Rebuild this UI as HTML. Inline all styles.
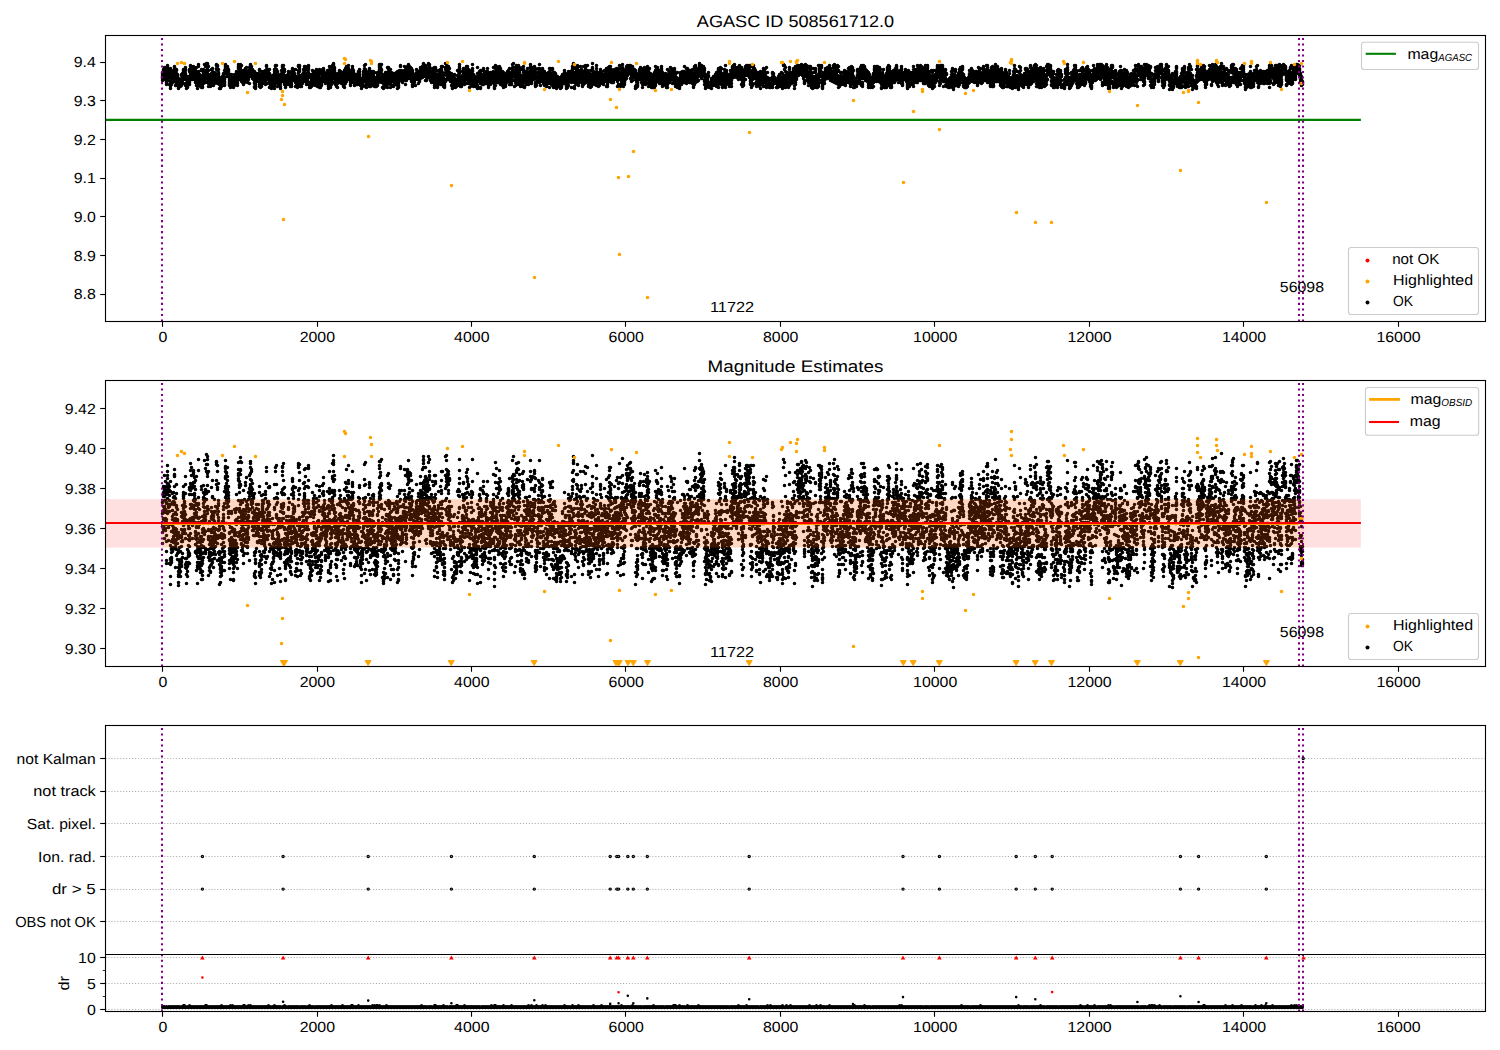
<!DOCTYPE html><html><head><meta charset="utf-8"><title>AGASC ID 508561712.0</title><style>html,body{margin:0;padding:0;background:#fff;overflow:hidden}svg{display:block}text{font-family:"Liberation Sans",sans-serif;fill:#000;text-rendering:geometricPrecision}</style></head><body>
<svg width="1500" height="1050" viewBox="0 0 1500 1050">
<rect width="1500" height="1050" fill="#fff"/>
<defs>
<clipPath id="c0"><rect x="105.5" y="35.5" width="1380.0" height="286.0"/></clipPath>
<clipPath id="c1"><rect x="105.5" y="380.5" width="1380.0" height="286.0"/></clipPath>
<clipPath id="c2"><rect x="105.5" y="725.5" width="1380.0" height="286.0"/></clipPath>
</defs>
<g clip-path="url(#c0)"><path transform="translate(0.5 0.5)" fill="none" stroke="#000" stroke-width="3.6" stroke-linecap="round" d="M162 72h0m0 2h0m0 2h0m0 1h0m0 1h0m0 2h0m1-11h0m0 1h0m0 1h0m0 2h0m0 1h0m0 1h0m0 1h0m0 1h0m1-10h0m0 2h0m0 1h0m0 1h0m0 1h0m0 1h0m0 1h0m0 2h0m0 3h0m1-11h0m0 1h0m0 1h0m0 2h0m0 2h0m0 1h0m0 1h0m0 1h0m0 1h0m1-7h0m0 1h0m0 3h0m0 1h0m0 1h0m0 2h0m0 1h0m0 2h0m0 2h0m1-19h0m0 1h0m0 1h0m0 1h0m0 1h0m0 2h0m0 3h0m1-5h0m0 1h0m0 3h0m0 4h0m0 3h0m1-11h0m0 1h0m0 1h0m0 1h0m0 1h0m0 1h0m0 2h0m0 8h0m1-16h0m0 2h0m0 3h0m0 3h0m0 5h0m0 2h0m0 1h0m0 2h0m0 2h0m1-10h0m0 2h0m0 1h0m0 1h0m0 1h0m0 1h0m1-13h0m0 1h0m0 2h0m0 1h0m0 1h0m0 1h0m0 2h0m0 1h0m0 1h0m0 1h0m1-12h0m0 1h0m0 1h0m0 1h0m0 2h0m0 2h0m0 1h0m0 1h0m0 1h0m0 1h0m1-15h0m0 1h0m0 2h0m0 2h0m0 1h0m0 1h0m0 3h0m0 2h0m0 3h0m1-10h0m0 3h0m0 1h0m0 1h0m0 1h0m0 1h0m0 2h0m0 1h0m0 4h0m1-16h0m0 1h0m0 3h0m0 2h0m0 2h0m0 1h0m0 1h0m0 1h0m0 1h0m0 2h0m1-9h0m0 1h0m0 1h0m0 3h0m0 1h0m0 2h0m0 1h0m1-5h0m0 1h0m0 3h0m0 3h0m0 1h0m0 1h0m0 1h0m1-9h0m0 2h0m0 3h0m0 1h0m0 1h0m1-4h0m0 1h0m0 2h0m0 1h0m1-12h0m0 1h0m0 3h0m0 1h0m0 1h0m0 1h0m0 2h0m0 1h0m0 1h0m1-12h0m0 1h0m0 1h0m0 1h0m0 2h0m0 2h0m0 2h0m0 1h0m1-14h0m0 1h0m0 1h0m0 1h0m0 1h0m0 1h0m0 1h0m0 1h0m0 1h0m0 1h0m1-6h0m0 1h0m0 1h0m0 1h0m0 1h0m0 2h0m1-11h0m0 2h0m0 1h0m0 3h0m0 2h0m0 1h0m0 2h0m0 1h0m0 4h0m0 1h0m0 1h0m1-9h0m0 7h0m0 1h0m0 1h0m0 1h0m0 2h0m1-12h0m0 5h0m0 3h0m0 1h0m0 1h0m0 1h0m1-10h0m0 2h0m0 2h0m0 1h0m0 1h0m0 1h0m1-15h0m0 1h0m0 1h0m0 5h0m0 1h0m0 2h0m0 1h0m0 1h0m0 1h0m0 2h0m1-19h0m0 1h0m0 3h0m0 1h0m0 3h0m0 1h0m0 1h0m0 1h0m0 2h0m1-12h0m0 1h0m0 3h0m0 1h0m0 2h0m0 3h0m1-7h0m0 6h0m0 2h0m0 2h0m1-13h0m0 1h0m0 1h0m0 1h0m0 3h0m0 1h0m0 3h0m1-9h0m0 1h0m0 1h0m0 2h0m0 1h0m0 1h0m0 1h0m0 1h0m0 1h0m1-8h0m0 2h0m0 2h0m0 2h0m0 2h0m0 2h0m0 1h0m0 1h0m0 2h0m1-15h0m0 6h0m0 1h0m0 1h0m0 1h0m0 1h0m0 2h0m0 3h0m0 3h0m1-12h0m0 6h0m0 1h0m0 1h0m0 1h0m0 1h0m0 1h0m0 1h0m0 3h0m1-24h0m0 2h0m0 5h0m0 1h0m0 1h0m0 2h0m0 1h0m0 1h0m0 1h0m0 4h0m0 1h0m1-9h0m0 1h0m0 1h0m0 1h0m0 3h0m0 1h0m0 1h0m0 1h0m0 1h0m0 1h0m1-6h0m0 1h0m0 1h0m0 1h0m0 1h0m0 1h0m0 1h0m0 1h0m1-17h0m0 1h0m0 6h0m0 3h0m0 1h0m0 1h0m0 1h0m0 1h0m0 1h0m0 2h0m0 1h0m1-12h0m0 2h0m0 1h0m0 1h0m0 1h0m0 1h0m0 1h0m0 2h0m0 2h0m0 1h0m1-18h0m0 1h0m0 1h0m0 1h0m0 1h0m0 3h0m0 1h0m0 2h0m0 2h0m0 2h0m1-19h0m0 7h0m0 1h0m0 1h0m0 1h0m0 1h0m0 3h0m0 4h0m1-16h0m0 4h0m0 5h0m0 1h0m0 2h0m0 3h0m0 1h0m1-19h0m0 2h0m0 1h0m0 5h0m0 1h0m0 1h0m1-10h0m0 1h0m0 1h0m0 2h0m0 2h0m0 1h0m0 3h0m0 1h0m1-8h0m0 4h0m0 4h0m0 2h0m0 2h0m0 1h0m0 2h0m0 2h0m0 3h0m1-10h0m0 4h0m0 2h0m0 1h0m0 2h0m1-7h0m0 1h0m0 1h0m0 1h0m0 1h0m0 1h0m0 1h0m0 2h0m1-17h0m0 4h0m0 1h0m0 1h0m0 2h0m0 1h0m0 2h0m0 1h0m0 3h0m1-16h0m0 3h0m0 4h0m0 3h0m0 1h0m0 1h0m0 1h0m0 1h0m0 1h0m0 1h0m1-9h0m0 1h0m0 1h0m0 1h0m0 1h0m0 1h0m0 1h0m0 4h0m1-13h0m0 2h0m0 2h0m0 2h0m0 2h0m0 1h0m0 1h0m0 1h0m1-10h0m0 1h0m0 2h0m0 1h0m0 1h0m0 1h0m0 1h0m0 1h0m0 1h0m1-18h0m0 1h0m0 3h0m0 1h0m1-4h0m0 1h0m0 3h0m0 1h0m0 3h0m0 1h0m0 5h0m0 1h0m0 3h0m1-14h0m0 3h0m0 1h0m0 1h0m0 1h0m0 1h0m0 2h0m0 1h0m0 3h0m1-5h0m0 2h0m0 3h0m0 1h0m0 1h0m0 4h0m1-6h0m0 1h0m0 1h0m0 1h0m0 1h0m0 1h0m0 1h0m1-10h0m0 2h0m0 3h0m0 2h0m0 1h0m1-10h0m0 1h0m0 2h0m0 2h0m0 1h0m0 1h0m0 1h0m0 1h0m1-12h0m0 1h0m0 1h0m0 1h0m0 1h0m0 1h0m0 2h0m0 1h0m1-11h0m0 3h0m0 5h0m0 1h0m0 2h0m0 1h0m0 1h0m0 1h0m0 1h0m1-21h0m0 1h0m0 1h0m0 1h0m0 1h0m0 1h0m0 1h0m0 1h0m1-5h0m0 1h0m0 2h0m0 1h0m0 1h0m0 1h0m0 1h0m0 3h0m1-10h0m0 1h0m0 1h0m0 1h0m0 1h0m0 2h0m0 1h0m1-4h0m0 1h0m0 1h0m0 1h0m0 1h0m0 1h0m0 1h0m1-1h0m0 3h0m0 1h0m0 1h0m0 1h0m0 1h0m0 1h0m0 1h0m0 1h0m0 1h0m1-8h0m0 2h0m0 1h0m0 1h0m0 1h0m0 1h0m0 4h0m1-13h0m0 3h0m0 1h0m0 1h0m0 1h0m0 1h0m0 1h0m0 1h0m0 1h0m1-7h0m0 1h0m0 1h0m0 1h0m0 1h0m0 1h0m0 1h0m1-3h0m0 2h0m0 1h0m0 1h0m0 1h0m0 1h0m0 1h0m1-13h0m0 2h0m0 1h0m0 1h0m0 1h0m0 1h0m0 1h0m0 4h0m1-11h0m0 2h0m0 2h0m0 1h0m0 1h0m0 1h0m0 1h0m0 1h0m1-12h0m0 2h0m0 1h0m0 1h0m0 2h0m0 3h0m0 2h0m0 1h0m0 1h0m1-3h0m0 2h0m0 2h0m1-21h0m0 2h0m0 1h0m0 1h0m0 4h0m0 3h0m0 1h0m0 2h0m0 1h0m1-12h0m0 1h0m0 1h0m0 1h0m0 3h0m0 1h0m0 4h0m1-14h0m0 2h0m0 1h0m0 2h0m0 3h0m0 1h0m0 1h0m0 4h0m0 1h0m1-14h0m0 7h0m0 2h0m0 1h0m0 1h0m0 1h0m0 2h0m0 1h0m0 1h0m1-9h0m0 3h0m0 1h0m0 1h0m0 1h0m0 1h0m0 2h0m0 1h0m1-12h0m0 4h0m0 2h0m0 1h0m0 1h0m0 1h0m0 1h0m0 1h0m0 2h0m0 1h0m1-12h0m0 3h0m0 1h0m0 1h0m0 1h0m0 1h0m0 3h0m1-14h0m0 1h0m0 5h0m0 2h0m0 2h0m0 1h0m0 1h0m1-13h0m0 5h0m0 1h0m0 2h0m0 1h0m0 2h0m0 1h0m0 2h0m1-8h0m0 3h0m0 1h0m0 1h0m0 1h0m0 1h0m0 1h0m0 1h0m1-12h0m0 2h0m0 1h0m0 1h0m0 1h0m0 2h0m0 2h0m1-12h0m0 3h0m0 1h0m0 5h0m0 7h0m1-19h0m0 1h0m0 2h0m0 1h0m0 1h0m0 1h0m0 4h0m1-8h0m0 2h0m0 1h0m0 1h0m0 1h0m0 1h0m0 1h0m1-4h0m0 1h0m0 1h0m0 1h0m0 1h0m0 1h0m0 2h0m0 1h0m0 1h0m1-7h0m0 4h0m0 1h0m0 1h0m0 1h0m0 1h0m1-8h0m0 3h0m0 1h0m0 1h0m0 1h0m0 2h0m0 3h0m0 1h0m0 3h0m0 1h0m1-11h0m0 3h0m0 3h0m0 1h0m0 1h0m0 2h0m0 1h0m0 1h0m1-15h0m0 1h0m0 1h0m0 1h0m0 1h0m0 1h0m0 3h0m1-6h0m0 1h0m0 1h0m0 1h0m0 1h0m0 1h0m1-7h0m0 1h0m0 1h0m0 1h0m0 1h0m0 1h0m0 2h0m1-11h0m0 1h0m0 4h0m0 5h0m0 1h0m0 2h0m0 2h0m0 1h0m0 1h0m1-12h0m0 5h0m0 4h0m0 3h0m0 1h0m1-16h0m0 3h0m0 1h0m0 2h0m0 1h0m0 2h0m0 2h0m0 1h0m0 1h0m0 1h0m0 1h0m1-14h0m0 1h0m0 1h0m0 1h0m0 1h0m0 1h0m0 2h0m1-8h0m0 1h0m0 3h0m0 1h0m0 1h0m0 1h0m0 1h0m0 3h0m1-8h0m0 2h0m0 1h0m0 3h0m0 1h0m0 1h0m0 1h0m1-13h0m0 1h0m0 5h0m0 3h0m0 2h0m0 3h0m1-19h0m0 1h0m0 3h0m0 5h0m0 3h0m0 6h0m1-11h0m0 1h0m0 2h0m0 1h0m0 1h0m0 1h0m0 1h0m0 4h0m1-14h0m0 3h0m0 1h0m0 1h0m0 2h0m0 1h0m0 2h0m1-10h0m0 4h0m0 1h0m0 1h0m0 1h0m0 1h0m0 1h0m0 2h0m0 2h0m0 5h0m1-11h0m0 5h0m0 4h0m0 1h0m1-8h0m0 3h0m0 3h0m0 1h0m0 3h0m1-13h0m0 1h0m0 1h0m0 1h0m0 1h0m0 2h0m0 3h0m0 3h0m1-9h0m0 1h0m0 1h0m0 1h0m0 1h0m0 1h0m0 1h0m1-15h0m0 2h0m0 2h0m0 1h0m0 2h0m0 4h0m0 1h0m0 1h0m0 1h0m0 2h0m0 3h0m1-23h0m0 1h0m1-1h0m0 4h0m0 2h0m0 2h0m0 2h0m0 3h0m0 1h0m0 1h0m0 1h0m0 1h0m1-11h0m0 1h0m0 3h0m0 2h0m0 1h0m0 2h0m0 1h0m0 2h0m0 3h0m1-10h0m0 1h0m0 1h0m0 1h0m0 1h0m0 1h0m1-6h0m0 1h0m0 1h0m0 3h0m0 1h0m0 1h0m0 1h0m0 2h0m1-11h0m0 3h0m0 3h0m0 2h0m0 1h0m0 3h0m0 2h0m1-18h0m0 3h0m0 3h0m0 1h0m0 3h0m0 1h0m1-16h0m0 1h0m0 1h0m0 3h0m0 1h0m0 2h0m0 1h0m0 1h0m0 2h0m0 2h0m1-14h0m0 3h0m0 2h0m0 1h0m0 1h0m0 1h0m0 1h0m0 1h0m1-6h0m0 2h0m0 6h0m0 2h0m0 1h0m0 1h0m0 1h0m0 2h0m1-6h0m0 1h0m0 2h0m0 1h0m0 2h0m0 1h0m0 2h0m1-12h0m0 1h0m0 2h0m0 1h0m0 1h0m0 1h0m0 1h0m0 1h0m0 1h0m1-8h0m0 1h0m0 1h0m0 1h0m0 1h0m0 1h0m0 1h0m0 1h0m0 1h0m1-13h0m0 2h0m0 1h0m0 1h0m0 1h0m0 1h0m0 1h0m0 2h0m0 1h0m0 1h0m0 1h0m1-11h0m0 4h0m0 1h0m0 1h0m0 2h0m0 1h0m0 2h0m0 1h0m1-7h0m0 1h0m0 2h0m0 1h0m0 2h0m0 1h0m0 1h0m0 1h0m1-15h0m0 4h0m0 1h0m0 2h0m0 1h0m0 1h0m0 2h0m0 2h0m0 2h0m1-18h0m0 1h0m0 1h0m0 3h0m0 3h0m0 1h0m0 2h0m0 1h0m1-11h0m0 1h0m0 1h0m0 2h0m0 1h0m0 1h0m0 1h0m0 1h0m1-4h0m0 1h0m0 2h0m0 1h0m0 1h0m0 1h0m0 1h0m1-11h0m0 7h0m0 2h0m0 1h0m0 1h0m0 1h0m0 1h0m0 4h0m1-10h0m0 2h0m0 1h0m0 1h0m0 1h0m0 1h0m0 2h0m0 1h0m1-8h0m0 1h0m0 1h0m0 1h0m0 1h0m0 1h0m0 1h0m0 1h0m0 1h0m0 2h0m1-22h0m0 1h0m0 4h0m0 2h0m0 1h0m1-8h0m0 1h0m0 2h0m0 2h0m0 1h0m0 4h0m0 1h0m0 1h0m0 1h0m0 4h0m1-5h0m0 1h0m0 1h0m0 2h0m0 1h0m0 1h0m0 2h0m0 1h0m1-9h0m0 1h0m0 1h0m0 1h0m0 1h0m0 1h0m0 1h0m0 1h0m0 2h0m1-12h0m0 1h0m0 1h0m0 1h0m0 1h0m0 1h0m0 3h0m0 1h0m1-14h0m0 3h0m0 2h0m0 1h0m0 1h0m0 1h0m0 1h0m0 1h0m0 1h0m1-14h0m0 2h0m0 1h0m0 1h0m0 1h0m0 1h0m0 1h0m0 1h0m1-8h0m0 1h0m0 2h0m0 4h0m0 1h0m0 2h0m0 1h0m0 2h0m0 1h0m0 1h0m1-6h0m0 1h0m0 1h0m0 2h0m0 1h0m0 2h0m0 2h0m1-15h0m0 3h0m0 3h0m0 2h0m0 1h0m0 1h0m0 2h0m1-16h0m0 1h0m0 2h0m0 1h0m0 3h0m0 1h0m0 1h0m0 3h0m0 7h0m1-10h0m0 8h0m0 1h0m0 1h0m0 3h0m1-12h0m0 7h0m0 3h0m0 1h0m0 1h0m1-13h0m0 4h0m0 2h0m0 2h0m0 1h0m0 2h0m0 1h0m1-16h0m0 9h0m0 1h0m0 1h0m0 1h0m0 2h0m0 1h0m1-13h0m0 1h0m0 1h0m0 1h0m0 1h0m0 2h0m0 3h0m1-10h0m0 2h0m0 1h0m0 1h0m0 1h0m0 1h0m0 2h0m0 1h0m0 2h0m1-5h0m0 1h0m0 3h0m0 1h0m0 1h0m0 1h0m0 1h0m1-16h0m0 2h0m0 1h0m0 1h0m0 4h0m0 1h0m0 1h0m0 1h0m0 2h0m1-6h0m0 4h0m0 1h0m0 2h0m0 1h0m0 1h0m0 1h0m1-14h0m0 1h0m0 3h0m0 1h0m0 2h0m0 1h0m0 3h0m0 3h0m1-17h0m0 1h0m0 1h0m0 3h0m0 5h0m0 1h0m0 1h0m0 2h0m0 4h0m1-9h0m0 2h0m0 5h0m0 1h0m0 1h0m1-14h0m0 4h0m0 1h0m0 1h0m0 3h0m0 1h0m0 1h0m0 1h0m1-16h0m0 2h0m0 3h0m0 2h0m0 1h0m0 1h0m0 1h0m1-11h0m0 1h0m0 1h0m0 1h0m0 2h0m0 2h0m0 1h0m0 1h0m0 1h0m1-6h0m0 2h0m0 1h0m0 1h0m0 1h0m0 1h0m0 3h0m1-5h0m0 1h0m0 1h0m0 1h0m0 1h0m0 3h0m1-10h0m0 4h0m0 1h0m0 1h0m0 1h0m0 1h0m1-11h0m0 3h0m0 2h0m0 1h0m0 1h0m0 1h0m0 4h0m1-9h0m0 1h0m0 2h0m0 5h0m0 1h0m0 1h0m0 2h0m0 1h0m0 2h0m1-22h0m0 3h0m0 1h0m0 2h0m0 1h0m0 1h0m0 2h0m0 1h0m1-5h0m0 4h0m0 1h0m0 1h0m0 1h0m0 1h0m0 2h0m0 2h0m0 1h0m0 1h0m0 1h0m1-15h0m0 1h0m0 3h0m0 1h0m0 1h0m0 1h0m0 1h0m0 1h0m0 3h0m1-19h0m0 2h0m0 1h0m0 2h0m0 1h0m0 1h0m0 1h0m0 1h0m0 4h0m1-15h0m0 1h0m0 1h0m0 1h0m0 2h0m0 5h0m0 3h0m0 2h0m0 4h0m1-15h0m0 1h0m0 2h0m0 1h0m0 2h0m0 1h0m0 1h0m0 1h0m0 1h0m1-3h0m0 1h0m0 1h0m0 1h0m0 1h0m0 1h0m0 1h0m0 1h0m0 3h0m1-8h0m0 2h0m0 1h0m0 2h0m0 1h0m0 1h0m0 1h0m0 1h0m0 1h0m1-13h0m0 4h0m0 1h0m0 1h0m0 1h0m0 2h0m0 1h0m0 4h0m1-14h0m0 2h0m0 1h0m0 1h0m0 1h0m0 1h0m0 3h0m1-12h0m0 2h0m0 3h0m0 1h0m0 1h0m0 1h0m0 2h0m0 2h0m1-11h0m0 1h0m0 1h0m0 1h0m0 1h0m0 1h0m0 2h0m1-3h0m0 1h0m0 1h0m0 1h0m0 2h0m0 1h0m0 2h0m1-11h0m0 1h0m0 3h0m0 1h0m0 1h0m0 1h0m0 1h0m0 1h0m1-6h0m0 2h0m0 3h0m0 2h0m0 1h0m0 2h0m0 1h0m1-16h0m0 1h0m0 1h0m0 4h0m0 1h0m0 4h0m0 2h0m0 1h0m0 3h0m1-19h0m0 4h0m0 1h0m0 1h0m0 1h0m0 3h0m0 2h0m0 1h0m0 2h0m1-17h0m0 3h0m0 1h0m0 2h0m0 3h0m0 4h0m0 2h0m1-10h0m0 1h0m0 1h0m0 2h0m0 1h0m0 1h0m0 1h0m0 1h0m1-14h0m0 3h0m0 1h0m0 1h0m0 1h0m0 1h0m0 1h0m0 2h0m0 2h0m1-5h0m0 1h0m0 1h0m0 1h0m0 1h0m0 1h0m0 1h0m0 1h0m1-5h0m0 1h0m0 2h0m0 1h0m0 1h0m0 2h0m0 1h0m0 2h0m0 1h0m1-15h0m0 1h0m0 1h0m0 1h0m0 1h0m0 2h0m0 1h0m0 2h0m0 1h0m0 1h0m0 1h0m1-16h0m0 2h0m0 1h0m0 2h0m0 2h0m0 1h0m1-4h0m0 2h0m0 1h0m0 1h0m0 1h0m0 1h0m0 1h0m0 1h0m0 2h0m1-2h0m0 1h0m0 1h0m0 1h0m0 2h0m0 2h0m1-11h0m0 3h0m0 1h0m0 1h0m0 2h0m0 1h0m0 1h0m0 1h0m1-10h0m0 2h0m0 1h0m0 1h0m0 1h0m0 1h0m0 1h0m0 1h0m0 1h0m0 1h0m1-8h0m0 1h0m0 2h0m0 2h0m0 1h0m0 1h0m0 1h0m1-13h0m0 1h0m0 2h0m0 1h0m0 1h0m0 1h0m0 2h0m0 1h0m0 1h0m0 1h0m1-13h0m0 2h0m0 1h0m0 2h0m0 1h0m0 1h0m0 1h0m0 5h0m1-2h0m0 1h0m0 1h0m0 1h0m0 1h0m0 1h0m1-7h0m0 2h0m0 2h0m0 1h0m0 1h0m0 1h0m0 1h0m0 2h0m1-10h0m0 1h0m0 2h0m0 1h0m0 1h0m0 1h0m1-13h0m0 2h0m0 1h0m0 1h0m0 2h0m0 1h0m0 1h0m0 2h0m1-16h0m0 3h0m0 1h0m0 3h0m0 2h0m0 1h0m0 2h0m0 2h0m0 2h0m0 5h0m1-22h0m0 5h0m0 2h0m0 2h0m0 2h0m0 1h0m0 3h0m0 1h0m0 5h0m1-10h0m0 4h0m0 1h0m0 1h0m0 1h0m0 1h0m0 4h0m1-13h0m0 2h0m0 1h0m0 1h0m0 1h0m0 1h0m0 1h0m0 1h0m1-11h0m0 2h0m0 3h0m0 1h0m0 1h0m0 1h0m0 1h0m0 1h0m0 3h0m1-16h0m0 1h0m0 3h0m0 1h0m0 1h0m0 1h0m0 1h0m0 1h0m0 3h0m0 6h0m1-15h0m0 5h0m0 2h0m0 1h0m0 1h0m0 1h0m0 1h0m0 1h0m0 3h0m1-12h0m0 2h0m0 1h0m0 1h0m0 2h0m0 2h0m1-11h0m0 1h0m0 2h0m0 1h0m0 2h0m0 1h0m0 3h0m0 1h0m0 3h0m1-14h0m0 1h0m0 1h0m0 1h0m0 2h0m0 1h0m0 1h0m0 1h0m0 2h0m0 1h0m1-10h0m0 5h0m0 1h0m0 1h0m0 1h0m0 1h0m0 3h0m0 2h0m1-7h0m0 1h0m0 2h0m0 1h0m0 1h0m0 1h0m0 1h0m1-5h0m0 1h0m0 2h0m0 1h0m0 1h0m1-14h0m0 1h0m0 2h0m0 1h0m0 2h0m0 1h0m0 3h0m0 1h0m0 1h0m0 1h0m1-12h0m0 1h0m0 2h0m0 1h0m0 1h0m0 2h0m0 2h0m1-18h0m0 1h0m0 1h0m0 1h0m0 2h0m0 1h0m0 1h0m0 1h0m0 1h0m0 4h0m1-13h0m0 2h0m0 1h0m0 2h0m0 1h0m0 1h0m0 6h0m0 1h0m0 1h0m0 1h0m1-16h0m0 5h0m0 1h0m0 3h0m0 1h0m0 3h0m0 3h0m0 1h0m0 1h0m1-7h0m0 1h0m0 1h0m0 2h0m0 8h0m1-8h0m0 3h0m0 1h0m0 3h0m0 1h0m0 1h0m1-14h0m0 6h0m0 1h0m0 1h0m0 1h0m0 2h0m0 1h0m0 1h0m1-15h0m0 3h0m0 2h0m0 1h0m0 1h0m0 2h0m0 2h0m0 1h0m0 2h0m1-14h0m0 2h0m0 1h0m0 1h0m0 1h0m0 1h0m0 1h0m0 1h0m0 1h0m1-14h0m0 5h0m0 1h0m0 4h0m0 1h0m0 1h0m0 3h0m0 1h0m0 1h0m0 3h0m1-20h0m0 2h0m0 3h0m0 3h0m0 2h0m0 1h0m0 1h0m1-9h0m0 2h0m0 1h0m0 2h0m0 1h0m0 1h0m0 2h0m1-10h0m0 3h0m0 2h0m0 2h0m0 1h0m0 1h0m0 1h0m0 1h0m0 1h0m0 2h0m0 1h0m0 3h0m1-15h0m0 2h0m0 1h0m0 2h0m0 1h0m0 1h0m0 1h0m0 1h0m0 4h0m1-9h0m0 1h0m0 1h0m0 1h0m0 1h0m0 1h0m1-8h0m0 1h0m0 2h0m0 2h0m0 1h0m0 1h0m0 1h0m0 4h0m0 1h0m1-13h0m0 2h0m0 3h0m0 1h0m0 1h0m0 1h0m0 1h0m0 1h0m1-7h0m0 1h0m0 1h0m0 1h0m0 1h0m0 1h0m0 1h0m0 2h0m1-12h0m0 1h0m0 1h0m0 1h0m0 2h0m0 1h0m0 2h0m1-9h0m0 2h0m0 1h0m0 1h0m0 1h0m0 1h0m0 1h0m0 1h0m0 6h0m0 3h0m1-15h0m0 3h0m0 1h0m0 2h0m0 3h0m0 2h0m0 1h0m0 1h0m0 1h0m1-17h0m0 1h0m0 1h0m0 3h0m0 1h0m0 1h0m0 2h0m1-14h0m0 1h0m0 6h0m0 1h0m0 2h0m0 1h0m0 1h0m0 2h0m0 1h0m1-10h0m0 3h0m0 2h0m0 1h0m0 1h0m0 2h0m0 1h0m1-4h0m0 2h0m0 1h0m0 1h0m0 2h0m1-9h0m0 1h0m0 1h0m0 2h0m1-11h0m0 4h0m0 1h0m0 1h0m0 1h0m0 1h0m0 1h0m0 1h0m1-9h0m0 4h0m0 1h0m0 2h0m0 2h0m0 2h0m0 2h0m0 4h0m1-13h0m0 2h0m0 1h0m0 1h0m0 2h0m0 1h0m0 1h0m0 1h0m1-14h0m0 1h0m0 2h0m0 2h0m1-7h0m0 3h0m0 1h0m0 3h0m1-5h0m0 4h0m0 2h0m0 1h0m0 1h0m0 1h0m0 1h0m0 2h0m1-11h0m0 1h0m0 5h0m0 2h0m0 1h0m0 1h0m1-9h0m0 3h0m0 1h0m0 1h0m0 1h0m0 1h0m0 2h0m0 2h0m0 2h0m1-11h0m0 2h0m0 2h0m0 3h0m0 1h0m0 3h0m0 3h0m0 1h0m0 1h0m1-10h0m0 1h0m0 1h0m0 1h0m0 1h0m0 1h0m0 1h0m0 1h0m1-9h0m0 1h0m0 2h0m0 1h0m0 1h0m0 1h0m0 2h0m1-8h0m0 1h0m0 1h0m0 1h0m0 1h0m0 7h0m1-16h0m0 3h0m0 1h0m0 1h0m0 1h0m0 2h0m0 1h0m1-6h0m0 1h0m0 1h0m0 1h0m0 1h0m0 1h0m0 2h0m1-8h0m0 2h0m0 1h0m0 1h0m0 1h0m0 1h0m0 1h0m0 1h0m0 4h0m1-11h0m0 2h0m0 1h0m0 1h0m0 1h0m0 1h0m0 2h0m0 1h0m1-14h0m0 2h0m0 1h0m0 1h0m0 1h0m0 1h0m0 1h0m0 4h0m1-8h0m0 1h0m0 1h0m0 1h0m0 1h0m0 2h0m0 1h0m1-11h0m0 3h0m0 1h0m0 1h0m0 1h0m0 1h0m0 1h0m0 3h0m1-14h0m0 1h0m0 1h0m0 3h0m0 1h0m0 1h0m0 1h0m0 1h0m0 2h0m1-6h0m0 1h0m0 2h0m0 1h0m0 1h0m0 1h0m1-9h0m0 2h0m0 1h0m0 1h0m0 1h0m0 1h0m0 1h0m0 3h0m0 1h0m0 4h0m1-12h0m0 1h0m0 2h0m0 1h0m0 2h0m0 2h0m0 3h0m0 1h0m1-12h0m0 1h0m0 1h0m0 3h0m0 1h0m0 1h0m1-12h0m0 2h0m0 4h0m0 2h0m0 1h0m0 3h0m0 1h0m0 1h0m1-13h0m0 2h0m0 1h0m0 1h0m0 2h0m0 3h0m0 1h0m0 3h0m1-6h0m0 1h0m0 3h0m0 1h0m0 1h0m0 1h0m0 1h0m0 1h0m1-9h0m0 3h0m0 1h0m0 1h0m0 1h0m0 2h0m0 1h0m0 2h0m1-14h0m0 4h0m0 2h0m0 1h0m0 1h0m0 1h0m0 1h0m0 1h0m0 1h0m1-11h0m0 3h0m0 1h0m0 1h0m0 1h0m0 1h0m0 4h0m0 2h0m1-15h0m0 4h0m0 1h0m0 1h0m0 1h0m0 2h0m0 1h0m0 3h0m0 1h0m0 2h0m0 2h0m0 2h0m1-20h0m0 1h0m0 1h0m0 2h0m0 3h0m0 1h0m0 1h0m1 0h0m0 1h0m0 2h0m0 1h0m0 1h0m0 1h0m0 2h0m0 1h0m1-11h0m0 1h0m0 3h0m0 4h0m0 1h0m0 1h0m0 2h0m0 1h0m1-17h0m0 3h0m0 1h0m0 1h0m0 1h0m0 1h0m1-2h0m0 2h0m0 1h0m0 1h0m0 1h0m0 1h0m0 1h0m1-13h0m0 3h0m0 4h0m0 1h0m0 1h0m0 1h0m0 1h0m0 1h0m0 1h0m0 1h0m0 1h0m1-18h0m0 2h0m0 2h0m0 1h0m0 2h0m0 1h0m0 2h0m1-10h0m0 6h0m0 1h0m0 2h0m0 2h0m0 1h0m0 1h0m0 1h0m0 4h0m1-7h0m0 2h0m0 1h0m0 1h0m0 1h0m0 1h0m0 1h0m0 2h0m1-6h0m0 3h0m0 1h0m0 1h0m0 1h0m0 1h0m1-24h0m0 4h0m0 2h0m0 3h0m0 2h0m0 5h0m0 2h0m1-18h0m0 1h0m0 2h0m0 2h0m0 1h0m0 3h0m0 2h0m0 1h0m1-9h0m0 1h0m0 2h0m0 4h0m0 1h0m0 1h0m0 3h0m0 1h0m1-13h0m0 1h0m0 1h0m0 1h0m0 1h0m0 1h0m0 2h0m0 2h0m0 1h0m0 3h0m1-11h0m0 4h0m0 1h0m0 1h0m0 1h0m0 2h0m0 1h0m1-3h0m0 1h0m0 1h0m0 1h0m0 1h0m0 1h0m0 1h0m1-8h0m0 12h0m1-2h0m0 4h0m0 1h0m1-13h0m0 2h0m0 1h0m0 1h0m0 1h0m0 1h0m0 2h0m0 3h0m0 1h0m1-13h0m0 3h0m0 2h0m0 2h0m0 3h0m0 1h0m0 1h0m1 0h0m0 1h0m1-8h0m0 1h0m0 4h0m0 1h0m0 1h0m1-16h0m0 5h0m0 5h0m0 1h0m0 1h0m0 3h0m1-15h0m0 1h0m0 3h0m0 3h0m0 1h0m0 1h0m0 1h0m0 1h0m0 1h0m1-18h0m0 2h0m0 2h0m0 1h0m0 1h0m0 1h0m0 2h0m0 3h0m0 8h0m1-6h0m0 1h0m0 1h0m0 2h0m0 2h0m0 1h0m0 1h0m1-6h0m0 1h0m0 1h0m0 1h0m0 1h0m0 2h0m1-15h0m0 4h0m0 1h0m0 1h0m0 1h0m0 1h0m0 1h0m1-12h0m0 1h0m0 2h0m0 1h0m0 1h0m0 2h0m0 2h0m0 2h0m1-8h0m0 1h0m0 1h0m0 3h0m0 1h0m0 2h0m0 2h0m0 1h0m0 2h0m1-14h0m0 4h0m0 2h0m0 1h0m0 1h0m0 1h0m1-13h0m0 1h0m0 3h0m0 1h0m0 3h0m0 1h0m0 2h0m0 2h0m0 4h0m1-17h0m0 2h0m0 2h0m0 3h0m0 5h0m1-9h0m0 4h0m0 2h0m0 1h0m0 1h0m0 1h0m0 1h0m0 2h0m0 2h0m1-12h0m0 6h0m0 1h0m0 1h0m0 1h0m0 1h0m0 1h0m0 5h0m1-9h0m0 1h0m0 2h0m0 1h0m0 1h0m0 3h0m1-16h0m0 1h0m0 1h0m0 1h0m0 1h0m0 2h0m0 1h0m0 1h0m0 1h0m0 2h0m0 1h0m1-18h0m0 4h0m0 2h0m0 1h0m0 5h0m0 1h0m0 4h0m0 2h0m0 2h0m1-11h0m0 2h0m0 1h0m0 2h0m0 1h0m0 1h0m0 2h0m0 1h0m0 1h0m0 1h0m1-9h0m0 3h0m0 1h0m0 1h0m0 1h0m0 1h0m1-8h0m0 2h0m0 1h0m0 1h0m0 1h0m0 1h0m0 4h0m1-7h0m0 2h0m0 1h0m0 1h0m0 1h0m0 1h0m1-18h0m0 6h0m0 3h0m0 2h0m0 1h0m0 1h0m0 1h0m0 4h0m0 1h0m0 2h0m1-15h0m0 2h0m0 1h0m0 1h0m0 1h0m0 1h0m0 2h0m1-10h0m0 1h0m0 1h0m0 1h0m0 1h0m0 1h0m0 1h0m0 2h0m1-9h0m0 2h0m0 7h0m0 2h0m0 2h0m0 4h0m0 1h0m1-14h0m0 1h0m0 1h0m0 1h0m0 1h0m0 1h0m0 1h0m1-10h0m0 6h0m0 1h0m0 1h0m0 1h0m0 2h0m0 1h0m0 1h0m0 1h0m1-16h0m0 1h0m0 1h0m0 5h0m0 1h0m0 2h0m0 1h0m0 5h0m1-11h0m0 3h0m0 1h0m0 2h0m0 1h0m0 1h0m0 1h0m0 1h0m1-9h0m0 1h0m0 3h0m0 1h0m0 1h0m0 1h0m0 2h0m1-12h0m0 1h0m0 1h0m0 1h0m0 1h0m0 1h0m0 1h0m0 1h0m1-10h0m0 3h0m0 2h0m0 3h0m0 1h0m0 1h0m0 1h0m0 1h0m0 1h0m1-6h0m0 1h0m0 2h0m0 1h0m0 1h0m0 3h0m0 1h0m0 1h0m0 2h0m1-10h0m0 1h0m0 1h0m0 1h0m0 1h0m0 1h0m0 1h0m1-11h0m0 1h0m0 1h0m0 4h0m0 1h0m0 1h0m0 1h0m0 2h0m0 1h0m1-12h0m0 1h0m0 2h0m0 1h0m0 1h0m0 1h0m0 1h0m0 1h0m1-7h0m0 1h0m0 1h0m0 1h0m0 1h0m0 1h0m0 1h0m0 3h0m1-15h0m0 4h0m0 1h0m0 1h0m0 1h0m0 1h0m0 1h0m0 4h0m1-1h0m0 2h0m0 1h0m0 1h0m0 1h0m0 2h0m0 1h0m0 1h0m1-23h0m0 2h0m0 1h0m0 5h0m0 2h0m0 2h0m0 2h0m0 2h0m0 4h0m1-19h0m0 4h0m0 1h0m0 2h0m0 1h0m0 1h0m0 1h0m0 2h0m1-7h0m0 5h0m0 1h0m0 1h0m0 1h0m0 1h0m0 1h0m0 1h0m1-14h0m0 1h0m0 1h0m0 4h0m0 2h0m0 1h0m0 1h0m0 2h0m0 1h0m0 1h0m1-16h0m0 2h0m0 1h0m0 1h0m0 2h0m0 1h0m0 4h0m0 1h0m0 2h0m1-12h0m0 2h0m0 2h0m0 2h0m0 1h0m0 3h0m0 1h0m0 2h0m0 1h0m0 2h0m1-11h0m0 2h0m0 1h0m0 1h0m0 1h0m0 1h0m1-8h0m0 2h0m0 1h0m0 1h0m0 1h0m0 1h0m0 1h0m0 1h0m0 2h0m0 1h0m0 1h0m0 2h0m1-13h0m0 6h0m0 1h0m0 1h0m0 1h0m0 1h0m0 1h0m0 1h0m0 1h0m0 2h0m1-12h0m0 1h0m0 1h0m0 2h0m0 1h0m0 1h0m0 1h0m0 1h0m1-6h0m0 1h0m0 2h0m0 1h0m0 1h0m0 1h0m0 1h0m0 1h0m0 1h0m1-13h0m0 2h0m0 1h0m0 2h0m0 1h0m0 2h0m0 1h0m1-11h0m0 1h0m0 1h0m0 1h0m0 1h0m0 1h0m0 1h0m0 1h0m0 1h0m1-9h0m0 1h0m0 1h0m0 2h0m0 1h0m1-7h0m0 5h0m0 1h0m0 1h0m0 1h0m0 1h0m0 2h0m0 2h0m0 3h0m1-10h0m0 2h0m0 2h0m0 1h0m0 1h0m0 1h0m0 2h0m0 1h0m1-12h0m0 1h0m0 1h0m0 1h0m0 2h0m0 2h0m0 1h0m0 1h0m0 2h0m0 1h0m1-20h0m0 3h0m0 1h0m0 1h0m0 1h0m0 1h0m0 1h0m0 2h0m0 6h0m1-17h0m0 4h0m0 1h0m0 1h0m0 1h0m0 1h0m0 1h0m0 1h0m0 2h0m1-8h0m0 4h0m0 1h0m0 2h0m0 2h0m0 3h0m0 7h0m1-13h0m0 2h0m0 2h0m0 1h0m0 1h0m0 1h0m0 1h0m0 1h0m0 3h0m1-20h0m0 1h0m0 2h0m0 1h0m0 2h0m0 1h0m0 2h0m0 2h0m1-10h0m0 4h0m0 2h0m0 3h0m0 1h0m0 2h0m0 2h0m0 2h0m0 2h0m1-19h0m0 1h0m0 2h0m0 2h0m0 1h0m0 1h0m0 1h0m0 1h0m0 1h0m0 1h0m0 2h0m0 1h0m1-12h0m0 1h0m0 2h0m0 1h0m0 1h0m0 1h0m0 4h0m0 1h0m0 2h0m0 1h0m1-5h0m0 1h0m0 1h0m0 2h0m0 1h0m0 1h0m0 2h0m0 1h0m0 1h0m1-11h0m0 1h0m0 1h0m0 1h0m0 1h0m0 3h0m0 1h0m1-16h0m0 1h0m0 1h0m0 7h0m0 6h0m0 2h0m0 1h0m0 1h0m1-20h0m0 3h0m0 1h0m0 2h0m0 3h0m0 1h0m0 5h0m0 5h0m1-13h0m0 1h0m0 3h0m0 1h0m0 1h0m0 3h0m0 4h0m0 1h0m1-16h0m0 3h0m0 1h0m0 1h0m0 1h0m0 1h0m0 1h0m0 1h0m1-9h0m0 3h0m0 2h0m0 2h0m0 2h0m0 1h0m0 1h0m0 1h0m0 1h0m1-16h0m0 4h0m0 1h0m0 1h0m0 1h0m0 2h0m0 1h0m0 2h0m1-6h0m0 1h0m0 2h0m0 3h0m0 1h0m0 1h0m0 1h0m0 1h0m1-13h0m0 1h0m0 2h0m0 2h0m0 1h0m0 5h0m1-18h0m0 2h0m0 1h0m0 1h0m0 4h0m0 1h0m0 1h0m0 1h0m0 1h0m0 1h0m1-9h0m0 1h0m0 1h0m0 5h0m0 1h0m0 1h0m0 1h0m0 1h0m0 1h0m0 1h0m0 2h0m1-16h0m0 5h0m0 1h0m0 1h0m0 1h0m0 1h0m0 1h0m0 1h0m0 1h0m1-10h0m0 1h0m0 2h0m0 2h0m0 2h0m0 1h0m0 1h0m0 1h0m1-13h0m0 1h0m0 3h0m0 2h0m0 1h0m0 4h0m1-9h0m0 1h0m0 3h0m0 3h0m0 2h0m0 5h0m0 1h0m0 1h0m0 1h0m0 1h0m1-8h0m0 1h0m0 3h0m0 1h0m0 1h0m0 1h0m1-8h0m0 1h0m0 1h0m0 1h0m0 1h0m0 1h0m1-14h0m0 3h0m0 1h0m0 1h0m0 1h0m0 1h0m0 1h0m0 1h0m0 1h0m1-14h0m0 4h0m0 1h0m0 1h0m0 2h0m0 2h0m0 1h0m0 3h0m0 2h0m0 2h0m1-10h0m0 2h0m0 2h0m0 1h0m0 1h0m0 1h0m0 2h0m0 4h0m1-16h0m0 1h0m0 1h0m0 1h0m0 1h0m0 2h0m0 1h0m0 1h0m0 1h0m0 1h0m1-11h0m0 1h0m0 1h0m0 1h0m0 2h0m0 1h0m0 2h0m0 5h0m1-9h0m0 2h0m0 2h0m0 2h0m0 1h0m0 1h0m0 1h0m0 1h0m0 1h0m1-12h0m0 3h0m0 9h0m0 1h0m0 1h0m1-12h0m0 3h0m0 1h0m0 2h0m0 1h0m0 1h0m0 1h0m0 1h0m1-7h0m0 2h0m0 1h0m0 3h0m0 1h0m0 2h0m0 1h0m1-13h0m0 1h0m0 2h0m0 2h0m0 1h0m0 1h0m0 1h0m0 1h0m1-10h0m0 2h0m0 1h0m0 1h0m0 2h0m0 2h0m0 1h0m0 1h0m0 1h0m1-15h0m0 3h0m0 1h0m0 1h0m0 1h0m0 1h0m0 1h0m0 1h0m0 1h0m0 3h0m0 6h0m1-19h0m0 1h0m0 3h0m0 1h0m0 2h0m0 1h0m0 1h0m0 1h0m1-3h0m0 1h0m0 1h0m0 1h0m0 2h0m0 1h0m0 2h0m0 1h0m1-16h0m0 1h0m0 4h0m0 1h0m0 1h0m0 1h0m0 1h0m0 1h0m0 1h0m0 2h0m0 2h0m0 2h0m1-13h0m0 5h0m0 4h0m0 1h0m0 2h0m0 1h0m0 2h0m1-15h0m0 1h0m0 1h0m0 2h0m0 2h0m0 1h0m0 1h0m0 1h0m0 4h0m1-12h0m0 1h0m0 3h0m0 1h0m0 2h0m0 1h0m0 2h0m0 1h0m0 1h0m0 2h0m1-6h0m0 2h0m0 3h0m0 1h0m0 1h0m1-12h0m0 1h0m0 1h0m0 2h0m0 1h0m0 1h0m0 1h0m0 1h0m0 1h0m1-8h0m0 3h0m0 3h0m0 1h0m0 1h0m0 1h0m1-8h0m0 1h0m0 2h0m0 1h0m0 2h0m0 1h0m0 1h0m1-9h0m0 1h0m0 2h0m0 3h0m0 1h0m0 1h0m0 1h0m0 1h0m0 1h0m1-12h0m0 3h0m0 2h0m0 2h0m0 2h0m0 1h0m0 1h0m1-13h0m0 2h0m0 1h0m0 1h0m0 1h0m0 1h0m0 2h0m1-6h0m0 1h0m0 1h0m0 1h0m0 1h0m0 3h0m1-13h0m0 2h0m0 1h0m0 3h0m0 2h0m0 2h0m0 1h0m0 1h0m0 1h0m1-10h0m0 2h0m0 1h0m0 1h0m0 1h0m0 1h0m0 1h0m0 1h0m1-6h0m0 6h0m0 3h0m0 1h0m0 1h0m0 2h0m1-11h0m0 3h0m0 2h0m0 2h0m0 1h0m0 1h0m0 1h0m1-16h0m0 1h0m0 1h0m0 1h0m0 2h0m0 3h0m0 2h0m0 1h0m0 3h0m1-13h0m0 1h0m0 2h0m0 1h0m0 1h0m0 1h0m0 2h0m1-9h0m0 1h0m0 1h0m0 3h0m0 1h0m0 1h0m0 1h0m1-8h0m0 2h0m0 1h0m0 1h0m0 1h0m0 1h0m0 3h0m0 1h0m0 1h0m0 5h0m1-21h0m0 2h0m0 1h0m0 1h0m0 1h0m0 5h0m0 3h0m0 2h0m1-18h0m0 1h0m0 1h0m0 1h0m0 2h0m0 6h0m0 1h0m1-3h0m0 1h0m0 4h0m0 1h0m0 1h0m0 3h0m0 4h0m0 2h0m1-10h0m0 1h0m0 1h0m0 1h0m0 1h0m0 1h0m1-16h0m0 2h0m0 2h0m0 1h0m0 1h0m0 2h0m0 1h0m0 2h0m0 2h0m0 1h0m1-16h0m0 2h0m0 2h0m0 1h0m0 2h0m0 2h0m0 1h0m0 4h0m0 5h0m1-10h0m0 1h0m0 1h0m0 1h0m0 5h0m0 3h0m1-15h0m0 1h0m0 4h0m0 1h0m0 1h0m0 2h0m0 1h0m0 1h0m0 1h0m1-16h0m0 4h0m0 1h0m0 2h0m0 1h0m0 2h0m0 2h0m0 2h0m0 1h0m1-12h0m0 1h0m0 2h0m0 1h0m0 1h0m0 1h0m0 1h0m0 1h0m0 1h0m0 1h0m0 1h0m1-7h0m0 2h0m0 1h0m0 5h0m0 1h0m0 2h0m0 2h0m1-20h0m0 5h0m0 5h0m0 1h0m0 3h0m0 2h0m0 1h0m0 1h0m1-13h0m0 3h0m0 2h0m0 1h0m0 1h0m0 1h0m0 1h0m0 1h0m0 2h0m1-18h0m0 2h0m0 2h0m0 5h0m0 2h0m0 1h0m0 1h0m0 2h0m0 2h0m1-10h0m0 2h0m0 4h0m0 1h0m0 1h0m0 1h0m1-16h0m0 5h0m0 2h0m0 1h0m0 2h0m0 1h0m0 1h0m0 3h0m1-3h0m0 1h0m0 2h0m0 2h0m0 1h0m0 1h0m0 2h0m1-13h0m0 1h0m0 1h0m0 4h0m0 1h0m0 1h0m0 1h0m0 1h0m0 1h0m0 2h0m1-16h0m0 7h0m0 1h0m0 1h0m0 1h0m0 1h0m0 1h0m0 1h0m0 4h0m1-13h0m0 1h0m0 1h0m0 4h0m0 2h0m0 1h0m0 1h0m0 2h0m1-23h0m0 4h0m0 2h0m0 1h0m0 3h0m0 4h0m0 2h0m0 1h0m0 1h0m0 1h0m1-11h0m0 1h0m0 2h0m0 1h0m0 3h0m0 1h0m0 1h0m0 1h0m0 1h0m0 1h0m1-11h0m0 1h0m0 4h0m0 1h0m0 1h0m0 1h0m0 1h0m0 3h0m1-11h0m0 1h0m0 1h0m0 1h0m0 1h0m0 1h0m0 2h0m0 1h0m1-16h0m0 3h0m0 3h0m0 1h0m0 3h0m0 1h0m0 1h0m0 1h0m0 1h0m0 2h0m0 1h0m0 3h0m1-13h0m0 2h0m0 1h0m0 1h0m0 1h0m0 1h0m0 1h0m0 1h0m0 1h0m1-7h0m0 1h0m0 1h0m0 1h0m0 1h0m0 1h0m0 1h0m0 6h0m1-9h0m0 1h0m0 1h0m0 1h0m0 1h0m0 1h0m0 1h0m0 1h0m0 1h0m1-16h0m0 1h0m0 1h0m0 1h0m0 1h0m0 3h0m0 1h0m0 2h0m1-8h0m0 2h0m0 2h0m0 1h0m0 1h0m0 1h0m0 1h0m0 2h0m1-7h0m0 1h0m0 1h0m0 1h0m0 1h0m0 1h0m0 1h0m0 3h0m1-8h0m0 2h0m0 2h0m0 2h0m0 1h0m0 1h0m0 1h0m1-14h0m0 3h0m0 1h0m0 1h0m0 1h0m0 1h0m0 2h0m0 1h0m1-7h0m0 2h0m0 1h0m0 1h0m0 1h0m1-10h0m0 3h0m0 3h0m0 1h0m0 2h0m0 1h0m0 1h0m0 2h0m0 5h0m1-11h0m0 1h0m0 1h0m0 2h0m0 2h0m0 1h0m0 2h0m0 2h0m1-19h0m0 3h0m0 1h0m0 1h0m0 1h0m0 2h0m0 2h0m0 1h0m0 2h0m1-14h0m0 1h0m0 1h0m0 1h0m0 3h0m0 3h0m0 2h0m0 1h0m0 1h0m0 2h0m1-15h0m0 3h0m0 1h0m0 1h0m0 1h0m0 1h0m0 1h0m0 4h0m1-9h0m0 2h0m0 3h0m0 2h0m0 2h0m0 1h0m0 1h0m0 1h0m0 1h0m1-10h0m0 3h0m0 1h0m0 1h0m0 1h0m0 1h0m0 1h0m0 1h0m0 1h0m1-7h0m0 1h0m0 2h0m0 1h0m0 1h0m0 2h0m1-13h0m0 2h0m0 1h0m0 2h0m0 2h0m0 2h0m1-7h0m0 1h0m0 1h0m0 1h0m0 1h0m0 1h0m0 1h0m0 1h0m1-10h0m0 5h0m0 1h0m0 1h0m0 1h0m0 1h0m0 1h0m0 1h0m1-11h0m0 3h0m0 2h0m0 1h0m0 3h0m0 2h0m0 1h0m0 1h0m0 5h0m1-17h0m0 1h0m0 3h0m0 2h0m0 1h0m0 1h0m0 1h0m0 6h0m1-19h0m0 3h0m0 5h0m0 2h0m0 1h0m0 2h0m1-11h0m0 7h0m0 1h0m0 2h0m0 1h0m0 1h0m0 5h0m0 2h0m1-15h0m0 1h0m0 1h0m0 1h0m0 1h0m0 6h0m0 2h0m1-19h0m0 3h0m0 2h0m0 1h0m0 1h0m0 1h0m0 1h0m0 3h0m0 4h0m1-8h0m0 1h0m0 2h0m0 2h0m0 4h0m0 1h0m0 1h0m0 1h0m0 2h0m1-16h0m0 3h0m0 1h0m0 2h0m0 1h0m0 2h0m0 2h0m0 1h0m0 2h0m1-15h0m0 2h0m0 1h0m0 1h0m0 1h0m0 1h0m0 1h0m0 1h0m0 2h0m1-13h0m0 1h0m0 2h0m0 1h0m0 1h0m0 2h0m0 2h0m0 3h0m1-13h0m0 2h0m0 1h0m0 1h0m0 2h0m0 1h0m0 1h0m0 2h0m1-9h0m0 1h0m0 3h0m1-5h0m0 1h0m0 1h0m0 3h0m0 3h0m1-8h0m0 1h0m0 1h0m0 1h0m0 1h0m0 1h0m0 2h0m0 6h0m1-10h0m0 1h0m0 1h0m0 1h0m0 1h0m0 1h0m0 2h0m0 2h0m0 3h0m0 1h0m1-15h0m0 1h0m0 3h0m0 2h0m0 1h0m0 1h0m0 1h0m0 1h0m0 1h0m0 3h0m1-11h0m0 1h0m0 1h0m0 2h0m0 2h0m1-6h0m0 3h0m0 2h0m0 1h0m0 1h0m0 1h0m1-7h0m0 1h0m0 1h0m0 2h0m0 1h0m0 2h0m0 2h0m0 7h0m0 2h0m1-9h0m0 2h0m0 3h0m0 1h0m0 1h0m0 1h0m1-8h0m0 1h0m0 1h0m0 1h0m0 1h0m0 1h0m0 1h0m0 1h0m1-13h0m0 2h0m0 1h0m0 1h0m0 1h0m0 1h0m1-10h0m0 1h0m0 1h0m0 1h0m0 1h0m0 2h0m0 1h0m0 1h0m0 1h0m1-11h0m0 1h0m0 3h0m0 1h0m0 1h0m0 2h0m0 4h0m1-8h0m0 1h0m0 1h0m0 1h0m0 1h0m0 1h0m0 3h0m0 2h0m0 1h0m1-10h0m0 1h0m0 1h0m0 1h0m0 3h0m0 1h0m0 2h0m0 1h0m0 1h0m0 1h0m0 3h0m1-19h0m0 1h0m0 5h0m0 1h0m0 1h0m0 1h0m0 1h0m0 2h0m0 1h0m0 3h0m1-17h0m0 4h0m0 1h0m0 1h0m0 2h0m0 1h0m0 2h0m0 1h0m0 1h0m1-8h0m0 1h0m0 1h0m0 5h0m0 1h0m0 1h0m0 1h0m0 2h0m1-16h0m0 1h0m0 2h0m0 2h0m0 1h0m0 1h0m0 2h0m0 5h0m1-16h0m0 1h0m0 1h0m0 1h0m0 1h0m0 1h0m0 1h0m0 1h0m1-4h0m0 1h0m0 1h0m0 2h0m0 1h0m0 2h0m0 2h0m0 1h0m0 4h0m0 3h0m1-18h0m0 6h0m0 1h0m0 1h0m0 1h0m0 1h0m0 2h0m0 1h0m1-8h0m0 2h0m0 1h0m0 1h0m0 1h0m0 1h0m0 2h0m0 1h0m0 2h0m1-7h0m0 4h0m0 1h0m0 1h0m0 2h0m0 2h0m1-7h0m0 4h0m0 1h0m0 2h0m1-13h0m0 1h0m0 2h0m0 1h0m0 1h0m0 2h0m0 1h0m0 1h0m0 2h0m0 2h0m1-15h0m0 1h0m0 2h0m0 1h0m0 2h0m0 1h0m0 2h0m0 1h0m0 1h0m0 2h0m0 2h0m1-21h0m0 4h0m0 5h0m0 1h0m0 3h0m0 3h0m0 1h0m0 2h0m1-17h0m0 2h0m0 1h0m0 1h0m0 4h0m0 1h0m0 2h0m0 2h0m1-14h0m0 1h0m0 1h0m0 1h0m0 3h0m0 1h0m0 1h0m0 2h0m0 1h0m0 3h0m1-11h0m0 2h0m0 1h0m0 1h0m0 1h0m0 1h0m0 1h0m0 1h0m1-7h0m0 5h0m0 2h0m0 1h0m0 1h0m0 1h0m0 1h0m0 1h0m1-13h0m0 2h0m0 2h0m0 1h0m0 1h0m0 1h0m0 3h0m0 1h0m1-15h0m0 2h0m0 1h0m0 1h0m0 1h0m0 1h0m0 1h0m0 1h0m0 2h0m0 1h0m0 2h0m0 1h0m0 2h0m1-10h0m0 1h0m0 1h0m0 5h0m0 3h0m0 1h0m0 1h0m0 1h0m0 1h0m1-12h0m0 1h0m0 2h0m0 1h0m0 1h0m0 2h0m0 1h0m0 1h0m0 1h0m0 1h0m1-9h0m0 2h0m0 1h0m0 1h0m0 1h0m0 2h0m1-10h0m0 1h0m0 1h0m0 2h0m0 1h0m0 3h0m0 1h0m0 1h0m0 1h0m1-5h0m0 2h0m0 1h0m0 1h0m0 2h0m0 2h0m1-18h0m0 7h0m0 1h0m0 1h0m0 1h0m0 1h0m0 1h0m0 2h0m0 1h0m0 3h0m1-17h0m0 3h0m0 1h0m0 1h0m0 1h0m0 2h0m0 2h0m0 1h0m1-10h0m0 1h0m0 2h0m0 1h0m0 1h0m0 1h0m0 1h0m0 1h0m0 1h0m0 1h0m0 1h0m1-15h0m0 6h0m0 1h0m0 1h0m0 3h0m0 1h0m0 1h0m1-12h0m0 1h0m0 3h0m0 1h0m0 2h0m0 2h0m1-7h0m0 2h0m0 1h0m0 2h0m0 1h0m0 1h0m0 1h0m0 5h0m1-14h0m0 3h0m0 2h0m0 1h0m0 1h0m0 1h0m0 1h0m0 1h0m0 1h0m1-12h0m0 2h0m0 1h0m0 1h0m0 3h0m0 1h0m0 1h0m0 1h0m0 1h0m0 1h0m0 2h0m1-8h0m0 4h0m0 1h0m0 2h0m0 2h0m0 1h0m0 2h0m1-9h0m0 1h0m0 2h0m0 1h0m0 1h0m0 2h0m0 1h0m0 1h0m1-14h0m0 8h0m0 1h0m0 6h0m1-6h0m0 2h0m1-5h0m0 3h0m0 1h0m0 1h0m0 1h0m0 2h0m0 1h0m0 1h0m1-16h0m0 2h0m0 2h0m0 1h0m0 1h0m0 1h0m0 2h0m0 1h0m0 1h0m0 1h0m1-8h0m0 2h0m0 1h0m0 1h0m0 1h0m0 1h0m0 2h0m1-13h0m0 3h0m0 1h0m0 2h0m0 1h0m0 1h0m0 2h0m1-10h0m0 2h0m0 2h0m0 1h0m0 1h0m0 1h0m0 1h0m0 3h0m1-16h0m0 5h0m0 1h0m0 1h0m0 1h0m0 1h0m0 1h0m0 6h0m1-9h0m0 1h0m0 1h0m0 1h0m0 1h0m1-9h0m0 5h0m0 1h0m0 2h0m0 2h0m0 1h0m0 1h0m0 3h0m1-15h0m0 3h0m0 3h0m0 1h0m0 1h0m0 1h0m0 1h0m0 1h0m0 2h0m1-9h0m0 2h0m0 1h0m0 1h0m0 1h0m0 2h0m0 1h0m1-10h0m0 1h0m0 1h0m0 4h0m0 1h0m0 1h0m0 2h0m0 2h0m1-12h0m0 2h0m0 1h0m0 1h0m0 3h0m0 1h0m0 1h0m0 2h0m0 1h0m1-11h0m0 1h0m0 1h0m0 1h0m0 1h0m0 1h0m0 1h0m0 1h0m1-9h0m0 3h0m0 1h0m0 1h0m0 1h0m0 1h0m0 1h0m0 4h0m0 1h0m0 1h0m1-8h0m0 3h0m0 2h0m0 2h0m0 2h0m0 2h0m0 1h0m1-21h0m0 2h0m0 1h0m0 3h0m0 1h0m0 1h0m0 6h0m0 2h0m0 2h0m1-19h0m0 1h0m0 1h0m0 2h0m0 1h0m0 3h0m0 1h0m0 2h0m0 5h0m0 1h0m1-9h0m0 1h0m0 2h0m0 1h0m0 1h0m0 1h0m0 1h0m1-11h0m0 2h0m0 2h0m0 1h0m0 2h0m0 1h0m0 4h0m1-13h0m0 1h0m0 2h0m0 1h0m0 2h0m0 1h0m0 1h0m0 4h0m1-17h0m0 1h0m0 2h0m0 5h0m1-6h0m0 1h0m0 1h0m0 1h0m0 3h0m0 1h0m0 1h0m1-8h0m0 1h0m0 1h0m0 3h0m0 2h0m0 3h0m0 1h0m0 2h0m1-12h0m0 1h0m0 1h0m0 5h0m0 1h0m1-8h0m0 1h0m0 1h0m0 1h0m0 1h0m0 1h0m0 1h0m1-4h0m0 2h0m0 3h0m0 1h0m0 1h0m0 1h0m0 3h0m0 1h0m0 1h0m0 3h0m1-4h0m0 1h0m0 2h0m0 2h0m0 1h0m0 2h0m1-11h0m0 3h0m0 1h0m0 1h0m0 1h0m0 1h0m0 1h0m0 1h0m0 1h0m1-13h0m0 1h0m0 3h0m0 2h0m0 1h0m0 2h0m0 1h0m1-12h0m0 3h0m0 1h0m0 6h0m0 1h0m0 1h0m0 1h0m0 1h0m1-2h0m0 1h0m0 1h0m0 1h0m1-5h0m0 2h0m0 1h0m0 1h0m0 1h0m1-9h0m0 1h0m0 1h0m0 1h0m0 1h0m0 2h0m0 1h0m0 3h0m1-10h0m0 1h0m0 1h0m0 1h0m0 1h0m0 1h0m1-7h0m0 1h0m0 1h0m0 1h0m0 1h0m0 1h0m0 1h0m0 3h0m1-8h0m0 1h0m0 1h0m0 1h0m0 1h0m0 1h0m0 2h0m1-10h0m0 1h0m0 1h0m0 1h0m0 5h0m1-10h0m0 3h0m0 1h0m0 2h0m0 3h0m0 1h0m0 1h0m0 1h0m0 2h0m1-8h0m0 3h0m0 1h0m0 1h0m1-15h0m0 1h0m0 1h0m0 4h0m0 3h0m0 1h0m0 1h0m0 1h0m0 1h0m0 3h0m0 3h0m1-18h0m0 1h0m0 1h0m0 1h0m0 2h0m0 1h0m0 2h0m0 1h0m1-11h0m0 1h0m0 1h0m0 1h0m0 1h0m0 4h0m0 1h0m0 1h0m0 1h0m0 4h0m1-14h0m0 5h0m0 1h0m0 2h0m0 1h0m0 1h0m0 1h0m0 1h0m0 4h0m1-7h0m0 1h0m0 2h0m0 1h0m0 1h0m0 1h0m0 1h0m0 1h0m0 1h0m0 1h0m1-13h0m0 5h0m0 1h0m0 1h0m0 1h0m0 2h0m0 1h0m1-16h0m0 3h0m0 5h0m0 2h0m0 1h0m0 1h0m0 1h0m1-17h0m0 6h0m0 3h0m0 2h0m0 1h0m0 1h0m0 1h0m0 1h0m0 3h0m0 2h0m0 2h0m1-17h0m0 2h0m0 1h0m0 4h0m0 3h0m0 1h0m0 2h0m0 1h0m1-10h0m0 2h0m0 1h0m0 2h0m0 1h0m0 2h0m1-5h0m0 1h0m0 1h0m0 1h0m0 1h0m0 1h0m0 1h0m1-4h0m0 1h0m0 1h0m0 2h0m0 3h0m1-16h0m0 3h0m0 1h0m0 1h0m0 4h0m0 1h0m0 1h0m0 1h0m1-10h0m0 1h0m0 1h0m0 3h0m0 2h0m0 1h0m0 3h0m0 3h0m1-20h0m0 1h0m0 2h0m0 2h0m0 1h0m0 2h0m0 1h0m1-10h0m0 4h0m0 1h0m0 1h0m0 2h0m0 1h0m0 1h0m0 1h0m0 1h0m1-13h0m0 2h0m0 1h0m0 2h0m0 1h0m1-3h0m0 1h0m0 1h0m0 1h0m0 1h0m0 1h0m0 1h0m0 1h0m1-6h0m0 3h0m0 4h0m0 1h0m0 1h0m1-10h0m0 4h0m0 2h0m0 1h0m0 1h0m0 1h0m1-9h0m0 4h0m0 1h0m0 1h0m0 1h0m0 1h0m0 1h0m0 2h0m0 1h0m1-14h0m0 1h0m0 3h0m0 1h0m0 1h0m0 4h0m0 1h0m1-8h0m0 1h0m0 1h0m0 1h0m0 1h0m0 1h0m0 2h0m0 1h0m1-9h0m0 2h0m0 2h0m0 3h0m0 2h0m0 1h0m0 2h0m0 5h0m1-9h0m0 2h0m0 1h0m0 1h0m0 1h0m0 1h0m0 1h0m0 3h0m0 1h0m1-14h0m0 2h0m0 1h0m0 2h0m0 2h0m0 1h0m0 1h0m0 1h0m0 2h0m0 1h0m1-16h0m0 1h0m0 1h0m0 1h0m0 1h0m0 1h0m1-8h0m0 1h0m0 2h0m0 1h0m0 1h0m0 2h0m0 1h0m0 1h0m0 4h0m1-14h0m0 1h0m0 1h0m0 1h0m0 1h0m0 2h0m1-6h0m0 1h0m0 1h0m0 1h0m0 1h0m0 1h0m0 1h0m0 1h0m0 1h0m0 2h0m1-9h0m0 1h0m0 1h0m0 1h0m0 1h0m0 1h0m0 1h0m0 3h0m1-10h0m0 2h0m0 2h0m0 1h0m0 3h0m0 1h0m0 2h0m0 1h0m1-12h0m0 1h0m0 4h0m0 1h0m0 4h0m0 1h0m0 4h0m0 1h0m0 2h0m0 1h0m1-19h0m0 8h0m0 2h0m0 1h0m0 2h0m0 2h0m0 2h0m0 1h0m0 1h0m0 1h0m0 2h0m1-16h0m0 4h0m0 1h0m0 1h0m0 2h0m0 4h0m0 1h0m0 1h0m1-20h0m0 2h0m0 1h0m0 1h0m0 1h0m0 1h0m0 1h0m0 2h0m1-6h0m0 3h0m0 1h0m0 3h0m0 1h0m0 1h0m0 1h0m1-8h0m0 1h0m0 1h0m0 1h0m0 1h0m0 1h0m0 1h0m0 1h0m0 6h0m1-7h0m0 2h0m0 3h0m0 1h0m0 2h0m0 1h0m0 1h0m1-13h0m0 1h0m0 1h0m0 1h0m0 1h0m0 1h0m0 1h0m0 1h0m0 2h0m0 1h0m1-11h0m0 2h0m0 1h0m0 1h0m0 1h0m0 1h0m0 1h0m0 1h0m0 3h0m1-11h0m0 5h0m0 2h0m0 2h0m0 1h0m0 1h0m0 1h0m0 1h0m0 1h0m1-15h0m0 3h0m0 1h0m0 1h0m0 2h0m0 1h0m0 3h0m0 6h0m1-14h0m0 2h0m0 3h0m0 1h0m0 1h0m0 1h0m0 1h0m0 1h0m1-12h0m0 2h0m0 1h0m0 1h0m0 3h0m0 1h0m0 1h0m0 1h0m0 1h0m0 1h0m1-16h0m0 2h0m0 2h0m0 1h0m0 2h0m0 1h0m0 2h0m0 8h0m1-16h0m0 1h0m0 1h0m0 1h0m0 1h0m0 1h0m0 1h0m0 2h0m0 2h0m1-12h0m0 7h0m0 1h0m0 3h0m0 1h0m0 1h0m0 1h0m0 3h0m1-18h0m0 12h0m0 1h0m0 1h0m0 1h0m0 2h0m0 3h0m1-15h0m0 5h0m0 1h0m0 1h0m0 1h0m0 2h0m0 2h0m0 2h0m1-6h0m0 2h0m0 2h0m0 1h0m0 1h0m1-8h0m0 4h0m0 3h0m0 1h0m0 1h0m1-4h0m0 1h0m0 2h0m0 1h0m1-9h0m0 1h0m0 3h0m0 2h0m0 2h0m1-14h0m0 1h0m0 3h0m0 4h0m0 1h0m0 1h0m0 2h0m0 1h0m0 2h0m1-14h0m0 2h0m0 1h0m0 1h0m0 1h0m0 1h0m0 2h0m1-4h0m0 1h0m0 1h0m0 3h0m0 1h0m2-3h0m0 7h0m1-9h0m0 3h0m0 1h0m0 1h0m0 1h0m0 2h0m0 1h0m1-11h0m0 1h0m0 3h0m0 1h0m0 2h0m0 1h0m0 2h0m1-12h0m0 2h0m0 1h0m0 1h0m0 1h0m0 1h0m0 1h0m0 1h0m0 1h0m0 3h0m1-10h0m0 1h0m0 1h0m0 1h0m0 1h0m0 1h0m0 1h0m0 1h0m0 1h0m1-12h0m0 5h0m0 1h0m0 2h0m0 1h0m0 1h0m0 2h0m1-11h0m0 5h0m0 1h0m0 3h0m0 3h0m0 1h0m0 1h0m0 1h0m1-24h0m0 1h0m0 11h0m0 2h0m0 1h0m0 1h0m0 1h0m0 1h0m0 2h0m0 3h0m1-22h0m0 4h0m0 6h0m0 1h0m0 1h0m0 2h0m0 2h0m0 1h0m0 1h0m0 1h0m1-17h0m0 4h0m0 4h0m0 1h0m0 1h0m0 1h0m0 2h0m0 1h0m0 3h0m0 3h0m1-13h0m0 1h0m0 1h0m0 1h0m0 1h0m0 1h0m0 2h0m0 4h0m1-13h0m0 1h0m0 2h0m0 2h0m0 1h0m0 1h0m0 1h0m0 1h0m0 3h0m0 1h0m1-11h0m0 1h0m0 3h0m0 3h0m0 1h0m0 1h0m0 2h0m0 1h0m0 1h0m1-20h0m0 2h0m0 6h0m0 1h0m0 3h0m0 2h0m0 1h0m0 2h0m0 1h0m1-13h0m0 2h0m0 1h0m0 1h0m0 1h0m0 1h0m0 3h0m1-8h0m0 2h0m0 1h0m0 1h0m0 1h0m0 2h0m0 3h0m1-11h0m0 1h0m0 2h0m0 1h0m0 1h0m0 1h0m0 1h0m0 2h0m1-13h0m0 2h0m0 1h0m0 1h0m0 5h0m0 2h0m0 1h0m0 1h0m1-13h0m0 3h0m0 1h0m0 3h0m0 1h0m0 2h0m0 1h0m0 3h0m0 3h0m0 3h0m1-22h0m0 6h0m0 4h0m0 1h0m0 2h0m0 1h0m0 2h0m0 2h0m1-15h0m0 5h0m0 1h0m0 2h0m0 2h0m1-14h0m0 1h0m0 1h0m0 3h0m0 2h0m1-7h0m0 3h0m0 1h0m0 1h0m0 1h0m0 4h0m1-9h0m0 2h0m0 1h0m0 1h0m0 1h0m0 1h0m0 2h0m1-8h0m0 2h0m0 1h0m0 2h0m1-7h0m0 2h0m0 1h0m0 1h0m0 1h0m0 2h0m1-6h0m0 1h0m0 1h0m0 2h0m0 1h0m0 2h0m0 2h0m0 1h0m1-10h0m0 4h0m0 2h0m0 1h0m0 1h0m0 1h0m0 4h0m1-8h0m0 2h0m0 2h0m0 1h0m0 1h0m0 4h0m0 1h0m0 1h0m0 1h0m1-19h0m0 2h0m0 1h0m0 1h0m0 6h0m1-9h0m0 2h0m0 1h0m0 2h0m0 1h0m0 1h0m0 2h0m0 2h0m1-5h0m0 1h0m0 1h0m0 2h0m0 3h0m0 1h0m0 1h0m1-14h0m0 8h0m0 2h0m0 1h0m0 1h0m0 1h0m0 1h0m0 1h0m0 1h0m0 3h0m1-19h0m0 2h0m0 3h0m0 1h0m0 2h0m0 1h0m1-9h0m0 1h0m0 1h0m0 2h0m0 2h0m0 1h0m0 3h0m0 2h0m0 2h0m1-5h0m0 1h0m0 4h0m0 1h0m0 1h0m0 1h0m0 1h0m0 2h0m0 1h0m1-6h0m0 1h0m0 1h0m0 1h0m0 1h0m0 1h0m0 2h0m1-20h0m0 4h0m0 4h0m0 2h0m0 1h0m0 1h0m0 1h0m0 1h0m0 1h0m0 1h0m1-5h0m0 2h0m0 2h0m0 1h0m0 1h0m0 1h0m0 1h0m1-19h0m0 1h0m0 2h0m0 1h0m0 4h0m0 5h0m0 1h0m0 1h0m0 1h0m1-9h0m0 2h0m0 1h0m0 1h0m0 1h0m0 1h0m0 2h0m0 4h0m1-12h0m0 1h0m0 2h0m0 3h0m0 1h0m0 1h0m0 1h0m0 2h0m0 1h0m1-22h0m0 9h0m0 2h0m0 2h0m0 1h0m0 3h0m0 1h0m0 1h0m0 2h0m1-21h0m0 2h0m0 1h0m0 1h0m0 1h0m0 2h0m1-6h0m0 1h0m0 1h0m0 1h0m0 1h0m0 1h0m0 1h0m0 2h0m0 2h0m1-11h0m0 1h0m0 1h0m0 13h0m0 2h0m1-10h0m0 7h0m0 2h0m0 2h0m0 2h0m0 1h0m0 1h0m0 1h0m1-13h0m0 1h0m0 1h0m0 2h0m0 1h0m0 1h0m0 1h0m1-8h0m0 2h0m0 1h0m0 1h0m0 1h0m0 1h0m0 3h0m1-15h0m0 1h0m0 1h0m0 1h0m0 1h0m0 1h0m0 3h0m0 1h0m1-8h0m0 2h0m0 1h0m0 1h0m0 1h0m0 1h0m0 1h0m0 1h0m0 1h0m1-11h0m0 2h0m0 1h0m0 1h0m0 1h0m0 2h0m0 1h0m0 2h0m0 1h0m1-11h0m0 3h0m0 1h0m0 1h0m0 1h0m0 2h0m0 1h0m1-11h0m0 1h0m0 5h0m1-3h0m0 1h0m0 1h0m0 1h0m0 2h0m0 1h0m0 2h0m0 2h0m0 2h0m1-6h0m0 1h0m0 1h0m0 1h0m0 1h0m0 1h0m0 1h0m1-9h0m0 3h0m0 1h0m0 1h0m0 1h0m0 1h0m0 2h0m0 1h0m1-16h0m0 2h0m0 3h0m0 3h0m0 2h0m0 1h0m0 1h0m0 1h0m0 1h0m1-15h0m0 2h0m0 1h0m0 1h0m0 2h0m0 1h0m0 1h0m0 1h0m0 9h0m1-14h0m0 1h0m0 3h0m0 2h0m0 1h0m0 2h0m0 1h0m1-10h0m0 4h0m0 2h0m0 1h0m0 1h0m0 1h0m0 1h0m0 2h0m0 1h0m0 2h0m1-18h0m0 2h0m0 2h0m0 1h0m0 1h0m0 4h0m0 3h0m1-12h0m0 4h0m0 8h0m0 1h0m0 2h0m0 1h0m0 2h0m0 3h0m1-7h0m0 1h0m0 1h0m0 1h0m0 2h0m0 1h0m1-14h0m0 3h0m0 1h0m0 1h0m0 1h0m0 1h0m0 1h0m0 1h0m0 1h0m1-10h0m0 7h0m0 1h0m0 1h0m0 1h0m0 2h0m1-8h0m0 2h0m0 2h0m0 1h0m0 1h0m0 1h0m1-8h0m0 1h0m0 1h0m0 2h0m0 1h0m0 1h0m0 1h0m0 1h0m0 1h0m1-14h0m0 1h0m0 2h0m0 1h0m0 1h0m0 1h0m0 1h0m0 1h0m0 3h0m1-8h0m0 1h0m0 1h0m0 1h0m0 3h0m0 1h0m0 1h0m0 1h0m0 1h0m0 2h0m1-14h0m0 1h0m0 1h0m0 1h0m0 1h0m0 1h0m0 1h0m0 1h0m1-5h0m0 1h0m0 1h0m0 1h0m0 1h0m0 1h0m0 1h0m1-11h0m0 5h0m0 1h0m0 2h0m0 1h0m0 1h0m0 1h0m0 1h0m0 2h0m1-15h0m0 3h0m0 1h0m0 1h0m0 2h0m0 1h0m0 1h0m0 2h0m0 1h0m1-5h0m0 1h0m0 2h0m0 3h0m0 1h0m0 1h0m0 1h0m0 1h0m0 2h0m1-20h0m0 1h0m0 2h0m0 1h0m0 2h0m0 3h0m0 5h0m0 2h0m0 1h0m1-16h0m0 1h0m0 1h0m0 3h0m0 2h0m0 5h0m0 1h0m1-10h0m0 6h0m0 1h0m0 1h0m0 2h0m0 1h0m0 3h0m0 3h0m1-9h0m0 1h0m0 2h0m0 2h0m0 1h0m0 1h0m0 1h0m0 1h0m1-9h0m0 1h0m0 1h0m0 1h0m0 1h0m0 1h0m0 1h0m0 1h0m1-7h0m0 3h0m0 3h0m0 1h0m0 1h0m1-17h0m0 2h0m0 3h0m0 1h0m0 1h0m0 1h0m0 5h0m0 1h0m1-13h0m0 2h0m0 2h0m0 1h0m0 1h0m0 1h0m0 4h0m1-8h0m0 1h0m0 1h0m0 1h0m0 1h0m0 1h0m0 2h0m0 3h0m1-16h0m0 1h0m0 4h0m0 1h0m0 1h0m0 1h0m0 1h0m0 1h0m0 1h0m0 4h0m1-17h0m0 2h0m0 1h0m0 1h0m0 1h0m0 4h0m0 1h0m0 3h0m0 7h0m1-16h0m0 5h0m0 2h0m0 1h0m0 1h0m0 4h0m0 2h0m0 2h0m1-21h0m0 1h0m0 4h0m0 1h0m0 1h0m0 1h0m0 1h0m1-8h0m0 1h0m0 1h0m0 1h0m0 1h0m0 3h0m0 2h0m0 1h0m0 1h0m1-8h0m0 1h0m0 1h0m0 1h0m0 1h0m0 3h0m0 1h0m0 1h0m0 1h0m0 1h0m1-10h0m0 1h0m0 1h0m0 3h0m0 1h0m0 2h0m0 1h0m1-8h0m0 1h0m0 2h0m0 1h0m0 1h0m0 2h0m0 1h0m0 1h0m0 1h0m1-9h0m0 1h0m0 1h0m0 3h0m0 2h0m0 1h0m0 2h0m0 1h0m0 2h0m0 2h0m1-13h0m0 1h0m0 1h0m0 1h0m0 2h0m0 1h0m0 1h0m0 2h0m1-6h0m0 1h0m0 2h0m0 2h0m0 1h0m0 1h0m0 1h0m0 1h0m0 1h0m1-10h0m0 2h0m0 2h0m0 1h0m0 1h0m0 1h0m1-4h0m0 2h0m0 1h0m0 2h0m0 1h0m0 1h0m1-14h0m0 1h0m0 1h0m0 1h0m0 1h0m0 1h0m0 1h0m0 2h0m0 1h0m0 4h0m1-20h0m0 2h0m0 1h0m0 1h0m0 2h0m0 1h0m0 4h0m0 2h0m1-10h0m0 2h0m0 1h0m0 2h0m0 1h0m0 1h0m0 1h0m1-11h0m0 2h0m0 4h0m0 1h0m0 1h0m0 2h0m0 1h0m0 3h0m0 1h0m1-15h0m0 6h0m1-5h0m0 2h0m0 1h0m0 1h0m0 1h0m0 1h0m0 3h0m0 2h0m0 1h0m0 2h0m1-14h0m0 3h0m0 2h0m0 1h0m0 2h0m0 2h0m0 1h0m0 1h0m0 2h0m1-12h0m0 4h0m0 1h0m0 1h0m0 1h0m0 1h0m0 5h0m1-9h0m0 1h0m0 1h0m0 2h0m0 2h0m0 1h0m0 2h0m0 1h0m0 1h0m0 3h0m0 1h0m1-16h0m0 1h0m0 2h0m0 4h0m0 1h0m0 2h0m0 1h0m0 1h0m0 1h0m0 1h0m0 1h0m1-18h0m0 6h0m0 1h0m0 2h0m0 2h0m0 1h0m0 2h0m1-2h0m0 1h0m0 2h0m0 3h0m1-4h0m0 1h0m0 2h0m0 1h0m1-14h0m0 1h0m0 2h0m0 1h0m0 2h0m0 1h0m0 2h0m0 1h0m0 3h0m0 1h0m1-20h0m0 1h0m0 2h0m0 1h0m0 1h0m0 4h0m0 2h0m0 1h0m0 3h0m1-17h0m0 2h0m0 1h0m0 1h0m0 1h0m0 1h0m0 1h0m0 2h0m1-8h0m0 2h0m0 2h0m0 1h0m0 5h0m0 1h0m0 2h0m0 2h0m0 1h0m0 2h0m0 1h0m1-11h0m0 7h0m0 1h0m0 2h0m0 3h0m1-12h0m0 1h0m0 1h0m0 1h0m0 3h0m0 2h0m0 1h0m0 2h0m0 1h0m1-16h0m0 1h0m0 1h0m0 3h0m0 1h0m0 1h0m0 2h0m0 2h0m1-12h0m0 1h0m0 2h0m0 1h0m0 1h0m0 2h0m0 2h0m1-7h0m0 1h0m0 1h0m0 2h0m0 1h0m0 1h0m0 1h0m0 2h0m0 1h0m1-14h0m0 4h0m0 1h0m0 1h0m0 3h0m0 1h0m0 1h0m0 1h0m1-15h0m0 1h0m0 1h0m0 1h0m0 1h0m0 1h0m0 1h0m0 4h0m1-5h0m0 1h0m0 1h0m0 1h0m0 1h0m0 1h0m0 1h0m1-4h0m0 1h0m0 1h0m0 1h0m0 1h0m0 1h0m0 2h0m0 3h0m1-11h0m0 1h0m0 2h0m0 1h0m0 1h0m0 1h0m0 2h0m1-9h0m0 1h0m0 4h0m0 1h0m0 1h0m0 1h0m0 1h0m0 1h0m1-14h0m0 2h0m0 1h0m0 2h0m0 2h0m0 1h0m0 1h0m0 8h0m1-11h0m0 2h0m0 1h0m0 5h0m0 1h0m0 2h0m0 1h0m0 1h0m1-13h0m0 1h0m0 2h0m0 2h0m0 1h0m0 1h0m1-7h0m0 1h0m0 1h0m0 1h0m0 1h0m0 1h0m1-8h0m0 2h0m0 2h0m0 1h0m0 1h0m0 2h0m0 1h0m0 1h0m1-7h0m0 3h0m0 1h0m0 3h0m0 1h0m0 1h0m1 2h0m0 1h0m0 1h0m0 1h0m0 1h0m0 1h0m1-18h0m0 1h0m0 2h0m0 1h0m0 2h0m0 2h0m0 1h0m0 2h0m0 1h0m1-10h0m0 3h0m0 1h0m0 1h0m0 3h0m0 1h0m0 1h0m0 1h0m0 1h0m0 2h0m1-14h0m0 1h0m0 2h0m0 1h0m0 2h0m0 1h0m0 5h0m1-9h0m0 2h0m0 2h0m0 1h0m0 1h0m0 1h0m0 1h0m1-11h0m0 3h0m0 1h0m0 3h0m0 2h0m0 1h0m0 1h0m0 1h0m1-18h0m0 3h0m0 5h0m0 1h0m0 1h0m0 1h0m0 3h0m0 1h0m0 1h0m0 1h0m0 3h0m1-17h0m0 2h0m0 1h0m0 1h0m0 1h0m0 2h0m0 1h0m1-5h0m0 1h0m0 1h0m0 1h0m0 1h0m0 1h0m0 1h0m0 1h0m1-10h0m0 2h0m0 1h0m0 1h0m0 2h0m0 1h0m0 1h0m0 1h0m0 4h0m1-17h0m0 3h0m0 2h0m0 1h0m0 1h0m0 1h0m0 2h0m0 2h0m0 4h0m0 1h0m1-8h0m0 1h0m0 1h0m0 1h0m0 1h0m0 1h0m0 1h0m1-14h0m0 1h0m0 1h0m0 1h0m0 1h0m0 1h0m0 1h0m0 1h0m0 4h0m1-12h0m0 3h0m0 3h0m0 2h0m0 1h0m0 1h0m0 2h0m0 1h0m0 1h0m0 1h0m1-14h0m0 2h0m0 1h0m0 1h0m0 1h0m0 1h0m0 1h0m0 1h0m0 6h0m1-13h0m0 1h0m0 3h0m0 4h0m0 1h0m0 1h0m0 1h0m1-8h0m0 1h0m0 3h0m0 1h0m0 1h0m0 1h0m0 1h0m0 1h0m0 2h0m0 2h0m1-5h0m0 2h0m0 1h0m0 1h0m0 1h0m1-18h0m0 1h0m0 2h0m0 2h0m0 3h0m0 3h0m0 2h0m0 2h0m0 2h0m0 1h0m1-16h0m0 1h0m0 2h0m0 2h0m0 1h0m0 1h0m0 1h0m0 1h0m0 1h0m0 1h0m1-13h0m0 1h0m0 1h0m0 1h0m0 2h0m0 1h0m0 5h0m0 3h0m0 3h0m1-11h0m0 1h0m0 1h0m0 2h0m0 10h0m1-13h0m0 4h0m0 1h0m0 1h0m0 1h0m0 1h0m0 1h0m0 2h0m0 2h0m0 1h0m1-15h0m0 4h0m0 1h0m0 1h0m0 1h0m0 2h0m0 1h0m0 1h0m0 3h0m1-15h0m0 7h0m0 1h0m0 1h0m0 1h0m0 1h0m0 3h0m1-12h0m0 3h0m0 2h0m0 2h0m0 1h0m0 1h0m0 4h0m0 1h0m0 1h0m0 1h0m1-18h0m0 5h0m0 1h0m0 1h0m0 4h0m0 1h0m0 2h0m0 2h0m0 1h0m1-11h0m0 2h0m0 1h0m0 1h0m0 1h0m0 1h0m0 1h0m0 3h0m1-16h0m0 4h0m0 1h0m0 1h0m0 1h0m0 1h0m0 2h0m0 1h0m0 1h0m1-12h0m0 1h0m0 1h0m0 1h0m0 1h0m0 2h0m0 1h0m0 2h0m0 1h0m1-15h0m0 1h0m0 1h0m0 1h0m0 1h0m0 1h0m0 1h0m0 3h0m0 2h0m1-9h0m0 2h0m0 1h0m0 1h0m0 3h0m0 1h0m0 1h0m0 1h0m1-9h0m0 2h0m0 1h0m0 4h0m0 2h0m0 4h0m0 1h0m0 3h0m1-20h0m0 5h0m0 1h0m0 1h0m0 2h0m0 2h0m0 2h0m0 1h0m0 1h0m0 3h0m1-18h0m0 1h0m0 3h0m0 2h0m0 3h0m0 1h0m0 1h0m0 1h0m0 1h0m0 1h0m1-14h0m0 1h0m0 1h0m0 1h0m0 1h0m0 1h0m0 2h0m0 1h0m1-2h0m0 3h0m0 1h0m0 1h0m0 2h0m0 1h0m0 1h0m0 1h0m0 5h0m1-15h0m0 1h0m0 3h0m0 1h0m0 1h0m0 1h0m0 1h0m0 1h0m0 1h0m1-12h0m0 1h0m0 4h0m0 1h0m0 3h0m0 2h0m0 1h0m0 4h0m1-12h0m0 1h0m0 5h0m0 4h0m0 1h0m0 1h0m0 1h0m1-5h0m0 1h0m0 1h0m0 1h0m0 1h0m0 1h0m1-5h0m0 3h0m0 1h0m0 1h0m0 1h0m1-9h0m0 1h0m0 1h0m0 2h0m0 1h0m0 1h0m0 2h0m0 1h0m1-10h0m0 3h0m0 1h0m0 1h0m0 2h0m0 1h0m1-14h0m0 3h0m0 3h0m0 1h0m0 3h0m0 2h0m0 1h0m0 1h0m0 1h0m1-18h0m0 1h0m0 2h0m0 4h0m0 1h0m0 1h0m0 1h0m0 3h0m0 1h0m0 2h0m0 1h0m0 2h0m1-13h0m0 3h0m0 1h0m0 3h0m0 1h0m0 1h0m0 1h0m0 1h0m0 2h0m0 2h0m1-19h0m0 4h0m0 4h0m0 1h0m0 1h0m0 1h0m0 1h0m0 3h0m1-16h0m0 2h0m0 5h0m0 2h0m0 4h0m0 2h0m0 1h0m1-8h0m0 4h0m0 1h0m0 1h0m0 2h0m1-10h0m0 1h0m0 2h0m0 3h0m0 1h0m0 1h0m0 1h0m0 1h0m1-12h0m0 4h0m0 2h0m0 1h0m0 2h0m0 1h0m0 3h0m1-17h0m0 2h0m0 1h0m0 1h0m0 1h0m0 1h0m0 4h0m0 2h0m0 2h0m0 1h0m1-17h0m0 1h0m0 1h0m0 2h0m0 2h0m0 1h0m0 1h0m0 2h0m0 2h0m1-12h0m0 1h0m0 2h0m0 1h0m0 1h0m0 1h0m0 5h0m1-12h0m0 1h0m0 1h0m0 1h0m0 4h0m0 1h0m0 3h0m0 1h0m0 4h0m1-8h0m0 1h0m0 3h0m0 1h0m0 1h0m0 3h0m0 2h0m0 1h0m1-9h0m0 2h0m0 3h0m0 1h0m0 2h0m0 1h0m0 1h0m1-5h0m0 3h0m0 1h0m0 1h0m1-8h0m0 1h0m0 1h0m0 1h0m0 1h0m0 2h0m0 1h0m0 1h0m1-9h0m0 1h0m0 2h0m0 1h0m0 1h0m0 1h0m0 2h0m1-9h0m0 2h0m0 1h0m0 1h0m0 2h0m1-13h0m0 3h0m0 1h0m0 1h0m0 1h0m0 1h0m0 1h0m0 4h0m1-10h0m0 1h0m0 1h0m0 1h0m0 2h0m0 1h0m0 3h0m1-13h0m0 1h0m0 2h0m0 1h0m0 1h0m0 1h0m0 1h0m0 1h0m0 1h0m1-7h0m0 1h0m0 1h0m0 1h0m0 3h0m0 1h0m0 1h0m0 1h0m0 2h0m1-7h0m0 1h0m0 1h0m0 1h0m0 1h0m0 2h0m1-8h0m0 1h0m0 1h0m0 1h0m0 1h0m0 1h0m0 1h0m0 1h0m0 1h0m0 1h0m0 1h0m1-11h0m0 1h0m0 1h0m0 1h0m0 1h0m0 2h0m0 1h0m0 1h0m1-8h0m0 2h0m0 1h0m0 1h0m0 1h0m0 1h0m0 1h0m1-4h0m0 1h0m0 1h0m0 1h0m0 1h0m0 2h0m0 1h0m0 1h0m0 1h0m0 2h0m1-18h0m0 5h0m0 1h0m0 1h0m0 1h0m0 1h0m0 1h0m0 1h0m0 1h0m1-10h0m0 1h0m0 1h0m0 2h0m0 1h0m0 1h0m0 2h0m0 4h0m0 1h0m1-14h0m0 4h0m0 1h0m0 1h0m0 1h0m0 2h0m0 1h0m0 3h0m1-8h0m0 2h0m0 1h0m0 1h0m0 1h0m0 1h0m0 2h0m0 1h0m0 1h0m1-10h0m0 1h0m0 1h0m0 2h0m0 1h0m0 1h0m0 1h0m0 1h0m0 1h0m1-16h0m0 2h0m0 1h0m0 1h0m0 2h0m0 1h0m0 1h0m0 1h0m1-2h0m0 1h0m0 1h0m0 1h0m0 1h0m0 1h0m0 1h0m1-9h0m0 2h0m0 2h0m0 1h0m0 1h0m0 1h0m0 2h0m0 1h0m1-15h0m0 4h0m0 1h0m0 1h0m0 1h0m0 1h0m0 1h0m0 1h0m0 1h0m0 3h0m1-14h0m0 2h0m0 1h0m0 1h0m0 1h0m0 2h0m0 1h0m0 1h0m0 1h0m0 7h0m1-11h0m0 2h0m0 1h0m0 1h0m0 1h0m0 1h0m0 1h0m0 1h0m0 1h0m1-8h0m0 1h0m0 2h0m0 1h0m0 1h0m0 2h0m1-9h0m0 6h0m0 3h0m0 2h0m0 1h0m0 1h0m0 1h0m0 1h0m0 1h0m1-19h0m0 2h0m0 1h0m0 3h0m0 1h0m0 2h0m0 1h0m0 1h0m0 4h0m0 1h0m1-17h0m0 2h0m0 3h0m0 3h0m0 1h0m0 3h0m0 1h0m0 4h0m0 2h0m0 1h0m1-11h0m0 2h0m0 1h0m0 3h0m0 1h0m0 1h0m0 2h0m0 1h0m1-19h0m0 1h0m0 1h0m0 1h0m0 1h0m0 1h0m0 3h0m0 3h0m1-14h0m0 5h0m0 1h0m0 1h0m0 1h0m0 1h0m0 1h0m1-8h0m0 5h0m0 1h0m0 1h0m0 1h0m0 2h0m0 3h0m0 2h0m1-15h0m0 1h0m0 2h0m0 1h0m0 2h0m0 2h0m0 2h0m0 1h0m0 1h0m0 1h0m0 2h0m1-12h0m0 3h0m0 2h0m0 1h0m0 1h0m0 1h0m0 1h0m0 1h0m1-8h0m0 1h0m0 1h0m0 1h0m0 1h0m0 1h0m0 1h0m1-4h0m0 2h0m0 1h0m0 2h0m0 1h0m0 1h0m0 2h0m0 1h0m0 2h0m1-17h0m0 2h0m0 2h0m0 2h0m0 1h0m0 1h0m0 1h0m0 2h0m0 4h0m0 3h0m1-10h0m0 2h0m0 3h0m0 1h0m0 1h0m0 2h0m0 1h0m0 1h0m1-6h0m0 1h0m0 1h0m0 2h0m0 1h0m0 1h0m1-15h0m0 1h0m0 1h0m0 1h0m0 1h0m0 1h0m0 1h0m0 1h0m0 3h0m1-13h0m0 2h0m0 1h0m0 1h0m0 1h0m0 2h0m0 1h0m0 1h0m1-6h0m0 1h0m0 2h0m0 2h0m0 1h0m0 1h0m0 1h0m0 3h0m0 3h0m1-5h0m0 1h0m0 1h0m0 3h0m1-10h0m0 3h0m0 2h0m0 1h0m0 1h0m0 1h0m0 1h0m0 1h0m1-16h0m0 3h0m0 6h0m0 1h0m0 1h0m0 1h0m0 2h0m0 1h0m1-6h0m0 2h0m0 1h0m0 2h0m0 1h0m0 1h0m0 1h0m1-10h0m0 3h0m0 1h0m0 1h0m0 1h0m0 1h0m0 1h0m1-2h0m0 1h0m0 1h0m0 1h0m0 2h0m1-17h0m0 3h0m0 1h0m0 3h0m0 1h0m0 1h0m0 1h0m0 1h0m1-17h0m0 3h0m0 3h0m0 1h0m0 2h0m0 2h0m0 1h0m0 1h0m0 2h0m1-11h0m0 1h0m0 5h0m0 3h0m0 2h0m0 1h0m0 3h0m0 1h0m0 2h0m1-9h0m0 1h0m0 1h0m0 1h0m0 1h0m0 1h0m0 1h0m0 1h0m1-14h0m0 4h0m0 1h0m0 1h0m0 2h0m0 1h0m0 1h0m0 1h0m0 1h0m0 3h0m1-6h0m0 3h0m0 2h0m0 2h0m0 2h0m1-23h0m0 6h0m0 4h0m0 1h0m0 1h0m0 1h0m0 1h0m0 1h0m0 2h0m0 1h0m1-17h0m0 3h0m0 4h0m0 1h0m0 1h0m0 1h0m0 1h0m0 1h0m0 1h0m0 4h0m1-9h0m0 1h0m0 1h0m0 1h0m0 1h0m0 1h0m0 1h0m0 1h0m0 1h0m0 2h0m1-9h0m0 5h0m0 1h0m0 1h0m0 1h0m0 2h0m1-11h0m0 4h0m0 1h0m0 2h0m0 1h0m0 1h0m0 1h0m0 2h0m1-14h0m0 3h0m0 2h0m0 1h0m0 1h0m0 1h0m0 1h0m1-14h0m0 1h0m0 4h0m0 2h0m0 1h0m0 2h0m0 1h0m0 1h0m1-12h0m0 3h0m0 4h0m0 1h0m0 1h0m0 1h0m0 2h0m0 3h0m0 1h0m1-15h0m0 1h0m0 5h0m0 1h0m0 1h0m0 1h0m0 1h0m0 1h0m0 2h0m1-8h0m0 4h0m0 1h0m0 1h0m0 1h0m0 2h0m0 2h0m0 2h0m1-15h0m0 2h0m0 2h0m0 1h0m0 2h0m0 1h0m0 2h0m0 1h0m1-18h0m0 1h0m0 1h0m0 4h0m0 2h0m0 1h0m0 1h0m0 1h0m0 1h0m0 4h0m0 3h0m1-16h0m0 1h0m0 1h0m0 2h0m0 1h0m0 3h0m0 1h0m0 1h0m0 4h0m0 1h0m1-15h0m0 4h0m0 1h0m0 2h0m0 1h0m0 1h0m0 1h0m0 3h0m1-12h0m0 3h0m0 1h0m0 1h0m0 1h0m0 1h0m0 1h0m0 1h0m0 3h0m1-16h0m0 1h0m0 3h0m0 3h0m0 3h0m1-11h0m0 2h0m0 1h0m0 1h0m0 1h0m1-4h0m0 4h0m0 1h0m0 4h0m0 3h0m0 1h0m0 1h0m0 1h0m0 3h0m0 3h0m1-18h0m0 3h0m0 5h0m0 1h0m0 1h0m0 1h0m0 1h0m0 1h0m0 1h0m0 1h0m0 3h0m1-12h0m0 1h0m0 1h0m0 2h0m0 1h0m0 1h0m0 2h0m0 2h0m0 1h0m1-14h0m0 2h0m0 3h0m0 3h0m0 2h0m0 2h0m0 1h0m0 1h0m0 1h0m0 1h0m1-20h0m0 1h0m0 1h0m0 1h0m0 1h0m0 3h0m0 1h0m0 2h0m0 7h0m1-8h0m0 3h0m0 1h0m0 1h0m0 1h0m0 1h0m0 1h0m0 1h0m0 1h0m0 1h0m1-18h0m0 2h0m0 1h0m0 1h0m0 7h0m0 1h0m0 2h0m0 2h0m1-17h0m0 1h0m0 2h0m0 2h0m0 2h0m0 1h0m0 1h0m0 3h0m1-5h0m0 2h0m0 2h0m0 1h0m0 1h0m0 2h0m0 1h0m0 1h0m0 1h0m1-11h0m0 2h0m0 1h0m0 1h0m0 1h0m0 1h0m0 4h0m1-19h0m0 4h0m0 4h0m0 1h0m0 1h0m0 3h0m0 1h0m0 1h0m0 3h0m1-20h0m0 1h0m0 1h0m0 1h0m0 1h0m0 4h0m0 7h0m1-15h0m0 2h0m0 1h0m0 2h0m0 2h0m1-5h0m0 1h0m0 1h0m0 2h0m0 1h0m0 1h0m0 2h0m1-9h0m0 1h0m0 2h0m0 1h0m0 1h0m0 4h0m0 1h0m0 1h0m1-5h0m0 1h0m0 3h0m0 2h0m0 3h0m0 1h0m0 3h0m0 1h0m1-14h0m0 2h0m0 1h0m0 1h0m0 2h0m0 1h0m0 3h0m0 1h0m1-11h0m0 2h0m0 4h0m0 1h0m0 1h0m0 3h0m0 1h0m0 1h0m0 2h0m0 1h0m1-2h0m0 2h0m1-7h0m0 1h0m0 1h0m0 1h0m0 2h0m0 1h0m1-12h0m0 3h0m0 1h0m0 1h0m0 1h0m0 1h0m0 1h0m1-12h0m0 1h0m0 3h0m0 3h0m0 2h0m0 3h0m0 1h0m0 1h0m0 1h0m0 1h0m0 1h0m1-18h0m0 4h0m0 1h0m0 1h0m0 1h0m0 1h0m0 1h0m1-4h0m0 1h0m0 1h0m0 2h0m0 1h0m0 1h0m0 1h0m0 2h0m1-13h0m0 1h0m0 2h0m0 1h0m0 3h0m0 2h0m0 1h0m0 3h0m0 1h0m1-10h0m0 2h0m0 4h0m0 4h0m0 2h0m0 1h0m2-2h0m1-6h0m0 3h0m0 2h0m0 1h0m0 1h0m0 1h0m0 1h0m1-19h0m0 2h0m0 2h0m0 4h0m0 1h0m0 1h0m0 1h0m0 1h0m0 1h0m1-13h0m0 6h0m0 1h0m0 2h0m0 1h0m0 1h0m0 1h0m0 1h0m0 2h0m1-20h0m0 3h0m0 2h0m0 1h0m0 2h0m0 1h0m0 1h0m0 2h0m0 2h0m0 1h0m0 1h0m1-7h0m0 4h0m0 1h0m0 1h0m0 2h0m0 2h0m0 1h0m1-7h0m0 1h0m0 1h0m0 1h0m0 1h0m0 3h0m0 1h0m0 1h0m0 2h0m1-9h0m0 2h0m0 1h0m0 1h0m0 1h0m0 1h0m0 1h0m0 1h0m1-15h0m0 1h0m0 3h0m0 4h0m0 1h0m0 1h0m0 2h0m0 1h0m1-10h0m0 1h0m0 2h0m0 1h0m0 1h0m0 1h0m0 1h0m0 1h0m1-13h0m0 5h0m0 1h0m0 1h0m0 1h0m0 2h0m0 1h0m1-16h0m0 3h0m0 2h0m0 2h0m0 1h0m0 2h0m0 1h0m0 1h0m0 1h0m1-13h0m0 2h0m0 2h0m0 1h0m0 1h0m0 2h0m0 1h0m0 3h0m1-7h0m0 1h0m0 1h0m0 2h0m0 1h0m0 1h0m0 1h0m0 3h0m0 3h0m1-6h0m0 7h0m0 1h0m0 2h0m1-8h0m0 1h0m0 2h0m0 2h0m0 1h0m0 2h0m1-17h0m0 4h0m0 6h0m0 2h0m0 1h0m0 2h0m0 1h0m1-12h0m0 2h0m0 1h0m0 1h0m0 1h0m0 2h0m0 1h0m0 1h0m1-15h0m0 2h0m0 4h0m0 1h0m0 1h0m0 1h0m0 1h0m0 1h0m0 1h0m0 3h0m0 1h0m1-17h0m0 4h0m0 1h0m0 1h0m0 1h0m0 1h0m1-6h0m0 4h0m0 2h0m0 1h0m0 1h0m0 1h0m0 1h0m0 1h0m0 1h0m0 2h0m1-9h0m0 2h0m0 1h0m0 1h0m0 1h0m0 1h0m0 1h0m0 2h0m0 1h0m0 1h0m1-15h0m0 3h0m0 1h0m0 1h0m0 1h0m0 2h0m0 3h0m0 1h0m0 1h0m1-16h0m0 1h0m0 1h0m0 1h0m0 1h0m0 1h0m0 1h0m0 1h0m0 1h0m0 1h0m0 1h0m1-11h0m0 2h0m0 2h0m0 3h0m0 1h0m0 1h0m0 1h0m0 1h0m1-8h0m0 2h0m0 1h0m0 1h0m0 1h0m0 1h0m0 1h0m0 1h0m0 1h0m0 1h0m1-9h0m0 1h0m0 1h0m0 1h0m0 2h0m0 2h0m0 1h0m0 2h0m0 1h0m1-6h0m0 1h0m0 1h0m0 2h0m0 1h0m0 2h0m0 1h0m0 1h0m0 2h0m1-4h0m0 3h0m0 1h0m0 1h0m0 1h0m1-18h0m0 4h0m0 1h0m0 4h0m0 2h0m0 1h0m1-17h0m0 5h0m0 1h0m0 1h0m0 1h0m0 1h0m0 2h0m1-8h0m0 1h0m0 1h0m0 1h0m0 1h0m0 1h0m0 1h0m0 1h0m0 2h0m1-7h0m0 3h0m0 2h0m0 1h0m0 2h0m0 1h0m0 1h0m1-9h0m0 1h0m0 1h0m0 1h0m0 1h0m0 1h0m0 1h0m0 1h0m0 1h0m1-15h0m0 2h0m0 2h0m0 1h0m0 1h0m0 1h0m0 2h0m0 3h0m0 1h0m1-9h0m0 1h0m0 1h0m0 1h0m0 1h0m0 1h0m0 1h0m0 3h0m1-13h0m0 1h0m0 3h0m0 1h0m0 1h0m0 1h0m0 1h0m0 1h0m0 1h0m0 4h0m1-14h0m0 2h0m0 1h0m0 1h0m0 1h0m0 1h0m0 1h0m0 1h0m0 2h0m0 5h0m1-15h0m0 1h0m0 2h0m0 2h0m0 3h0m0 1h0m0 1h0m0 1h0m0 1h0m1-11h0m0 1h0m0 2h0m0 3h0m0 5h0m0 1h0m0 5h0m0 2h0m0 1h0m1-19h0m0 3h0m0 3h0m0 1h0m0 1h0m0 1h0m0 1h0m1-8h0m0 2h0m0 2h0m0 1h0m0 2h0m0 1h0m0 1h0m0 2h0m0 2h0m0 2h0m1-15h0m0 2h0m0 1h0m0 2h0m0 1h0m0 1h0m0 1h0m0 1h0m0 3h0m0 4h0m1-20h0m0 2h0m0 4h0m0 3h0m0 4h0m0 2h0m0 1h0m0 2h0m1-15h0m0 4h0m0 1h0m0 3h0m0 2h0m0 1h0m0 2h0m1-7h0m0 2h0m0 1h0m0 2h0m0 4h0m0 1h0m0 2h0m0 1h0m0 2h0m1-19h0m0 6h0m0 6h0m0 2h0m0 1h0m0 2h0m0 1h0m0 1h0m1-16h0m0 2h0m0 1h0m0 1h0m0 1h0m0 3h0m0 1h0m0 1h0m1-17h0m0 1h0m0 1h0m0 1h0m0 2h0m0 1h0m0 2h0m0 2h0m0 1h0m1-11h0m0 1h0m0 1h0m0 4h0m0 1h0m0 2h0m0 2h0m0 1h0m0 4h0m0 2h0m1 2h0m0 2h0m1-13h0m0 2h0m0 2h0m0 3h0m0 2h0m0 2h0m0 1h0m1-16h0m0 1h0m0 1h0m0 1h0m0 1h0m0 1h0m0 1h0m0 1h0m1-4h0m0 1h0m0 5h0m0 2h0m0 1h0m0 1h0m0 3h0m0 1h0m1-6h0m0 1h0m0 1h0m0 1h0m0 1h0m0 1h0m1-9h0m0 2h0m0 1h0m0 1h0m0 1h0m0 1h0m1-12h0m0 2h0m0 1h0m0 1h0m0 1h0m0 1h0m0 3h0m0 3h0m0 2h0m1-19h0m0 4h0m0 1h0m0 2h0m0 1h0m0 1h0m0 2h0m0 3h0m0 1h0m0 1h0m0 1h0m1-13h0m0 1h0m0 3h0m0 1h0m0 3h0m0 3h0m0 1h0m0 1h0m0 5h0m1-16h0m0 2h0m0 1h0m0 1h0m0 3h0m0 1h0m0 1h0m0 1h0m0 1h0m0 3h0m1-12h0m0 1h0m0 1h0m0 1h0m0 2h0m0 2h0m0 4h0m1-16h0m0 3h0m0 2h0m0 1h0m0 2h0m0 1h0m1-3h0m0 4h0m0 1h0m0 1h0m0 2h0m0 2h0m1-15h0m0 4h0m0 1h0m0 1h0m0 1h0m0 2h0m0 1h0m0 5h0m0 1h0m1-14h0m0 1h0m0 4h0m0 1h0m0 4h0m0 2h0m0 1h0m1-6h0m0 1h0m0 1h0m0 1h0m0 1h0m0 3h0m0 1h0m1-11h0m0 4h0m0 1h0m0 2h0m0 1h0m0 1h0m0 1h0m1-12h0m0 1h0m0 2h0m0 1h0m0 3h0m0 2h0m1-10h0m0 2h0m0 1h0m0 1h0m0 1h0m0 1h0m0 3h0m0 3h0m1-11h0m0 1h0m0 2h0m0 1h0m0 1h0m0 2h0m0 1h0m1-12h0m0 3h0m0 1h0m0 1h0m0 1h0m0 1h0m0 1h0m0 4h0m1-9h0m0 1h0m0 2h0m0 2h0m0 1h0m0 1h0m0 5h0m1-20h0m0 3h0m0 1h0m0 1h0m0 4h0m0 1h0m0 1h0m0 1h0m0 1h0m1-2h0m0 1h0m0 1h0m0 1h0m0 1h0m0 1h0m0 1h0m0 3h0m1-20h0m0 4h0m0 1h0m0 1h0m0 3h0m0 5h0m0 1h0m0 6h0m1-22h0m0 1h0m0 1h0m0 2h0m0 3h0m0 1h0m1-6h0m0 2h0m0 1h0m0 1h0m0 1h0m0 1h0m0 1h0m0 2h0m1-7h0m0 1h0m0 1h0m0 2h0m0 1h0m0 3h0m0 3h0m1-13h0m0 2h0m0 3h0m0 1h0m0 3h0m0 1h0m0 1h0m0 1h0m1-7h0m0 2h0m0 1h0m0 1h0m0 1h0m0 1h0m0 1h0m1-1h0m0 1h0m0 1h0m0 1h0m0 1h0m0 4h0m1-21h0m0 3h0m0 1h0m0 1h0m0 5h0m0 1h0m0 1h0m0 2h0m0 3h0m0 1h0m0 2h0m1-19h0m0 1h0m0 2h0m0 1h0m0 1h0m0 2h0m0 1h0m1-9h0m0 1h0m0 1h0m0 2h0m0 1h0m0 2h0m0 1h0m0 2h0m0 1h0m1-6h0m0 1h0m0 1h0m0 1h0m0 3h0m1-10h0m0 2h0m0 1h0m0 2h0m0 2h0m0 2h0m0 1h0m0 3h0m1-11h0m0 1h0m0 1h0m0 2h0m0 2h0m0 1h0m0 1h0m0 1h0m1-10h0m0 1h0m0 7h0m0 1h0m0 2h0m0 1h0m0 3h0m0 4h0m1-12h0m0 1h0m0 4h0m0 1h0m0 2h0m0 1h0m0 2h0m0 2h0m0 1h0m1-7h0m0 1h0m0 1h0m0 1h0m0 1h0m0 1h0m0 1h0m1-12h0m0 1h0m0 5h0m0 1h0m0 2h0m0 1h0m0 1h0m0 2h0m1-13h0m0 2h0m0 1h0m0 1h0m0 1h0m0 1h0m0 1h0m0 1h0m0 2h0m1-17h0m0 3h0m0 3h0m0 1h0m0 1h0m0 1h0m0 1h0m1-7h0m0 2h0m0 1h0m0 2h0m0 1h0m0 1h0m1-11h0m0 3h0m0 1h0m0 1h0m0 1h0m0 2h0m0 2h0m1-10h0m0 2h0m0 1h0m0 1h0m0 1h0m0 3h0m0 1h0m0 1h0m0 3h0m0 1h0m0 1h0m1-15h0m0 1h0m0 1h0m0 3h0m1-7h0m0 3h0m0 1h0m0 2h0m1-6h0m0 2h0m0 1h0m0 2h0m0 1h0m0 1h0m0 1h0m0 1h0m0 4h0m1-3h0m0 1h0m0 2h0m0 1h0m0 1h0m0 1h0m0 1h0m0 1h0m0 3h0m1-10h0m0 5h0m0 2h0m0 1h0m0 1h0m0 1h0m0 1h0m0 1h0m1-18h0m0 1h0m0 3h0m0 1h0m0 6h0m0 1h0m0 1h0m0 1h0m0 2h0m1-17h0m0 1h0m0 1h0m0 2h0m0 1h0m0 1h0m0 3h0m0 1h0m0 1h0m1-15h0m0 1h0m0 1h0m0 3h0m0 1h0m1-4h0m0 3h0m0 1h0m0 3h0m0 1h0m0 1h0m0 2h0m1-11h0m0 4h0m0 1h0m0 1h0m0 1h0m0 3h0m0 1h0m0 1h0m0 1h0m1-3h0m0 5h0m0 3h0m0 1h0m0 4h0m1-14h0m0 3h0m0 1h0m0 1h0m0 1h0m0 1h0m0 1h0m0 2h0m0 1h0m1-11h0m0 6h0m0 2h0m0 2h0m0 1h0m1-13h0m0 2h0m0 3h0m0 3h0m0 3h0m0 2h0m0 1h0m0 1h0m0 1h0m1-9h0m0 1h0m0 2h0m0 1h0m0 1h0m0 1h0m0 1h0m1-12h0m0 3h0m0 1h0m0 1h0m0 2h0m0 1h0m1-12h0m0 2h0m0 2h0m0 1h0m0 2h0m0 1h0m0 3h0m0 1h0m1-17h0m0 1h0m0 1h0m0 3h0m0 1h0m0 1h0m0 1h0m0 2h0m0 3h0m1 0h0m0 3h0m0 1h0m0 2h0m0 1h0m1-8h0m0 1h0m0 2h0m0 1h0m0 2h0m0 2h0m1-8h0m0 5h0m0 1h0m0 1h0m0 2h0m1-11h0m0 1h0m0 3h0m0 2h0m0 2h0m0 2h0m0 1h0m1-14h0m0 3h0m0 2h0m0 1h0m0 1h0m0 1h0m0 1h0m0 3h0m0 2h0m1-19h0m0 1h0m0 2h0m0 1h0m0 1h0m0 2h0m0 3h0m1-10h0m0 2h0m0 1h0m0 1h0m0 1h0m0 1h0m0 2h0m0 1h0m0 1h0m0 1h0m1-13h0m0 2h0m0 3h0m0 1h0m0 4h0m0 2h0m0 1h0m0 3h0m0 3h0m0 1h0m1-7h0m0 3h0m0 1h0m0 4h0m1-12h0m0 1h0m0 3h0m0 2h0m0 1h0m0 1h0m0 1h0m0 1h0m0 1h0m1-14h0m0 1h0m0 2h0m0 1h0m0 1h0m0 1h0m0 2h0m0 2h0m0 4h0m1-19h0m0 2h0m0 3h0m0 1h0m0 4h0m0 3h0m0 3h0m0 3h0m1-22h0m0 3h0m0 1h0m0 1h0m0 1h0m0 3h0m0 1h0m0 1h0m0 1h0m1-10h0m0 2h0m0 5h0m0 1h0m0 5h0m0 1h0m0 1h0m1-12h0m0 7h0m0 5h0m0 1h0m0 1h0m0 2h0m1-10h0m0 3h0m0 1h0m0 1h0m0 1h0m0 2h0m0 1h0m0 2h0m0 3h0m1-3h0m0 1h0m1-4h0m0 4h0m1-7h0m0 1h0m0 2h0m0 2h0m0 1h0m0 1h0m1-18h0m0 6h0m0 1h0m0 3h0m0 1h0m0 1h0m0 1h0m0 4h0m0 2h0m1-23h0m0 1h0m0 3h0m0 1h0m0 2h0m0 1h0m0 3h0m0 5h0m1-12h0m0 3h0m0 1h0m0 1h0m0 1h0m0 1h0m0 1h0m0 3h0m1-10h0m0 1h0m0 1h0m0 1h0m0 1h0m0 1h0m0 2h0m0 1h0m1-8h0m0 1h0m0 1h0m0 1h0m0 1h0m0 1h0m0 1h0m0 3h0m1-12h0m0 2h0m0 1h0m0 1h0m0 1h0m0 1h0m0 2h0m0 2h0m0 1h0m1-12h0m0 2h0m0 1h0m0 1h0m0 2h0m0 3h0m0 4h0m1-14h0m0 3h0m0 2h0m0 1h0m0 2h0m0 3h0m1-10h0m0 3h0m0 1h0m0 1h0m0 2h0m0 3h0m0 3h0m0 2h0m1-4h0m0 1h0m0 3h0m0 1h0m0 2h0m0 1h0m0 2h0m1-15h0m0 1h0m0 1h0m0 1h0m0 3h0m0 1h0m0 1h0m0 1h0m0 2h0m0 1h0m1-13h0m0 1h0m0 1h0m0 1h0m0 1h0m0 1h0m0 1h0m0 1h0m1-6h0m0 2h0m0 1h0m0 1h0m0 1h0m0 1h0m0 1h0m1-14h0m0 4h0m0 1h0m0 1h0m0 1h0m0 1h0m0 1h0m0 1h0m1-7h0m0 2h0m0 1h0m0 2h0m0 1h0m0 2h0m1-11h0m0 2h0m0 1h0m0 2h0m0 1h0m0 2h0m0 3h0m0 3h0m0 5h0m0 1h0m1-21h0m0 1h0m0 2h0m0 1h0m0 1h0m0 5h0m0 2h0m0 2h0m0 3h0m1-10h0m0 2h0m0 1h0m0 1h0m0 1h0m0 1h0m0 3h0m1-14h0m0 7h0m0 1h0m0 2h0m0 2h0m0 2h0m1-16h0m0 2h0m0 1h0m0 2h0m0 1h0m0 1h0m0 2h0m0 1h0m0 1h0m0 2h0m1-11h0m0 3h0m0 1h0m0 3h0m0 3h0m0 2h0m0 2h0m0 1h0m0 1h0m1-15h0m0 6h0m0 1h0m0 1h0m0 1h0m0 3h0m0 1h0m0 1h0m0 1h0m0 1h0m0 1h0m1-16h0m0 2h0m0 3h0m0 1h0m0 1h0m0 2h0m0 1h0m0 1h0m0 1h0m0 2h0m0 4h0m1-16h0m0 2h0m0 1h0m0 1h0m0 1h0m0 2h0m0 2h0m1-13h0m0 2h0m0 2h0m0 2h0m0 1h0m0 1h0m0 1h0m1-12h0m0 5h0m0 4h0m0 2h0m0 3h0m0 4h0m0 1h0m1-16h0m0 9h0m0 1h0m0 1h0m0 1h0m0 2h0m0 1h0m0 1h0m0 1h0m0 1h0m0 1h0m1-19h0m0 2h0m0 3h0m0 1h0m0 1h0m0 2h0m0 1h0m0 1h0m0 2h0m0 1h0m1-10h0m0 2h0m0 1h0m0 1h0m0 1h0m0 1h0m0 1h0m0 1h0m1-9h0m0 5h0m0 2h0m0 1h0m0 1h0m0 1h0m0 5h0m0 1h0m1-17h0m0 5h0m0 1h0m0 1h0m0 2h0m0 1h0m0 2h0m0 1h0m0 1h0m0 2h0m1-7h0m0 1h0m0 2h0m0 1h0m0 1h0m0 2h0m1-14h0m0 1h0m0 3h0m0 3h0m0 2h0m0 2h0m0 2h0m1-6h0m0 2h0m0 1h0m0 1h0m0 1h0m0 2h0m0 1h0m0 1h0m1-8h0m0 1h0m0 1h0m0 1h0m0 1h0m0 2h0m0 1h0m1-20h0m0 2h0m0 2h0m0 1h0m0 1h0m0 1h0m0 5h0m1-13h0m0 1h0m0 1h0m0 1h0m0 1h0m0 2h0m0 2h0m1-8h0m0 5h0m0 3h0m0 1h0m0 3h0m0 1h0m0 1h0m0 1h0m0 1h0m0 1h0m0 1h0m1-14h0m0 1h0m0 2h0m0 3h0m0 1h0m0 2h0m0 2h0m0 1h0m0 1h0m0 1h0m1-14h0m0 2h0m0 1h0m0 1h0m0 1h0m0 1h0m0 1h0m0 3h0m0 1h0m1-10h0m0 2h0m0 2h0m0 1h0m0 2h0m0 1h0m0 1h0m0 1h0m0 5h0m1-11h0m0 1h0m0 6h0m0 1h0m0 1h0m0 1h0m0 2h0m0 1h0m1-14h0m0 2h0m0 2h0m0 1h0m0 1h0m0 1h0m0 1h0m0 1h0m0 2h0m1-8h0m0 1h0m0 2h0m0 1h0m0 1h0m0 1h0m1-13h0m0 4h0m0 2h0m0 1h0m0 3h0m0 1h0m0 1h0m0 4h0m1-17h0m0 1h0m0 4h0m0 1h0m0 1h0m0 1h0m0 1h0m0 4h0m1-15h0m0 3h0m0 1h0m0 2h0m0 1h0m0 1h0m0 1h0m1-9h0m0 2h0m0 2h0m0 2h0m0 1h0m0 3h0m0 1h0m1-2h0m0 3h0m0 1h0m0 1h0m0 1h0m0 1h0m0 1h0m0 1h0m1-9h0m0 3h0m0 4h0m0 3h0m0 2h0m0 1h0m0 2h0m1-9h0m0 2h0m0 1h0m0 1h0m0 2h0m0 1h0m1-13h0m0 3h0m0 1h0m0 1h0m0 2h0m0 1h0m0 1h0m0 1h0m0 1h0m0 1h0m1-7h0m0 2h0m0 1h0m0 1h0m0 2h0m0 1h0m1-13h0m0 2h0m0 1h0m0 1h0m0 3h0m0 2h0m0 1h0m0 1h0m0 1h0m0 1h0m1-20h0m0 5h0m0 1h0m0 1h0m0 1h0m0 1h0m0 3h0m0 2h0m0 2h0m0 5h0m1-13h0m0 2h0m0 1h0m0 1h0m0 1h0m0 5h0m0 1h0m0 2h0m1-12h0m0 3h0m0 1h0m0 1h0m0 1h0m0 1h0m0 1h0m0 1h0m0 1h0m1-12h0m0 2h0m0 1h0m0 1h0m0 1h0m0 4h0m0 1h0m0 1h0m0 2h0m1-16h0m0 3h0m0 1h0m0 1h0m0 1h0m0 1h0m0 3h0m1-9h0m0 1h0m0 1h0m0 1h0m0 1h0m0 1h0m1-10h0m0 3h0m0 1h0m0 3h0m0 1h0m0 1h0m0 2h0m0 2h0m0 1h0m1-15h0m0 7h0m0 4h0m0 3h0m0 2h0m0 1h0m1-9h0m0 2h0m0 3h0m0 1h0m0 1h0m0 1h0m0 2h0m0 3h0m0 1h0m1-16h0m0 1h0m0 3h0m0 2h0m0 2h0m0 1h0m0 1h0m0 1h0m0 1h0m1-13h0m0 2h0m0 2h0m0 2h0m0 1h0m0 2h0m0 2h0m0 1h0m0 1h0m1-12h0m0 1h0m0 2h0m0 2h0m0 1h0m0 1h0m0 1h0m0 1h0m0 1h0m1-9h0m0 2h0m0 1h0m0 1h0m0 1h0m0 2h0m0 1h0m1-9h0m0 2h0m0 2h0m0 2h0m0 2h0m0 1h0m0 3h0m1-10h0m0 1h0m0 1h0m0 2h0m0 1h0m0 1h0m0 1h0m0 1h0m0 2h0m1-12h0m0 1h0m0 1h0m0 1h0m0 1h0m0 2h0m0 1h0m0 1h0m1-8h0m0 1h0m0 1h0m0 1h0m0 1h0m0 1h0m0 1h0m0 1h0m0 1h0m0 2h0m0 1h0m1-12h0m0 2h0m0 1h0m0 2h0m0 1h0m0 1h0m0 1h0m0 1h0m0 1h0m0 3h0m1-13h0m0 2h0m0 1h0m0 1h0m0 1h0m0 1h0m0 1h0m0 1h0m0 4h0m1-17h0m0 2h0m0 1h0m0 3h0m0 4h0m0 2h0m0 2h0m0 1h0m0 3h0m0 4h0m1-23h0m0 2h0m0 1h0m0 1h0m0 4h0m0 8h0m0 2h0m1-17h0m0 2h0m0 1h0m0 1h0m0 1h0m0 2h0m0 1h0m0 2h0m1-5h0m0 1h0m0 1h0m0 1h0m0 1h0m0 1h0m0 1h0m0 1h0m1-9h0m0 3h0m0 1h0m0 1h0m0 1h0m0 1h0m0 3h0m0 5h0m0 1h0m1-16h0m0 1h0m0 2h0m0 2h0m0 1h0m0 2h0m0 1h0m0 1h0m0 2h0m0 1h0m0 2h0m1-18h0m0 1h0m0 1h0m0 1h0m0 1h0m0 2h0m0 1h0m0 4h0m0 3h0m0 3h0m1-17h0m0 2h0m0 1h0m0 1h0m0 1h0m0 1h0m0 4h0m1-10h0m0 4h0m0 3h0m0 1h0m0 1h0m0 1h0m0 1h0m0 1h0m0 1h0m0 4h0m1-16h0m0 3h0m0 1h0m0 1h0m0 1h0m0 2h0m0 1h0m0 1h0m0 3h0m0 1h0m0 2h0m0 3h0m1-21h0m0 2h0m0 3h0m0 1h0m0 1h0m0 1h0m0 1h0m0 2h0m0 2h0m0 1h0m0 1h0m0 3h0m1-8h0m0 1h0m0 2h0m0 2h0m0 1h0m0 2h0m0 2h0m0 2h0m1-16h0m0 4h0m0 1h0m0 1h0m0 3h0m0 2h0m0 1h0m0 2h0m1-19h0m0 2h0m0 1h0m0 1h0m0 3h0m0 1h0m0 1h0m1-10h0m0 1h0m0 1h0m0 1h0m0 1h0m1-3h0m0 1h0m0 1h0m0 1h0m0 1h0m0 3h0m1-6h0m0 1h0m0 1h0m0 1h0m0 2h0m0 1h0m0 1h0m0 1h0m1-3h0m0 1h0m0 3h0m0 1h0m0 1h0m0 1h0m0 1h0m0 1h0m0 4h0m0 1h0m1-11h0m0 1h0m0 2h0m0 2h0m0 1h0m0 1h0m1-10h0m0 1h0m0 2h0m0 1h0m0 2h0m0 1h0m0 1h0m0 4h0m1-13h0m0 2h0m0 1h0m0 1h0m0 1h0m0 1h0m0 2h0m0 3h0m1-14h0m0 1h0m0 4h0m0 1h0m0 1h0m0 2h0m0 3h0m0 1h0m0 3h0m1-18h0m0 2h0m0 5h0m0 2h0m0 1h0m0 3h0m0 2h0m0 3h0m0 1h0m1-11h0m0 1h0m0 2h0m0 2h0m0 1h0m0 1h0m0 2h0m0 1h0m1-16h0m0 1h0m0 1h0m0 2h0m0 1h0m0 1h0m0 1h0m0 1h0m0 1h0m0 1h0m1-9h0m0 1h0m0 1h0m0 1h0m0 1h0m0 1h0m0 1h0m0 2h0m1-9h0m0 1h0m0 2h0m0 1h0m0 2h0m0 1h0m0 2h0m0 2h0m0 1h0m1-15h0m0 1h0m0 1h0m0 2h0m0 2h0m1-6h0m0 1h0m0 2h0m0 1h0m1-2h0m0 1h0m0 1h0m0 2h0m0 1h0m0 1h0m0 1h0m1-8h0m0 3h0m0 1h0m0 1h0m0 1h0m0 1h0m0 1h0m0 1h0m0 1h0m1-2h0m0 1h0m0 1h0m0 1h0m0 3h0m0 2h0m0 1h0m1-6h0m0 1h0m0 2h0m0 1h0m0 1h0m0 1h0m0 1h0m0 1h0m0 1h0m1-4h0m0 1h0m0 1h0m0 1h0"/></g>
<g clip-path="url(#c0)"><path transform="translate(0.5 0.5)" fill="none" stroke="#ffa500" stroke-width="3.6" stroke-linecap="round" d="M177 63h0m4-1h0m3 1h0m38 0h0m12-2h0m13 31h0m8-29h0m26 36h0m1-8h0m0 4h0m1 124h0m1-115h0m60-46h0m0 5h0m1-4h0m23 77h0m2-76h0m1 1h0m0 2h0m76-1h0m4 123h0m11-124h0m7 29h0m55-28h0m0 1h0m10 214h0m10-188h0m14-28h0m16 3h0m36 35h0m1-37h0m5 45h0m2 70h0m1-88h0m0 165h0m9-78h0m5-25h0m3-88h0m11 234h0m8-207h0m16-1h0m58-28h0m0 2h0m20 69h0m3-68h0m29-2h0m1 0h0m8-1h0m6 0h0m0 1h0m1-2h0m27 2h0m29 38h0m50 82h0m10-71h0m9-22h0m0 2h0m17-30h0m0 68h0m26-36h0m8-3h0m37-28h0m1-3h0m0 1h0m0 3h0m5 149h0m19 10h0m16 0h0m12-161h0m1 2h0m19-1h0m26 29h0m28 14h0m43 65h0m3-78h0m5-2h0m0 1h0m9-31h0m0 1h0m0 2h0m1 39h0m2-38h0m16-4h0m0 1h0m1 1h0m27 1h0m7-2h0m0 2h0m15 139h0m4-140h0m11 27h0m13-25h0m7-1h0m0 20h0"/></g>
<line x1="105.5" y1="119.9" x2="1360.9" y2="119.9" stroke="#008000" stroke-width="2.08"/>
<g clip-path="url(#c1)"><path transform="translate(0.5 0.5)" fill="none" stroke="#000" stroke-width="3.6" stroke-linecap="round" d="M162 502h0m0 11h0m0 10h0m0 3h0m0 6h0m0 11h0m1-57h0m0 1h0m0 5h0m0 3h0m0 1h0m0 10h0m0 4h0m0 1h0m0 7h0m0 1h0m0 4h0m0 3h0m0 3h0m1-54h0m0 12h0m0 3h0m0 1h0m0 5h0m0 4h0m0 6h0m0 2h0m0 4h0m0 7h0m0 19h0m1-57h0m0 5h0m0 3h0m0 1h0m0 2h0m0 8h0m0 9h0m0 9h0m0 3h0m0 7h0m0 2h0m1-36h0m0 8h0m0 1h0m0 16h0m0 3h0m0 2h0m0 11h0m0 6h0m0 10h0m0 9h0m0 3h0m1-98h0m0 6h0m0 4h0m0 3h0m0 5h0m0 3h0m0 7h0m0 5h0m0 13h0m0 1h0m0 1h0m1-29h0m0 1h0m0 3h0m0 1h0m0 2h0m0 13h0m0 2h0m0 1h0m0 20h0m0 13h0m1-54h0m0 4h0m0 5h0m0 5h0m0 4h0m0 2h0m0 5h0m0 13h0m0 39h0m1-82h0m0 10h0m0 13h0m0 19h0m0 22h0m0 13h0m0 1h0m0 3h0m0 2h0m0 12h0m0 8h0m1-53h0m0 10h0m0 6h0m0 1h0m0 1h0m0 3h0m0 5h0m0 1h0m0 2h0m0 2h0m1-69h0m0 9h0m0 8h0m0 6h0m0 3h0m0 6h0m0 14h0m0 2h0m0 8h0m0 1h0m0 1h0m1-59h0m0 5h0m0 4h0m0 3h0m0 10h0m0 13h0m0 2h0m0 3h0m0 4h0m0 2h0m0 1h0m0 3h0m0 5h0m1-78h0m0 5h0m0 1h0m0 1h0m0 10h0m0 10h0m0 1h0m0 5h0m0 2h0m0 17h0m0 12h0m0 15h0m1-50h0m0 14h0m0 1h0m0 5h0m0 2h0m0 8h0m0 2h0m0 11h0m0 2h0m0 3h0m0 1h0m0 20h0m1-83h0m0 9h0m0 12h0m0 2h0m0 7h0m0 15h0m0 3h0m0 2h0m0 1h0m0 4h0m0 4h0m0 6h0m0 6h0m1-46h0m0 10h0m0 1h0m0 2h0m0 13h0m0 1h0m0 1h0m0 6h0m0 10h0m0 6h0m1-27h0m0 6h0m0 12h0m0 2h0m0 15h0m0 4h0m0 3h0m0 2h0m0 6h0m0 3h0m1-50h0m0 12h0m0 13h0m0 1h0m0 3h0m0 5h0m0 4h0m1-22h0m0 8h0m0 7h0m0 5h0m0 5h0m1-64h0m0 4h0m0 13h0m0 7h0m0 1h0m0 4h0m0 5h0m0 13h0m0 2h0m0 1h0m0 3h0m0 1h0m1-61h0m0 7h0m0 2h0m0 3h0m0 4h0m0 2h0m0 7h0m0 3h0m0 7h0m0 1h0m0 12h0m0 4h0m1-71h0m0 6h0m0 2h0m0 1h0m0 1h0m0 2h0m0 10h0m0 3h0m0 5h0m0 6h0m0 2h0m0 1h0m0 8h0m1-32h0m0 2h0m0 8h0m0 1h0m0 2h0m0 1h0m0 1h0m0 3h0m0 10h0m0 1h0m1-54h0m0 8h0m0 9h0m0 13h0m0 8h0m0 5h0m0 1h0m0 3h0m0 10h0m0 5h0m0 20h0m0 6h0m0 3h0m1-46h0m0 37h0m0 4h0m0 6h0m0 6h0m0 9h0m1-63h0m0 29h0m0 16h0m0 1h0m0 5h0m0 5h0m1-51h0m0 3h0m0 7h0m0 4h0m0 6h0m0 6h0m0 1h0m0 1h0m0 2h0m0 1h0m0 6h0m1-75h0m0 2h0m0 5h0m0 25h0m0 9h0m0 8h0m0 3h0m0 1h0m0 6h0m0 7h0m0 2h0m0 8h0m1-100h0m0 7h0m0 13h0m0 3h0m0 1h0m0 3h0m0 14h0m0 4h0m0 10h0m0 1h0m0 2h0m0 12h0m1-66h0m0 8h0m0 13h0m0 6h0m0 10h0m0 3h0m0 14h0m1-36h0m0 1h0m0 31h0m0 8h0m0 13h0m1-68h0m0 2h0m0 2h0m0 8h0m0 5h0m0 13h0m0 5h0m0 2h0m0 1h0m0 11h0m1-42h0m0 5h0m0 4h0m0 7h0m0 2h0m0 3h0m0 3h0m0 4h0m0 4h0m0 4h0m0 3h0m0 6h0m1-42h0m0 9h0m0 10h0m0 10h0m0 13h0m0 9h0m0 1h0m0 3h0m0 3h0m0 6h0m0 7h0m0 1h0m1-76h0m0 27h0m0 9h0m0 3h0m0 2h0m0 6h0m0 3h0m0 1h0m0 8h0m0 4h0m0 14h0m0 17h0m1-65h0m0 33h0m0 4h0m0 4h0m0 3h0m0 3h0m0 4h0m0 6h0m0 3h0m0 2h0m0 16h0m1-124h0m0 11h0m0 27h0m0 6h0m0 1h0m0 4h0m0 10h0m0 4h0m0 5h0m0 6h0m0 18h0m0 1h0m0 6h0m1-49h0m0 8h0m0 6h0m0 1h0m0 17h0m0 7h0m0 2h0m0 2h0m0 5h0m0 5h0m0 1h0m0 4h0m0 1h0m1-32h0m0 3h0m0 3h0m0 4h0m0 4h0m0 5h0m0 3h0m0 4h0m0 3h0m0 4h0m0 3h0m1-86h0m0 3h0m0 32h0m0 15h0m0 5h0m0 4h0m0 7h0m0 6h0m0 4h0m0 1h0m0 2h0m0 7h0m0 7h0m1-63h0m0 13h0m0 3h0m0 7h0m0 2h0m0 6h0m0 6h0m0 7h0m0 3h0m0 8h0m0 4h0m0 4h0m1-94h0m0 7h0m0 5h0m0 2h0m0 4h0m0 3h0m0 14h0m0 3h0m0 5h0m0 1h0m0 10h0m0 7h0m0 11h0m1-97h0m0 34h0m0 4h0m0 3h0m0 6h0m0 4h0m0 3h0m0 1h0m0 3h0m0 12h0m0 4h0m0 18h0m1-84h0m0 21h0m0 2h0m0 25h0m0 3h0m0 1h0m0 11h0m0 17h0m0 2h0m0 2h0m0 1h0m1-99h0m0 10h0m0 7h0m0 22h0m0 6h0m0 8h0m1-51h0m0 3h0m0 5h0m0 9h0m0 3h0m0 9h0m0 6h0m0 15h0m0 4h0m0 3h0m1-42h0m0 20h0m0 18h0m0 14h0m0 6h0m0 1h0m0 6h0m0 2h0m0 1h0m0 10h0m0 8h0m0 18h0m1-54h0m0 23h0m0 8h0m0 2h0m0 1h0m0 2h0m0 3h0m0 7h0m0 3h0m1-40h0m0 6h0m0 4h0m0 1h0m0 1h0m0 6h0m0 4h0m0 3h0m0 5h0m0 5h0m0 6h0m0 1h0m1-85h0m0 20h0m0 4h0m0 5h0m0 2h0m0 11h0m0 2h0m0 1h0m0 11h0m0 3h0m0 18h0m1-84h0m0 16h0m0 1h0m0 17h0m0 5h0m0 10h0m0 9h0m0 4h0m0 5h0m0 6h0m0 1h0m0 5h0m0 3h0m1-47h0m0 1h0m0 3h0m0 4h0m0 4h0m0 5h0m0 4h0m0 5h0m0 4h0m0 1h0m0 3h0m0 18h0m1-68h0m0 12h0m0 1h0m0 9h0m0 11h0m0 1h0m0 7h0m0 2h0m0 5h0m0 4h0m0 7h0m1-52h0m0 5h0m0 12h0m0 5h0m0 1h0m0 5h0m0 2h0m0 2h0m0 3h0m0 5h0m0 8h0m1-93h0m0 1h0m0 2h0m0 16h0m0 4h0m1-19h0m0 6h0m0 16h0m0 2h0m0 19h0m0 6h0m0 24h0m0 5h0m0 17h0m1-77h0m0 17h0m0 3h0m0 2h0m0 6h0m0 6h0m0 3h0m0 2h0m0 1h0m0 6h0m0 1h0m0 5h0m0 17h0m1-26h0m0 3h0m0 6h0m0 2h0m0 14h0m0 1h0m0 2h0m0 4h0m0 6h0m0 20h0m1-32h0m0 6h0m0 3h0m0 4h0m0 1h0m0 2h0m0 1h0m0 3h0m0 4h0m0 6h0m1-49h0m0 11h0m0 13h0m0 3h0m0 6h0m0 2h0m0 4h0m0 3h0m1-54h0m0 1h0m0 1h0m0 2h0m0 11h0m0 2h0m0 10h0m0 3h0m0 6h0m0 5h0m0 8h0m1-64h0m0 3h0m0 5h0m0 3h0m0 1h0m0 3h0m0 2h0m0 4h0m0 1h0m0 6h0m0 8h0m0 5h0m1-56h0m0 12h0m0 27h0m0 5h0m0 2h0m0 9h0m0 5h0m0 3h0m0 2h0m0 6h0m0 8h0m1-110h0m0 6h0m0 1h0m0 1h0m0 3h0m0 5h0m0 1h0m0 1h0m0 8h0m0 2h0m0 9h0m1-25h0m0 1h0m0 10h0m0 9h0m0 1h0m0 2h0m0 3h0m0 2h0m0 7h0m0 16h0m1-56h0m0 9h0m0 4h0m0 6h0m0 2h0m0 1h0m0 2h0m0 8h0m0 4h0m0 3h0m1-20h0m0 6h0m0 3h0m0 3h0m0 2h0m0 1h0m0 5h0m0 5h0m0 2h0m0 4h0m1-6h0m0 13h0m0 8h0m0 1h0m0 6h0m0 1h0m0 8h0m0 2h0m0 3h0m0 7h0m0 3h0m0 5h0m1-41h0m0 12h0m0 3h0m0 1h0m0 1h0m0 1h0m0 3h0m0 4h0m0 2h0m0 6h0m0 19h0m1-68h0m0 2h0m0 14h0m0 4h0m0 6h0m0 4h0m0 9h0m0 2h0m0 6h0m0 3h0m0 1h0m1-34h0m0 3h0m0 8h0m0 1h0m0 1h0m0 4h0m0 1h0m0 2h0m0 1h0m0 1h0m0 1h0m0 5h0m0 2h0m1-15h0m0 9h0m0 5h0m0 1h0m0 1h0m0 2h0m0 1h0m0 2h0m0 4h0m0 4h0m0 7h0m0 1h0m1-71h0m0 14h0m0 6h0m0 1h0m0 1h0m0 1h0m0 1h0m0 2h0m0 5h0m0 3h0m0 2h0m0 21h0m1-54h0m0 8h0m0 12h0m0 2h0m0 1h0m0 5h0m0 7h0m0 1h0m0 1h0m0 2h0m0 4h0m0 3h0m1-64h0m0 14h0m0 1h0m0 10h0m0 5h0m0 19h0m0 1h0m0 7h0m0 3h0m0 1h0m0 7h0m1-15h0m0 12h0m0 9h0m1-106h0m0 7h0m0 4h0m0 2h0m0 3h0m0 2h0m0 20h0m0 17h0m0 4h0m0 11h0m0 4h0m1-63h0m0 8h0m0 3h0m0 1h0m0 2h0m0 5h0m0 16h0m0 1h0m0 2h0m0 23h0m1-77h0m0 4h0m0 8h0m0 1h0m0 4h0m0 10h0m0 1h0m0 16h0m0 3h0m0 8h0m0 19h0m0 8h0m1-77h0m0 38h0m0 11h0m0 4h0m0 2h0m0 3h0m0 4h0m0 4h0m0 7h0m0 3h0m0 5h0m0 1h0m0 6h0m1-48h0m0 12h0m0 1h0m0 7h0m0 3h0m0 5h0m0 5h0m0 2h0m0 1h0m0 7h0m0 2h0m0 3h0m0 1h0m1-61h0m0 19h0m0 1h0m0 3h0m0 6h0m0 9h0m0 6h0m0 5h0m0 1h0m0 5h0m0 10h0m0 8h0m1-64h0m0 16h0m0 1h0m0 1h0m0 1h0m0 4h0m0 2h0m0 5h0m0 1h0m0 4h0m0 5h0m0 14h0m1-71h0m0 3h0m0 25h0m0 3h0m0 9h0m0 1h0m0 7h0m0 1h0m0 8h0m0 3h0m1-65h0m0 24h0m0 4h0m0 3h0m0 9h0m0 6h0m0 1h0m0 9h0m0 4h0m0 1h0m0 8h0m1-42h0m0 1h0m0 15h0m0 9h0m0 3h0m0 2h0m0 3h0m0 5h0m0 4h0m0 1h0m0 6h0m1-61h0m0 7h0m0 9h0m0 3h0m0 4h0m0 1h0m0 1h0m0 7h0m0 3h0m0 10h0m0 2h0m1-64h0m0 13h0m0 3h0m0 2h0m0 3h0m0 25h0m0 39h0m1-99h0m0 2h0m0 4h0m0 6h0m0 6h0m0 5h0m0 2h0m0 2h0m0 3h0m0 18h0m1-40h0m0 2h0m0 9h0m0 7h0m0 3h0m0 2h0m0 1h0m0 6h0m0 2h0m0 1h0m0 1h0m0 1h0m1-21h0m0 6h0m0 6h0m0 6h0m0 2h0m0 4h0m0 5h0m0 9h0m0 5h0m0 4h0m1-36h0m0 1h0m0 2h0m0 1h0m0 19h0m0 1h0m0 3h0m0 1h0m0 5h0m0 2h0m0 1h0m0 5h0m1-42h0m0 17h0m0 3h0m0 1h0m0 3h0m0 6h0m0 3h0m0 9h0m0 17h0m0 3h0m0 18h0m0 2h0m0 1h0m1-55h0m0 14h0m0 16h0m0 1h0m0 7h0m0 3h0m0 1h0m0 8h0m0 6h0m0 6h0m1-79h0m0 4h0m0 5h0m0 3h0m0 2h0m0 4h0m0 1h0m0 1h0m0 4h0m0 4h0m0 2h0m0 14h0m1-31h0m0 2h0m0 4h0m0 6h0m0 1h0m0 2h0m0 1h0m0 2h0m0 6h0m0 1h0m1-38h0m0 5h0m0 6h0m0 2h0m0 1h0m0 1h0m0 6h0m0 2h0m0 2h0m0 4h0m0 9h0m1-56h0m0 6h0m0 20h0m0 24h0m0 4h0m0 11h0m0 12h0m0 2h0m0 1h0m0 6h0m0 3h0m1-62h0m0 23h0m0 19h0m0 5h0m0 12h0m0 2h0m0 3h0m1-82h0m0 17h0m0 4h0m0 12h0m0 2h0m0 10h0m0 3h0m0 11h0m0 2h0m0 3h0m0 5h0m0 5h0m0 3h0m1-72h0m0 3h0m0 2h0m0 1h0m0 1h0m0 1h0m0 2h0m0 4h0m0 6h0m0 4h0m0 5h0m0 7h0m1-42h0m0 6h0m0 3h0m0 13h0m0 2h0m0 3h0m0 2h0m0 3h0m0 4h0m0 3h0m0 4h0m0 2h0m0 12h0m1-39h0m0 9h0m0 1h0m0 3h0m0 1h0m0 14h0m0 1h0m0 1h0m0 2h0m0 1h0m0 7h0m0 4h0m1-65h0m0 3h0m0 4h0m0 22h0m0 3h0m0 12h0m0 3h0m0 1h0m0 8h0m0 2h0m0 13h0m1-95h0m0 4h0m0 12h0m0 26h0m0 18h0m0 2h0m0 29h0m1-57h0m0 1h0m0 6h0m0 7h0m0 3h0m0 4h0m0 1h0m0 2h0m0 6h0m0 5h0m0 3h0m0 17h0m1-69h0m0 14h0m0 2h0m0 2h0m0 1h0m0 6h0m0 1h0m0 7h0m0 3h0m0 2h0m0 1h0m0 9h0m1-49h0m0 1h0m0 17h0m0 8h0m0 3h0m0 4h0m0 1h0m0 4h0m0 6h0m0 14h0m0 7h0m0 25h0m1-54h0m0 26h0m0 20h0m0 5h0m1-42h0m0 15h0m0 18h0m0 3h0m0 2h0m0 14h0m1-65h0m0 5h0m0 1h0m0 9h0m0 1h0m0 1h0m0 2h0m0 1h0m0 11h0m0 13h0m0 1h0m0 16h0m1-49h0m0 8h0m0 5h0m0 4h0m0 1h0m0 1h0m0 3h0m0 1h0m0 4h0m0 1h0m0 3h0m1-77h0m0 14h0m0 9h0m0 2h0m0 15h0m0 18h0m0 2h0m0 3h0m0 4h0m0 4h0m0 15h0m0 12h0m1-115h0m0 4h0m1-6h0m0 19h0m0 13h0m0 7h0m0 10h0m0 1h0m0 2h0m0 12h0m0 10h0m0 2h0m0 6h0m0 5h0m1-59h0m0 5h0m0 4h0m0 16h0m0 10h0m0 4h0m0 2h0m0 10h0m0 3h0m0 8h0m0 20h0m1-55h0m0 4h0m0 2h0m0 8h0m0 1h0m0 1h0m0 1h0m0 1h0m0 1h0m0 2h0m0 2h0m0 6h0m1-31h0m0 5h0m0 1h0m0 3h0m0 14h0m0 2h0m0 3h0m0 3h0m0 4h0m0 3h0m0 12h0m1-57h0m0 16h0m0 13h0m0 4h0m0 8h0m0 1h0m0 1h0m0 2h0m0 2h0m0 16h0m0 7h0m1-89h0m0 12h0m0 2h0m0 1h0m0 14h0m0 2h0m0 3h0m0 14h0m0 7h0m1-81h0m0 1h0m0 4h0m0 4h0m0 14h0m0 4h0m0 1h0m0 14h0m0 4h0m0 6h0m0 8h0m0 13h0m1-76h0m0 17h0m0 8h0m0 5h0m0 10h0m0 1h0m0 2h0m0 6h0m0 1h0m0 5h0m1-31h0m0 7h0m0 33h0m0 1h0m0 1h0m0 9h0m0 4h0m0 2h0m0 3h0m0 7h0m0 8h0m1-29h0m0 6h0m0 7h0m0 5h0m0 1h0m0 11h0m0 2h0m0 1h0m0 2h0m0 11h0m0 1h0m1-64h0m0 4h0m0 13h0m0 1h0m0 5h0m0 3h0m0 3h0m0 3h0m0 5h0m0 7h0m0 2h0m1-41h0m0 8h0m0 5h0m0 2h0m0 1h0m0 2h0m0 1h0m0 1h0m0 8h0m0 3h0m0 1h0m0 6h0m0 4h0m1-65h0m0 9h0m0 2h0m0 7h0m0 6h0m0 5h0m0 1h0m0 4h0m0 12h0m0 5h0m0 2h0m0 7h0m1-56h0m0 18h0m0 2h0m0 3h0m0 1h0m0 7h0m0 7h0m0 4h0m0 1h0m0 13h0m0 2h0m0 5h0m1-37h0m0 3h0m0 13h0m0 3h0m0 1h0m0 1h0m0 7h0m0 2h0m0 3h0m0 6h0m0 4h0m0 1h0m1-78h0m0 22h0m0 3h0m0 12h0m0 2h0m0 4h0m0 3h0m0 1h0m0 10h0m0 2h0m0 8h0m0 13h0m1-96h0m0 1h0m0 2h0m0 7h0m0 1h0m0 15h0m0 16h0m0 2h0m0 3h0m0 12h0m0 6h0m1-57h0m0 6h0m0 3h0m0 3h0m0 10h0m0 3h0m0 1h0m0 1h0m0 4h0m0 2h0m0 1h0m0 6h0m1-20h0m0 1h0m0 2h0m0 2h0m0 10h0m0 1h0m0 6h0m0 1h0m0 1h0m0 2h0m0 4h0m0 2h0m0 4h0m1-55h0m0 33h0m0 10h0m0 3h0m0 2h0m0 6h0m0 9h0m0 2h0m0 3h0m0 16h0m0 4h0m1-56h0m0 3h0m0 10h0m0 4h0m0 3h0m0 1h0m0 9h0m0 1h0m0 3h0m0 1h0m0 9h0m0 5h0m1-43h0m0 9h0m0 1h0m0 1h0m0 7h0m0 2h0m0 7h0m0 6h0m0 5h0m0 7h0m0 6h0m1-113h0m0 2h0m0 2h0m0 23h0m0 9h0m0 6h0m1-41h0m0 8h0m0 8h0m0 8h0m0 6h0m0 23h0m0 2h0m0 4h0m0 5h0m0 2h0m0 20h0m1-24h0m0 8h0m0 2h0m0 3h0m0 7h0m0 6h0m0 3h0m0 4h0m0 11h0m0 5h0m1-49h0m0 5h0m0 8h0m0 4h0m0 2h0m0 6h0m0 1h0m0 2h0m0 5h0m0 4h0m0 10h0m1-61h0m0 4h0m0 6h0m0 3h0m0 7h0m0 4h0m0 3h0m0 12h0m0 1h0m0 1h0m0 4h0m1-74h0m0 17h0m0 3h0m0 9h0m0 1h0m0 2h0m0 5h0m0 2h0m0 3h0m0 1h0m0 4h0m0 8h0m0 5h0m1-74h0m0 13h0m0 6h0m0 5h0m0 2h0m0 1h0m0 2h0m0 1h0m0 3h0m0 4h0m0 6h0m0 1h0m1-45h0m0 8h0m0 10h0m0 17h0m0 6h0m0 3h0m0 11h0m0 1h0m0 4h0m0 9h0m0 5h0m0 3h0m0 2h0m1-30h0m0 2h0m0 3h0m0 7h0m0 7h0m0 3h0m0 11h0m0 1h0m0 3h0m0 1h0m0 6h0m1-75h0m0 14h0m0 17h0m0 9h0m0 3h0m0 5h0m0 5h0m0 6h0m0 1h0m0 2h0m0 1h0m1-84h0m0 2h0m0 1h0m0 12h0m0 7h0m0 13h0m0 3h0m0 3h0m0 1h0m0 1h0m0 4h0m0 17h0m0 35h0m1-51h0m0 39h0m0 4h0m0 4h0m0 3h0m0 1h0m0 12h0m0 2h0m1-62h0m0 36h0m0 14h0m0 1h0m0 1h0m0 4h0m0 2h0m0 6h0m1-69h0m0 2h0m0 20h0m0 1h0m0 7h0m0 10h0m0 5h0m0 13h0m0 2h0m0 4h0m1-83h0m0 43h0m0 5h0m0 1h0m0 1h0m0 2h0m0 4h0m0 2h0m0 11h0m0 3h0m0 6h0m1-72h0m0 2h0m0 1h0m0 2h0m0 1h0m0 3h0m0 4h0m0 3h0m0 3h0m0 5h0m0 10h0m0 15h0m1-52h0m0 13h0m0 1h0m0 2h0m0 3h0m0 10h0m0 2h0m0 1h0m0 1h0m0 7h0m0 9h0m0 6h0m0 4h0m1-26h0m0 4h0m0 14h0m0 3h0m0 4h0m0 4h0m0 4h0m0 3h0m0 3h0m1-82h0m0 13h0m0 4h0m0 5h0m0 21h0m0 1h0m0 2h0m0 4h0m0 3h0m0 5h0m0 1h0m0 7h0m1-30h0m0 21h0m0 1h0m0 7h0m0 6h0m0 5h0m0 4h0m0 2h0m0 6h0m1-73h0m0 5h0m0 1h0m0 14h0m0 2h0m0 3h0m0 1h0m0 12h0m0 3h0m0 4h0m0 14h0m0 13h0m1-86h0m0 4h0m0 6h0m0 14h0m0 1h0m0 26h0m0 5h0m0 3h0m0 10h0m0 1h0m0 24h0m1-46h0m0 6h0m0 25h0m0 4h0m0 2h0m0 2h0m0 4h0m1-70h0m0 20h0m0 2h0m0 4h0m0 5h0m0 14h0m0 2h0m0 6h0m0 1h0m0 5h0m0 4h0m1-85h0m0 8h0m0 15h0m0 3h0m0 3h0m0 7h0m0 2h0m0 4h0m0 6h0m0 1h0m0 1h0m1-58h0m0 6h0m0 8h0m0 3h0m0 1h0m0 10h0m0 2h0m0 8h0m0 7h0m0 3h0m0 7h0m1-32h0m0 3h0m0 6h0m0 4h0m0 1h0m0 1h0m0 2h0m0 2h0m0 6h0m0 8h0m0 1h0m0 16h0m1-30h0m0 7h0m0 3h0m0 4h0m0 1h0m0 2h0m0 2h0m0 6h0m0 10h0m0 2h0m0 1h0m0 2h0m1-52h0m0 17h0m0 7h0m0 2h0m0 1h0m0 1h0m0 5h0m0 2h0m0 3h0m0 1h0m0 2h0m1-58h0m0 15h0m0 10h0m0 6h0m0 2h0m0 1h0m0 1h0m0 1h0m0 1h0m0 2h0m0 21h0m1-46h0m0 8h0m0 7h0m0 27h0m0 1h0m0 1h0m0 4h0m0 3h0m0 1h0m0 13h0m0 2h0m0 9h0m1-110h0m0 17h0m0 3h0m0 2h0m0 6h0m0 1h0m0 7h0m0 3h0m0 3h0m0 6h0m0 2h0m0 3h0m0 3h0m1-27h0m0 22h0m0 6h0m0 5h0m0 5h0m0 6h0m0 7h0m0 2h0m0 11h0m0 1h0m0 2h0m0 6h0m0 7h0m1-78h0m0 4h0m0 14h0m0 7h0m0 1h0m0 2h0m0 3h0m0 1h0m0 3h0m0 6h0m0 4h0m0 14h0m1-98h0m0 13h0m0 2h0m0 12h0m0 1h0m0 1h0m0 5h0m0 2h0m0 2h0m0 3h0m0 5h0m0 21h0m1-75h0m0 5h0m0 2h0m0 2h0m0 7h0m0 9h0m0 1h0m0 24h0m0 14h0m0 13h0m0 18h0m1-75h0m0 4h0m0 11h0m0 1h0m0 3h0m0 1h0m0 13h0m0 3h0m0 2h0m0 5h0m0 1h0m0 2h0m0 5h0m1-14h0m0 4h0m0 5h0m0 3h0m0 3h0m0 2h0m0 4h0m0 4h0m0 6h0m0 1h0m0 4h0m0 16h0m1-44h0m0 3h0m0 9h0m0 2h0m0 3h0m0 9h0m0 4h0m0 3h0m0 1h0m0 5h0m0 6h0m0 2h0m0 9h0m1-72h0m0 22h0m0 1h0m0 5h0m0 3h0m0 7h0m0 2h0m0 6h0m0 4h0m0 5h0m0 21h0m1-76h0m0 14h0m0 5h0m0 4h0m0 3h0m0 1h0m0 2h0m0 3h0m0 1h0m0 2h0m0 12h0m0 3h0m1-64h0m0 8h0m0 5h0m0 11h0m0 4h0m0 5h0m0 2h0m0 5h0m0 4h0m0 7h0m0 12h0m1-58h0m0 4h0m0 2h0m0 4h0m0 8h0m0 3h0m0 3h0m0 1h0m0 3h0m0 8h0m0 2h0m1-17h0m0 7h0m0 1h0m0 8h0m0 8h0m0 1h0m0 1h0m0 4h0m0 1h0m0 2h0m0 11h0m1-59h0m0 6h0m0 13h0m0 4h0m0 6h0m0 2h0m0 2h0m0 3h0m0 1h0m0 1h0m0 5h0m0 3h0m1-30h0m0 12h0m0 12h0m0 1h0m0 1h0m0 1h0m0 8h0m0 5h0m0 12h0m0 4h0m1-84h0m0 9h0m0 2h0m0 22h0m0 3h0m0 22h0m0 9h0m0 8h0m0 14h0m1-96h0m0 19h0m0 7h0m0 2h0m0 5h0m0 1h0m0 17h0m0 11h0m0 1h0m0 4h0m0 9h0m1-89h0m0 14h0m0 4h0m0 4h0m0 10h0m0 1h0m0 13h0m0 2h0m0 22h0m0 7h0m1-51h0m0 5h0m0 3h0m0 1h0m0 13h0m0 4h0m0 6h0m0 1h0m0 2h0m0 3h0m0 2h0m0 1h0m0 3h0m1-74h0m0 15h0m0 3h0m0 8h0m0 4h0m0 1h0m0 3h0m0 4h0m0 4h0m0 8h0m0 14h0m1-30h0m0 8h0m0 1h0m0 4h0m0 2h0m0 4h0m0 6h0m0 1h0m0 7h0m0 4h0m1-26h0m0 5h0m0 10h0m0 2h0m0 7h0m0 1h0m0 12h0m0 1h0m0 4h0m0 11h0m0 2h0m1-73h0m0 5h0m0 2h0m0 6h0m0 7h0m0 12h0m0 10h0m0 4h0m0 3h0m0 5h0m0 6h0m1-81h0m0 11h0m0 2h0m0 2h0m0 9h0m0 1h0m0 1h0m0 1h0m0 9h0m0 5h0m1-20h0m0 11h0m0 1h0m0 1h0m0 4h0m0 6h0m0 3h0m0 1h0m0 1h0m0 6h0m0 2h0m0 2h0m0 14h0m1-14h0m0 2h0m0 2h0m0 1h0m0 2h0m0 3h0m0 2h0m0 4h0m0 1h0m0 2h0m0 8h0m0 9h0m1-57h0m0 16h0m0 1h0m0 5h0m0 7h0m0 9h0m0 2h0m0 1h0m0 7h0m0 7h0m1-54h0m0 10h0m0 8h0m0 6h0m0 2h0m0 8h0m0 1h0m0 4h0m0 2h0m0 7h0m0 3h0m0 2h0m1-42h0m0 4h0m0 10h0m0 2h0m0 9h0m0 1h0m0 1h0m0 1h0m0 1h0m0 2h0m0 5h0m0 8h0m1-68h0m0 4h0m0 9h0m0 6h0m0 3h0m0 1h0m0 8h0m0 11h0m0 3h0m0 5h0m0 1h0m0 6h0m1-69h0m0 2h0m0 11h0m0 4h0m0 1h0m0 9h0m0 3h0m0 2h0m0 5h0m0 5h0m0 27h0m1-12h0m0 5h0m0 6h0m0 7h0m0 2h0m0 1h0m0 3h0m0 1h0m1-36h0m0 10h0m0 10h0m0 2h0m0 4h0m0 3h0m0 3h0m0 6h0m0 6h0m0 7h0m1-51h0m0 5h0m0 12h0m0 2h0m0 2h0m0 2h0m0 2h0m0 3h0m0 4h0m1-65h0m0 6h0m0 5h0m0 9h0m0 8h0m0 1h0m0 1h0m0 5h0m0 1h0m0 15h0m1-85h0m0 15h0m0 6h0m0 15h0m0 1h0m0 11h0m0 1h0m0 4h0m0 8h0m0 10h0m0 2h0m0 11h0m0 25h0m1-111h0m0 22h0m0 13h0m0 8h0m0 2h0m0 10h0m0 1h0m0 3h0m0 16h0m0 1h0m0 4h0m0 27h0m1-51h0m0 20h0m0 2h0m0 2h0m0 2h0m0 1h0m0 6h0m0 1h0m0 7h0m0 21h0m1-69h0m0 10h0m0 5h0m0 4h0m0 4h0m0 3h0m0 5h0m0 1h0m0 2h0m0 2h0m0 4h0m1-57h0m0 10h0m0 18h0m0 3h0m0 7h0m0 1h0m0 1h0m0 1h0m0 4h0m0 9h0m0 14h0m1-80h0m0 2h0m0 3h0m0 14h0m0 3h0m0 7h0m0 1h0m0 1h0m0 2h0m0 4h0m0 6h0m0 18h0m0 27h0m1-72h0m0 24h0m0 7h0m0 1h0m0 8h0m0 2h0m0 3h0m0 1h0m0 5h0m0 6h0m0 2h0m0 17h0m1-62h0m0 8h0m0 7h0m0 2h0m0 1h0m0 3h0m0 8h0m0 1h0m0 1h0m0 7h0m1-55h0m0 7h0m0 10h0m0 2h0m0 1h0m0 11h0m0 7h0m0 16h0m0 1h0m0 2h0m0 1h0m0 2h0m0 14h0m1-75h0m0 2h0m0 3h0m0 6h0m0 5h0m0 11h0m0 5h0m0 4h0m0 4h0m0 2h0m0 11h0m0 5h0m1-50h0m0 23h0m0 9h0m0 1h0m0 2h0m0 3h0m0 2h0m0 7h0m0 1h0m0 12h0m0 12h0m1-37h0m0 3h0m0 14h0m0 1h0m0 5h0m0 2h0m0 2h0m0 5h0m0 2h0m0 4h0m1-28h0m0 4h0m0 2h0m0 2h0m0 6h0m0 3h0m0 2h0m0 3h0m0 3h0m0 2h0m1-72h0m0 6h0m0 6h0m0 1h0m0 8h0m0 10h0m0 2h0m0 2h0m0 17h0m0 2h0m0 6h0m0 4h0m1-61h0m0 6h0m0 9h0m0 5h0m0 2h0m0 1h0m0 3h0m0 9h0m0 1h0m0 3h0m0 6h0m1-89h0m0 4h0m0 3h0m0 9h0m0 10h0m0 5h0m0 1h0m0 3h0m0 2h0m0 1h0m0 7h0m0 20h0m1-65h0m0 11h0m0 3h0m0 9h0m0 2h0m0 2h0m0 2h0m0 5h0m0 3h0m0 30h0m0 3h0m0 4h0m0 9h0m1-85h0m0 24h0m0 2h0m0 5h0m0 14h0m0 3h0m0 1h0m0 17h0m0 4h0m0 12h0m0 8h0m0 2h0m1-34h0m0 5h0m0 3h0m0 11h0m0 2h0m0 39h0m1-40h0m0 1h0m0 14h0m0 4h0m0 16h0m0 7h0m0 1h0m0 1h0m0 2h0m1-74h0m0 35h0m0 2h0m0 1h0m0 2h0m0 1h0m0 5h0m0 13h0m0 5h0m0 2h0m0 3h0m1-76h0m0 17h0m0 6h0m0 8h0m0 5h0m0 9h0m0 2h0m0 8h0m0 3h0m0 3h0m0 10h0m1-70h0m0 11h0m0 1h0m0 7h0m0 1h0m0 1h0m0 1h0m0 6h0m0 7h0m0 3h0m0 3h0m0 1h0m1-70h0m0 28h0m0 1h0m0 1h0m0 21h0m0 4h0m0 6h0m0 17h0m0 3h0m0 5h0m0 16h0m1-104h0m0 10h0m0 4h0m0 13h0m0 14h0m0 2h0m0 3h0m0 7h0m0 5h0m0 2h0m0 5h0m1-50h0m0 13h0m0 5h0m0 2h0m0 7h0m0 1h0m0 2h0m0 4h0m0 2h0m0 3h0m0 1h0m0 11h0m1-54h0m0 18h0m0 9h0m0 9h0m0 2h0m0 4h0m0 5h0m0 7h0m0 1h0m0 8h0m0 7h0m0 10h0m0 14h0m1-76h0m0 8h0m0 6h0m0 2h0m0 6h0m0 3h0m0 5h0m0 3h0m0 7h0m0 6h0m0 20h0m1-47h0m0 2h0m0 3h0m0 3h0m0 5h0m0 2h0m0 1h0m0 2h0m0 2h0m0 3h0m0 2h0m0 1h0m0 2h0m1-47h0m0 6h0m0 14h0m0 8h0m0 5h0m0 8h0m0 4h0m0 1h0m0 20h0m0 5h0m0 1h0m1-69h0m0 11h0m0 12h0m0 2h0m0 1h0m0 2h0m0 2h0m0 1h0m0 3h0m0 9h0m0 4h0m0 6h0m1-40h0m0 3h0m0 5h0m0 6h0m0 2h0m0 2h0m0 4h0m0 5h0m0 2h0m0 3h0m0 1h0m0 8h0m1-59h0m0 2h0m0 5h0m0 3h0m0 1h0m0 6h0m0 7h0m0 3h0m0 1h0m0 2h0m0 13h0m1-48h0m0 8h0m0 4h0m0 1h0m0 1h0m0 2h0m0 6h0m0 2h0m0 6h0m0 8h0m0 4h0m0 31h0m0 13h0m1-75h0m0 14h0m0 4h0m0 2h0m0 9h0m0 17h0m0 7h0m0 3h0m0 4h0m0 7h0m0 5h0m0 1h0m1-90h0m0 3h0m0 8h0m0 16h0m0 2h0m0 3h0m0 2h0m0 3h0m0 10h0m0 1h0m0 1h0m1-73h0m0 2h0m0 31h0m0 7h0m0 10h0m0 3h0m0 2h0m0 3h0m0 5h0m0 8h0m0 1h0m0 6h0m1-54h0m0 16h0m0 10h0m0 5h0m0 4h0m0 1h0m0 1h0m0 1h0m0 1h0m0 7h0m0 4h0m0 1h0m0 2h0m1-24h0m0 13h0m0 1h0m0 1h0m0 1h0m0 2h0m0 2h0m0 3h0m0 9h0m1-47h0m0 1h0m0 1h0m0 5h0m0 1h0m0 1h0m0 3h0m0 1h0m0 2h0m0 5h0m0 1h0m0 1h0m1-57h0m0 21h0m0 4h0m0 5h0m0 1h0m0 7h0m0 4h0m0 1h0m0 1h0m0 4h0m0 6h0m1-48h0m0 22h0m0 4h0m0 11h0m0 8h0m0 1h0m0 8h0m0 1h0m0 4h0m0 8h0m0 19h0m1-64h0m0 10h0m0 5h0m0 3h0m0 1h0m0 1h0m0 7h0m0 2h0m0 1h0m0 7h0m0 3h0m0 2h0m0 4h0m1-74h0m0 1h0m0 1h0m0 2h0m0 2h0m0 1h0m0 8h0m0 14h0m1-38h0m0 13h0m0 3h0m0 2h0m0 1h0m0 3h0m0 12h0m0 3h0m1-25h0m0 16h0m0 4h0m0 7h0m0 4h0m0 4h0m0 2h0m0 2h0m0 3h0m0 5h0m0 11h0m1-57h0m0 2h0m0 5h0m0 25h0m0 2h0m0 7h0m0 3h0m0 2h0m0 4h0m0 1h0m0 1h0m0 3h0m1-48h0m0 16h0m0 3h0m0 4h0m0 2h0m0 5h0m0 4h0m0 3h0m0 1h0m0 6h0m0 13h0m0 10h0m1-57h0m0 11h0m0 8h0m0 17h0m0 3h0m0 2h0m0 17h0m0 13h0m0 2h0m0 3h0m0 9h0m1-55h0m0 7h0m0 5h0m0 6h0m0 4h0m0 1h0m0 3h0m0 1h0m0 6h0m0 3h0m0 2h0m0 1h0m1-47h0m0 1h0m0 2h0m0 1h0m0 8h0m0 3h0m0 4h0m0 2h0m0 2h0m0 7h0m0 10h0m0 2h0m1-44h0m0 6h0m0 1h0m0 4h0m0 3h0m0 1h0m0 1h0m0 5h0m0 1h0m0 34h0m1-82h0m0 17h0m0 2h0m0 3h0m0 2h0m0 1h0m0 1h0m0 2h0m0 3h0m0 1h0m0 8h0m0 6h0m1-30h0m0 6h0m0 1h0m0 2h0m0 1h0m0 6h0m0 1h0m0 2h0m0 3h0m0 2h0m0 3h0m0 7h0m1-41h0m0 3h0m0 11h0m0 2h0m0 4h0m0 1h0m0 9h0m0 2h0m0 1h0m0 6h0m0 3h0m0 21h0m1-56h0m0 9h0m0 1h0m0 8h0m0 4h0m0 3h0m0 2h0m0 4h0m0 2h0m0 8h0m0 8h0m1-73h0m0 7h0m0 7h0m0 3h0m0 3h0m0 2h0m0 5h0m0 2h0m0 3h0m0 1h0m0 22h0m0 2h0m1-42h0m0 5h0m0 3h0m0 1h0m0 4h0m0 9h0m0 6h0m0 2h0m0 1h0m0 1h0m0 2h0m0 1h0m0 2h0m1-59h0m0 14h0m0 9h0m0 3h0m0 5h0m0 1h0m0 1h0m0 4h0m0 5h0m0 1h0m0 16h0m1-72h0m0 3h0m0 1h0m0 3h0m0 4h0m0 15h0m0 4h0m0 2h0m0 10h0m0 1h0m0 9h0m1-28h0m0 2h0m0 4h0m0 2h0m0 5h0m0 5h0m0 2h0m0 2h0m0 2h0m0 5h0m0 3h0m1-45h0m0 9h0m0 1h0m0 3h0m0 5h0m0 3h0m0 2h0m0 4h0m0 5h0m0 4h0m0 12h0m0 4h0m0 21h0m1-62h0m0 7h0m0 1h0m0 9h0m0 2h0m0 2h0m0 11h0m0 1h0m0 8h0m0 4h0m0 16h0m0 4h0m1-63h0m0 2h0m0 3h0m0 1h0m0 1h0m0 1h0m0 1h0m0 2h0m0 14h0m0 6h0m0 1h0m0 6h0m1-62h0m0 6h0m0 23h0m0 12h0m0 2h0m0 3h0m0 13h0m0 1h0m0 5h0m0 1h0m0 2h0m0 2h0m0 2h0m1-69h0m0 12h0m0 4h0m0 1h0m0 3h0m0 9h0m0 1h0m0 17h0m0 1h0m0 1h0m0 5h0m0 13h0m1-29h0m0 1h0m0 19h0m0 3h0m0 4h0m0 4h0m0 1h0m0 3h0m0 3h0m0 6h0m0 2h0m1-49h0m0 3h0m0 12h0m0 3h0m0 1h0m0 4h0m0 3h0m0 4h0m0 2h0m0 9h0m0 7h0m0 11h0m1-72h0m0 19h0m0 13h0m0 5h0m0 1h0m0 4h0m0 1h0m0 1h0m0 5h0m0 3h0m0 2h0m0 10h0m1-60h0m0 17h0m0 6h0m0 2h0m0 2h0m0 1h0m0 2h0m0 1h0m0 1h0m0 4h0m0 21h0m0 10h0m1-77h0m0 22h0m0 4h0m0 5h0m0 2h0m0 1h0m0 13h0m0 5h0m0 17h0m0 4h0m0 8h0m0 14h0m0 6h0m1-101h0m0 6h0m0 2h0m0 11h0m0 4h0m0 15h0m0 3h0m0 3h0m1 5h0m0 1h0m0 1h0m0 12h0m0 4h0m0 3h0m0 5h0m0 1h0m0 1h0m0 10h0m0 4h0m0 1h0m1-57h0m0 8h0m0 14h0m0 1h0m0 18h0m0 3h0m0 4h0m0 3h0m0 11h0m0 5h0m1-86h0m0 14h0m0 2h0m0 1h0m0 5h0m0 4h0m0 1h0m0 1h0m0 1h0m0 2h0m0 2h0m1-9h0m0 1h0m0 10h0m0 3h0m0 1h0m0 7h0m0 1h0m0 5h0m0 3h0m0 1h0m0 2h0m0 3h0m1-66h0m0 16h0m0 19h0m0 3h0m0 10h0m0 3h0m0 4h0m0 4h0m0 7h0m0 3h0m0 2h0m0 1h0m0 2h0m1-89h0m0 9h0m0 10h0m0 3h0m0 11h0m0 4h0m0 5h0m0 8h0m1-50h0m0 30h0m0 7h0m0 9h0m0 8h0m0 7h0m0 2h0m0 1h0m0 1h0m0 6h0m0 21h0m0 1h0m1-40h0m0 13h0m0 4h0m0 7h0m0 6h0m0 5h0m0 3h0m0 9h0m0 3h0m1-30h0m0 14h0m0 4h0m0 1h0m0 4h0m0 4h0m0 2h0m0 1h0m0 1h0m0 4h0m1-123h0m0 19h0m0 13h0m0 12h0m0 9h0m0 26h0m0 10h0m0 3h0m1-93h0m0 5h0m0 9h0m0 9h0m0 3h0m0 4h0m0 1h0m0 12h0m0 13h0m0 3h0m1-44h0m0 3h0m0 3h0m0 7h0m0 24h0m0 5h0m0 1h0m0 2h0m0 18h0m0 3h0m0 3h0m1-68h0m0 3h0m0 7h0m0 3h0m0 6h0m0 3h0m0 13h0m0 8h0m0 5h0m0 5h0m0 14h0m1-60h0m0 1h0m0 1h0m0 21h0m0 5h0m0 3h0m0 2h0m0 3h0m0 3h0m0 9h0m0 3h0m1-15h0m0 2h0m0 5h0m0 2h0m0 5h0m0 1h0m0 7h0m0 4h0m0 2h0m0 2h0m0 1h0m0 4h0m1-43h0m0 63h0m1-11h0m0 19h0m0 5h0m1-66h0m0 10h0m0 5h0m0 3h0m0 2h0m0 2h0m0 4h0m0 2h0m0 1h0m0 11h0m0 19h0m0 5h0m1-66h0m0 10h0m0 2h0m0 11h0m0 1h0m0 1h0m0 8h0m0 14h0m0 1h0m0 4h0m0 6h0m1-1h0m0 2h0m0 5h0m1-39h0m0 2h0m0 21h0m0 3h0m0 2h0m0 1h0m0 2h0m0 1h0m0 1h0m0 1h0m1-82h0m0 26h0m0 28h0m0 1h0m0 1h0m0 5h0m0 2h0m0 12h0m1-77h0m0 1h0m0 5h0m0 17h0m0 14h0m0 4h0m0 9h0m0 1h0m0 8h0m0 5h0m0 2h0m1-96h0m0 11h0m0 8h0m0 5h0m0 8h0m0 5h0m0 11h0m0 1h0m0 14h0m0 39h0m1-29h0m0 4h0m0 2h0m0 3h0m0 1h0m0 1h0m0 7h0m0 1h0m0 10h0m0 4h0m0 1h0m0 5h0m1-31h0m0 1h0m0 5h0m0 3h0m0 1h0m0 7h0m0 1h0m0 3h0m0 2h0m0 2h0m0 7h0m1-78h0m0 21h0m0 1h0m0 1h0m0 1h0m0 3h0m0 6h0m0 4h0m0 2h0m0 3h0m0 5h0m1-59h0m0 1h0m0 12h0m0 2h0m0 3h0m0 5h0m0 2h0m0 9h0m0 2h0m0 11h0m0 7h0m1-42h0m0 5h0m0 8h0m0 13h0m0 3h0m0 2h0m0 3h0m0 9h0m0 10h0m0 6h0m0 8h0m1-68h0m0 17h0m0 1h0m0 11h0m0 2h0m0 1h0m0 2h0m0 2h0m0 4h0m0 3h0m1-64h0m0 4h0m0 12h0m0 9h0m0 13h0m0 4h0m0 3h0m0 7h0m0 12h0m0 19h0m0 1h0m0 3h0m1-90h0m0 9h0m0 3h0m0 11h0m0 11h0m0 27h0m1-46h0m0 2h0m0 21h0m0 12h0m0 1h0m0 1h0m0 4h0m0 8h0m0 3h0m0 11h0m0 10h0m1-63h0m0 31h0m0 8h0m0 4h0m0 7h0m0 3h0m0 5h0m0 28h0m1-47h0m0 5h0m0 10h0m0 2h0m0 1h0m0 5h0m0 16h0m1-81h0m0 6h0m0 5h0m0 5h0m0 5h0m0 8h0m0 3h0m0 4h0m0 3h0m0 4h0m0 4h0m0 12h0m0 3h0m1-94h0m0 22h0m0 11h0m0 2h0m0 25h0m0 3h0m0 2h0m0 3h0m0 21h0m0 10h0m0 7h0m1-55h0m0 9h0m0 6h0m0 12h0m0 3h0m0 4h0m0 3h0m0 1h0m0 7h0m0 9h0m0 3h0m0 6h0m1-45h0m0 12h0m0 1h0m0 6h0m0 1h0m0 2h0m0 8h0m0 3h0m0 1h0m0 3h0m1-44h0m0 10h0m0 1h0m0 3h0m0 2h0m0 6h0m0 1h0m0 4h0m0 6h0m0 20h0m1-37h0m0 13h0m0 2h0m0 2h0m0 4h0m0 1h0m0 2h0m0 3h0m0 2h0m1-93h0m0 31h0m0 16h0m0 9h0m0 2h0m0 6h0m0 4h0m0 5h0m0 21h0m0 7h0m0 9h0m1-75h0m0 9h0m0 2h0m0 1h0m0 1h0m0 3h0m0 4h0m0 3h0m0 7h0m0 8h0m0 2h0m1-54h0m0 1h0m0 5h0m0 7h0m0 5h0m0 1h0m0 1h0m0 8h0m0 4h0m0 9h0m1-47h0m0 1h0m0 9h0m0 2h0m0 36h0m0 13h0m0 1h0m0 6h0m0 20h0m0 6h0m1-73h0m0 2h0m0 2h0m0 1h0m0 2h0m0 5h0m0 5h0m0 4h0m0 4h0m0 1h0m0 6h0m0 1h0m1-52h0m0 31h0m0 7h0m0 1h0m0 6h0m0 2h0m0 2h0m0 7h0m0 1h0m0 7h0m0 3h0m0 3h0m0 4h0m1-83h0m0 5h0m0 6h0m0 1h0m0 21h0m0 1h0m0 8h0m0 10h0m0 3h0m0 2h0m0 23h0m1-55h0m0 17h0m0 5h0m0 11h0m0 2h0m0 4h0m0 3h0m0 4h0m0 2h0m0 2h0m0 4h0m1-48h0m0 2h0m0 17h0m0 2h0m0 5h0m0 4h0m0 1h0m0 1h0m0 3h0m0 1h0m0 8h0m0 1h0m1-63h0m0 4h0m0 2h0m0 1h0m0 5h0m0 3h0m0 8h0m0 2h0m0 2h0m0 1h0m0 2h0m0 3h0m0 2h0m1-48h0m0 14h0m0 13h0m0 14h0m0 2h0m0 1h0m0 2h0m0 2h0m0 5h0m0 4h0m0 5h0m0 3h0m1-28h0m0 1h0m0 12h0m0 4h0m0 3h0m0 6h0m0 14h0m0 4h0m0 7h0m0 9h0m1-53h0m0 1h0m0 5h0m0 1h0m0 5h0m0 5h0m0 3h0m0 1h0m0 5h0m0 1h0m0 6h0m1-56h0m0 3h0m0 7h0m0 18h0m0 4h0m0 5h0m0 1h0m0 2h0m0 3h0m0 1h0m0 12h0m0 5h0m1-60h0m0 1h0m0 2h0m0 11h0m0 1h0m0 1h0m0 3h0m0 3h0m0 7h0m0 7h0m0 4h0m1-35h0m0 4h0m0 2h0m0 2h0m0 7h0m0 5h0m0 2h0m0 9h0m0 11h0m1-76h0m0 20h0m0 5h0m0 2h0m0 2h0m0 2h0m0 1h0m0 4h0m0 7h0m0 4h0m0 19h0m0 1h0m0 2h0m1-6h0m0 12h0m0 1h0m0 7h0m0 2h0m0 6h0m0 7h0m0 1h0m0 6h0m0 7h0m1-124h0m0 13h0m0 7h0m0 26h0m0 8h0m0 8h0m0 1h0m0 1h0m0 2h0m0 9h0m0 9h0m0 21h0m1-99h0m0 20h0m0 8h0m0 11h0m0 4h0m0 3h0m0 3h0m0 1h0m0 1h0m0 2h0m0 8h0m0 2h0m1-34h0m0 23h0m0 7h0m0 1h0m0 1h0m0 1h0m0 1h0m0 1h0m0 7h0m0 5h0m0 2h0m0 4h0m1-68h0m0 1h0m0 5h0m0 5h0m0 18h0m0 12h0m0 3h0m0 5h0m0 2h0m0 9h0m0 3h0m0 6h0m0 3h0m1-84h0m0 8h0m0 8h0m0 1h0m0 3h0m0 13h0m0 1h0m0 3h0m0 20h0m0 2h0m0 3h0m0 9h0m0 2h0m1-62h0m0 8h0m0 11h0m0 9h0m0 6h0m0 16h0m0 1h0m0 2h0m0 2h0m0 1h0m0 11h0m0 5h0m0 10h0m1-56h0m0 11h0m0 2h0m0 1h0m0 4h0m0 1h0m0 1h0m0 6h0m0 5h0m1-40h0m0 9h0m0 3h0m0 5h0m0 5h0m0 6h0m0 7h0m0 5h0m0 8h0m0 7h0m0 2h0m0 12h0m1-64h0m0 31h0m0 3h0m0 3h0m0 1h0m0 1h0m0 2h0m0 3h0m0 4h0m0 5h0m0 8h0m0 6h0m0 6h0m1-61h0m0 5h0m0 5h0m0 10h0m0 4h0m0 3h0m0 2h0m0 1h0m0 2h0m0 5h0m0 6h0m1-31h0m0 3h0m0 10h0m0 5h0m0 2h0m0 1h0m0 4h0m0 1h0m0 3h0m0 7h0m0 4h0m0 4h0m1-64h0m0 10h0m0 1h0m0 3h0m0 2h0m0 7h0m0 2h0m0 1h0m0 2h0m0 3h0m0 7h0m0 7h0m1-59h0m0 9h0m0 4h0m0 2h0m0 4h0m0 1h0m0 3h0m0 5h0m0 3h0m0 3h0m0 1h0m0 2h0m0 7h0m1-49h0m0 1h0m0 1h0m0 1h0m0 1h0m0 3h0m0 5h0m0 3h0m0 7h0m0 2h0m0 2h0m0 2h0m1-38h0m0 28h0m0 4h0m0 3h0m0 1h0m0 1h0m0 1h0m0 7h0m0 4h0m0 8h0m0 13h0m0 13h0m1-50h0m0 13h0m0 7h0m0 3h0m0 1h0m0 1h0m0 1h0m0 7h0m0 4h0m0 10h0m0 6h0m1-63h0m0 1h0m0 1h0m0 1h0m0 6h0m0 8h0m0 9h0m0 8h0m0 9h0m0 3h0m0 10h0m0 7h0m1-104h0m0 16h0m0 2h0m0 3h0m0 5h0m0 4h0m0 1h0m0 1h0m0 1h0m0 5h0m0 14h0m0 32h0m1-88h0m0 18h0m0 5h0m0 5h0m0 1h0m0 3h0m0 3h0m0 4h0m0 2h0m0 3h0m0 6h0m0 9h0m1-40h0m0 19h0m0 1h0m0 4h0m0 1h0m0 10h0m0 9h0m0 4h0m0 16h0m0 33h0m1-65h0m0 10h0m0 9h0m0 8h0m0 1h0m0 2h0m0 1h0m0 1h0m0 1h0m0 5h0m0 4h0m0 2h0m0 15h0m1-103h0m0 7h0m0 2h0m0 7h0m0 3h0m0 4h0m0 1h0m0 7h0m0 8h0m0 11h0m0 11h0m1-56h0m0 21h0m0 13h0m0 16h0m0 1h0m0 2h0m0 2h0m0 7h0m0 12h0m0 8h0m0 5h0m0 6h0m1-99h0m0 7h0m0 12h0m0 11h0m0 4h0m0 5h0m0 5h0m0 3h0m0 8h0m0 2h0m0 13h0m0 3h0m1-61h0m0 6h0m0 11h0m0 3h0m0 4h0m0 4h0m0 4h0m0 19h0m0 5h0m0 11h0m0 3h0m0 5h0m1-26h0m0 1h0m0 6h0m0 14h0m0 6h0m0 4h0m0 7h0m0 3h0m0 4h0m0 1h0m0 2h0m1-56h0m0 8h0m0 3h0m0 7h0m0 1h0m0 3h0m0 2h0m0 13h0m0 1h0m0 2h0m0 5h0m1-87h0m0 8h0m0 4h0m0 2h0m0 36h0m0 27h0m0 14h0m0 5h0m0 5h0m1-103h0m0 13h0m0 2h0m0 2h0m0 1h0m0 12h0m0 16h0m0 3h0m0 2h0m0 25h0m0 24h0m1-66h0m0 5h0m0 15h0m0 6h0m0 4h0m0 15h0m0 23h0m0 1h0m0 4h0m1-81h0m0 14h0m0 6h0m0 6h0m0 2h0m0 3h0m0 1h0m0 2h0m0 1h0m0 6h0m0 3h0m0 3h0m1-47h0m0 12h0m0 4h0m0 6h0m0 5h0m0 6h0m0 3h0m0 7h0m0 6h0m0 6h0m0 1h0m0 5h0m0 3h0m1-82h0m0 21h0m0 1h0m0 3h0m0 2h0m0 3h0m0 4h0m0 2h0m0 10h0m0 7h0m0 1h0m0 12h0m1-35h0m0 2h0m0 2h0m0 14h0m0 15h0m0 1h0m0 2h0m0 7h0m0 1h0m0 6h0m0 2h0m1-66h0m0 7h0m0 6h0m0 1h0m0 3h0m0 8h0m0 3h0m0 4h0m0 1h0m0 24h0m1-93h0m0 11h0m0 5h0m0 4h0m0 1h0m0 21h0m0 4h0m0 5h0m0 5h0m0 3h0m0 6h0m0 4h0m1-50h0m0 9h0m0 1h0m0 29h0m0 1h0m0 1h0m0 5h0m0 5h0m0 6h0m0 5h0m0 5h0m0 10h0m1-80h0m0 27h0m0 2h0m0 1h0m0 7h0m0 3h0m0 5h0m0 8h0m0 3h0m0 3h0m0 2h0m1-49h0m0 11h0m0 4h0m0 7h0m0 1h0m0 2h0m0 6h0m0 5h0m0 1h0m0 5h0m0 5h0m1-65h0m0 1h0m0 2h0m0 4h0m0 11h0m0 3h0m0 8h0m0 4h0m0 2h0m0 2h0m0 20h0m1-49h0m0 7h0m0 15h0m0 15h0m0 12h0m0 23h0m0 1h0m0 5h0m0 9h0m0 1h0m0 1h0m0 1h0m0 3h0m1-40h0m0 8h0m0 14h0m0 1h0m0 1h0m0 1h0m0 2h0m0 4h0m0 4h0m0 3h0m1-42h0m0 1h0m0 5h0m0 1h0m0 3h0m0 4h0m0 2h0m0 3h0m0 4h0m0 2h0m1-72h0m0 15h0m0 4h0m0 3h0m0 5h0m0 2h0m0 5h0m0 2h0m0 6h0m0 2h0m0 1h0m0 6h0m0 1h0m1-72h0m0 22h0m0 5h0m0 2h0m0 12h0m0 9h0m0 5h0m0 1h0m0 3h0m0 13h0m0 11h0m0 9h0m1-50h0m0 8h0m0 9h0m0 1h0m0 5h0m0 6h0m0 1h0m0 4h0m0 1h0m0 11h0m0 18h0m1-82h0m0 2h0m0 6h0m0 3h0m0 5h0m0 7h0m0 9h0m0 7h0m0 2h0m0 7h0m0 5h0m1-59h0m0 1h0m0 6h0m0 5h0m0 1h0m0 6h0m0 10h0m0 2h0m0 2h0m0 2h0m0 8h0m0 2h0m0 25h0m1-46h0m0 7h0m0 3h0m0 10h0m0 9h0m0 4h0m0 6h0m0 1h0m0 3h0m0 3h0m0 5h0m0 4h0m1-61h0m0 16h0m0 48h0m0 3h0m0 4h0m0 1h0m0 2h0m1-64h0m0 17h0m0 5h0m0 10h0m0 6h0m0 1h0m0 1h0m0 9h0m0 1h0m0 3h0m1-40h0m0 5h0m0 9h0m0 6h0m0 13h0m0 2h0m0 2h0m0 12h0m0 6h0m1-68h0m0 4h0m0 1h0m0 9h0m0 9h0m0 1h0m0 1h0m0 2h0m0 2h0m0 2h0m0 6h0m0 2h0m0 9h0m1-54h0m0 13h0m0 6h0m0 1h0m0 2h0m0 8h0m0 4h0m0 7h0m0 5h0m0 8h0m0 1h0m0 4h0m1-77h0m0 13h0m0 6h0m0 5h0m0 6h0m0 4h0m0 3h0m0 4h0m0 2h0m0 9h0m0 12h0m0 32h0m1-96h0m0 1h0m0 1h0m0 3h0m0 12h0m0 6h0m0 2h0m0 9h0m0 3h0m0 8h0m0 3h0m0 1h0m0 1h0m1-18h0m0 3h0m0 6h0m0 2h0m0 1h0m0 1h0m0 3h0m0 11h0m0 4h0m0 14h0m0 5h0m1-83h0m0 6h0m0 17h0m0 4h0m0 2h0m0 7h0m0 5h0m0 6h0m0 6h0m0 1h0m0 11h0m0 13h0m0 7h0m1-64h0m0 24h0m0 3h0m0 16h0m0 1h0m0 2h0m0 4h0m0 8h0m0 9h0m0 9h0m1-77h0m0 3h0m0 6h0m0 11h0m0 10h0m0 2h0m0 4h0m0 5h0m0 2h0m0 3h0m0 20h0m1-61h0m0 4h0m0 19h0m0 2h0m0 11h0m0 1h0m0 4h0m0 1h0m0 7h0m0 9h0m0 3h0m0 11h0m0 1h0m1-34h0m0 13h0m0 15h0m0 3h0m0 1h0m0 2h0m0 2h0m1-59h0m0 7h0m0 3h0m0 10h0m0 6h0m0 3h0m0 8h0m0 2h0m0 2h0m0 2h0m0 1h0m0 3h0m1-44h0m0 1h0m0 16h0m0 1h0m0 15h0m0 1h0m0 1h0m0 8h0m0 6h0m1-40h0m0 2h0m0 14h0m0 1h0m0 10h0m0 1h0m0 6h0m0 4h0m0 1h0m1-47h0m0 2h0m0 3h0m0 10h0m0 15h0m0 5h0m0 1h0m0 5h0m0 7h0m0 4h0m0 3h0m1-58h0m0 13h0m0 9h0m0 13h0m0 2h0m0 7h0m0 5h0m0 5h0m1-66h0m0 2h0m0 8h0m0 1h0m0 4h0m0 1h0m0 4h0m0 3h0m0 3h0m0 4h0m0 1h0m0 13h0m1-34h0m0 1h0m0 1h0m0 2h0m0 3h0m0 4h0m0 3h0m0 3h0m0 1h0m0 1h0m0 2h0m0 14h0m0 2h0m1-66h0m0 11h0m0 5h0m0 14h0m0 11h0m0 6h0m0 4h0m0 1h0m0 1h0m0 1h0m0 4h0m0 8h0m1-51h0m0 8h0m0 1h0m0 1h0m0 5h0m0 3h0m0 5h0m0 3h0m0 2h0m0 6h0m0 4h0m0 1h0m0 1h0m1-32h0m0 34h0m0 13h0m0 5h0m0 7h0m0 1h0m0 6h0m1-56h0m0 15h0m0 1h0m0 9h0m0 13h0m0 7h0m0 1h0m0 3h0m0 3h0m1-83h0m0 4h0m0 8h0m0 5h0m0 11h0m0 1h0m0 1h0m0 10h0m0 11h0m0 1h0m0 4h0m0 15h0m1-65h0m0 6h0m0 9h0m0 2h0m0 1h0m0 3h0m0 2h0m0 5h0m0 4h0m0 7h0m0 3h0m1-45h0m0 2h0m0 7h0m0 1h0m0 14h0m0 1h0m0 1h0m0 2h0m0 1h0m0 3h0m0 1h0m0 3h0m0 4h0m1-41h0m0 12h0m0 3h0m0 7h0m0 2h0m0 2h0m0 3h0m0 4h0m0 15h0m0 1h0m0 6h0m0 2h0m0 23h0m1-104h0m0 8h0m0 6h0m0 3h0m0 4h0m0 28h0m0 16h0m0 11h0m1-92h0m0 4h0m0 2h0m0 1h0m0 7h0m0 9h0m0 2h0m0 28h0m0 4h0m0 3h0m1-17h0m0 9h0m0 18h0m0 5h0m0 6h0m0 17h0m0 20h0m0 8h0m1-52h0m0 1h0m0 2h0m0 2h0m0 1h0m0 5h0m0 4h0m0 3h0m0 1h0m0 3h0m0 4h0m0 3h0m1-85h0m0 10h0m0 10h0m0 3h0m0 2h0m0 4h0m0 12h0m0 9h0m0 9h0m0 9h0m0 6h0m1-84h0m0 10h0m0 11h0m0 3h0m0 13h0m0 7h0m0 6h0m0 24h0m0 1h0m0 22h0m1-49h0m0 4h0m0 4h0m0 3h0m0 1h0m0 4h0m0 22h0m0 4h0m0 13h0m1-77h0m0 6h0m0 19h0m0 6h0m0 1h0m0 5h0m0 9h0m0 2h0m0 2h0m0 3h0m0 6h0m0 3h0m1-81h0m0 20h0m0 6h0m0 1h0m0 6h0m0 4h0m0 1h0m0 12h0m0 11h0m0 8h0m0 3h0m0 4h0m1-62h0m0 3h0m0 13h0m0 1h0m0 5h0m0 2h0m0 5h0m0 10h0m0 2h0m0 1h0m0 5h0m0 7h0m0 2h0m1-37h0m0 12h0m0 4h0m0 1h0m0 25h0m0 5h0m0 10h0m0 13h0m1-103h0m0 25h0m0 24h0m0 5h0m0 2h0m0 13h0m0 1h0m0 12h0m0 4h0m0 7h0m0 1h0m1-69h0m0 13h0m0 4h0m0 9h0m0 5h0m0 3h0m0 1h0m0 7h0m0 3h0m0 1h0m0 4h0m0 13h0m1-93h0m0 7h0m0 11h0m0 27h0m0 11h0m0 2h0m0 1h0m0 8h0m0 8h0m0 10h0m1-52h0m0 1h0m0 11h0m0 19h0m0 4h0m0 1h0m0 1h0m0 1h0m0 1h0m0 5h0m0 2h0m0 1h0m0 3h0m1-82h0m0 24h0m0 7h0m0 8h0m0 9h0m0 6h0m0 1h0m0 2h0m0 3h0m0 1h0m0 14h0m1-14h0m0 1h0m0 3h0m0 8h0m0 10h0m0 1h0m0 3h0m0 1h0m0 3h0m0 1h0m0 4h0m0 8h0m0 3h0m1-69h0m0 8h0m0 3h0m0 21h0m0 7h0m0 1h0m0 4h0m0 4h0m0 2h0m0 1h0m0 4h0m0 3h0m0 10h0m1-85h0m0 40h0m0 1h0m0 4h0m0 6h0m0 1h0m0 1h0m0 1h0m0 8h0m0 2h0m0 4h0m0 3h0m0 18h0m1-69h0m0 4h0m0 2h0m0 3h0m0 5h0m0 21h0m0 1h0m0 10h0m0 1h0m0 3h0m0 2h0m0 1h0m0 10h0m1-116h0m0 21h0m0 7h0m0 3h0m0 6h0m0 14h0m0 22h0m0 7h0m0 9h0m0 1h0m0 4h0m0 3h0m1-54h0m0 4h0m0 11h0m0 3h0m0 17h0m0 1h0m0 3h0m0 7h0m0 5h0m0 5h0m0 2h0m0 2h0m1-59h0m0 8h0m0 18h0m0 5h0m0 1h0m0 6h0m0 1h0m0 1h0m0 4h0m0 3h0m0 19h0m1-61h0m0 6h0m0 3h0m0 1h0m0 5h0m0 1h0m0 7h0m0 3h0m0 10h0m0 2h0m0 1h0m0 4h0m1-82h0m0 13h0m0 16h0m0 6h0m0 19h0m0 3h0m0 2h0m0 5h0m0 9h0m0 9h0m0 6h0m0 16h0m1-69h0m0 9h0m0 10h0m0 7h0m0 4h0m0 7h0m0 1h0m0 4h0m0 1h0m0 1h0m0 5h0m1-37h0m0 1h0m0 4h0m0 2h0m0 2h0m0 4h0m0 2h0m0 2h0m0 5h0m0 2h0m0 1h0m0 5h0m0 34h0m1-47h0m0 4h0m0 2h0m0 1h0m0 4h0m0 6h0m0 9h0m0 4h0m0 2h0m0 3h0m0 5h0m1-85h0m0 2h0m0 3h0m0 5h0m0 9h0m0 2h0m0 1h0m0 1h0m0 14h0m0 3h0m0 4h0m0 9h0m1-40h0m0 11h0m0 7h0m0 6h0m0 2h0m0 1h0m0 1h0m0 4h0m0 2h0m0 3h0m0 4h0m0 10h0m1-35h0m0 2h0m0 5h0m0 5h0m0 3h0m0 1h0m0 1h0m0 3h0m0 2h0m0 3h0m0 3h0m0 3h0m0 15h0m1-44h0m0 10h0m0 14h0m0 7h0m0 7h0m0 1h0m0 1h0m0 3h0m0 3h0m0 2h0m1-75h0m0 17h0m0 3h0m0 1h0m0 1h0m0 3h0m0 2h0m0 8h0m0 1h0m0 4h0m0 8h0m0 6h0m1-34h0m0 7h0m0 1h0m0 1h0m0 5h0m0 1h0m0 1h0m0 1h0m0 3h0m0 1h0m0 2h0m0 1h0m1-53h0m0 17h0m0 16h0m0 5h0m0 11h0m0 2h0m0 1h0m0 3h0m0 2h0m0 9h0m0 29h0m1-58h0m0 1h0m0 4h0m0 3h0m0 4h0m0 7h0m0 1h0m0 9h0m0 4h0m0 3h0m0 11h0m0 10h0m1-96h0m0 15h0m0 5h0m0 1h0m0 7h0m0 3h0m0 6h0m0 1h0m0 2h0m0 8h0m0 6h0m0 13h0m1-77h0m0 3h0m0 5h0m0 7h0m0 4h0m0 14h0m0 15h0m0 3h0m0 7h0m0 7h0m0 3h0m0 12h0m0 1h0m1-81h0m0 16h0m0 5h0m0 1h0m0 1h0m0 3h0m0 1h0m0 7h0m0 3h0m0 6h0m0 1h0m0 22h0m1-49h0m0 13h0m0 13h0m0 12h0m0 10h0m0 3h0m0 3h0m0 6h0m0 1h0m0 4h0m0 4h0m1-50h0m0 15h0m0 1h0m0 7h0m0 1h0m0 1h0m0 6h0m0 1h0m0 7h0m0 3h0m0 1h0m0 4h0m1-35h0m0 2h0m0 1h0m0 3h0m0 11h0m0 1h0m0 1h0m0 4h0m0 5h0m0 1h0m0 8h0m1-66h0m0 12h0m0 2h0m0 8h0m0 12h0m0 2h0m0 1h0m0 8h0m0 1h0m0 1h0m1-36h0m0 2h0m0 2h0m0 1h0m0 5h0m0 5h0m0 1h0m0 5h0m0 4h0m0 5h0m0 2h0m1-49h0m0 27h0m0 5h0m0 1h0m0 3h0m0 2h0m0 1h0m0 3h0m0 2h0m0 4h0m0 5h0m0 4h0m1-60h0m0 20h0m0 9h0m0 6h0m0 12h0m0 11h0m0 1h0m0 2h0m0 2h0m0 4h0m0 3h0m0 25h0m1-89h0m0 5h0m0 18h0m0 8h0m0 1h0m0 2h0m0 4h0m0 1h0m0 4h0m0 3h0m0 36h0m1-102h0m0 19h0m0 23h0m0 1h0m0 8h0m0 4h0m0 4h0m0 11h0m0 1h0m1-57h0m0 32h0m0 3h0m0 1h0m0 1h0m0 11h0m0 1h0m0 1h0m0 5h0m0 6h0m0 23h0m0 3h0m0 11h0m1-78h0m0 1h0m0 5h0m0 3h0m0 1h0m0 1h0m0 1h0m0 6h0m0 32h0m0 11h0m1-100h0m0 17h0m0 8h0m0 9h0m0 6h0m0 1h0m0 2h0m0 1h0m0 5h0m0 14h0m0 2h0m0 17h0m1-39h0m0 3h0m0 14h0m0 9h0m0 1h0m0 18h0m0 2h0m0 6h0m0 1h0m0 2h0m0 1h0m0 5h0m0 11h0m1-83h0m0 16h0m0 3h0m0 2h0m0 12h0m0 2h0m0 2h0m0 9h0m0 8h0m0 1h0m0 1h0m0 4h0m0 11h0m1-75h0m0 10h0m0 1h0m0 1h0m0 2h0m0 6h0m0 6h0m0 1h0m0 4h0m0 2h0m0 9h0m0 7h0m1-67h0m0 4h0m0 1h0m0 10h0m0 2h0m0 1h0m0 3h0m0 5h0m0 3h0m0 9h0m0 8h0m0 15h0m1-65h0m0 8h0m0 3h0m0 2h0m0 2h0m0 6h0m0 1h0m0 7h0m0 6h0m0 4h0m0 13h0m1-49h0m0 9h0m0 14h0m1-28h0m0 5h0m0 6h0m0 17h0m0 13h0m1-42h0m0 6h0m0 1h0m0 3h0m0 6h0m0 7h0m0 2h0m0 3h0m0 11h0m0 33h0m1-54h0m0 5h0m0 5h0m0 4h0m0 2h0m0 4h0m0 1h0m0 5h0m0 1h0m0 11h0m0 10h0m0 12h0m0 5h0m1-74h0m0 6h0m0 12h0m0 10h0m0 3h0m0 3h0m0 5h0m0 2h0m0 6h0m0 2h0m0 2h0m0 5h0m0 13h0m1-54h0m0 2h0m0 1h0m0 1h0m0 1h0m0 1h0m0 2h0m0 1h0m0 2h0m0 9h0m0 10h0m1-33h0m0 17h0m0 1h0m0 2h0m0 7h0m0 2h0m0 3h0m0 2h0m0 1h0m0 1h0m0 1h0m0 5h0m1-33h0m0 5h0m0 3h0m0 1h0m0 10h0m0 7h0m0 8h0m0 8h0m0 3h0m0 35h0m0 12h0m1-45h0m0 9h0m0 14h0m0 4h0m0 6h0m0 4h0m1-40h0m0 4h0m0 8h0m0 7h0m0 4h0m0 2h0m0 4h0m0 1h0m0 2h0m0 1h0m0 5h0m1-70h0m0 3h0m0 9h0m0 1h0m0 4h0m0 3h0m0 8h0m0 3h0m0 1h0m0 3h0m1-56h0m0 2h0m0 8h0m0 2h0m0 1h0m0 6h0m0 6h0m0 6h0m0 9h0m0 2h0m0 5h0m0 1h0m1-58h0m0 8h0m0 1h0m0 12h0m0 6h0m0 1h0m0 3h0m0 4h0m0 7h0m0 2h0m0 21h0m1-45h0m0 3h0m0 6h0m0 3h0m0 6h0m0 2h0m0 6h0m0 1h0m0 18h0m0 9h0m0 1h0m0 6h0m1-51h0m0 2h0m0 8h0m0 2h0m0 3h0m0 14h0m0 6h0m0 10h0m0 5h0m0 1h0m0 3h0m0 6h0m0 15h0m1-97h0m0 4h0m0 25h0m0 7h0m0 3h0m0 8h0m0 1h0m0 3h0m0 10h0m0 2h0m0 2h0m0 3h0m0 15h0m1-90h0m0 22h0m0 7h0m0 2h0m0 12h0m0 3h0m0 1h0m0 10h0m0 4h0m0 3h0m0 2h0m1-41h0m0 1h0m0 6h0m0 3h0m0 25h0m0 3h0m0 1h0m0 1h0m0 4h0m0 3h0m0 3h0m0 1h0m0 14h0m1-85h0m0 1h0m0 1h0m0 1h0m0 4h0m0 9h0m0 13h0m0 1h0m0 4h0m0 5h0m0 8h0m0 25h0m1-79h0m0 4h0m0 3h0m0 4h0m0 2h0m0 1h0m0 4h0m0 2h0m0 3h0m0 5h0m0 4h0m0 3h0m1-24h0m0 6h0m0 3h0m0 5h0m0 9h0m0 5h0m0 1h0m0 10h0m0 10h0m0 7h0m0 20h0m0 13h0m1-91h0m0 32h0m0 6h0m0 1h0m0 1h0m0 2h0m0 1h0m0 4h0m0 3h0m0 10h0m0 7h0m1-44h0m0 13h0m0 3h0m0 6h0m0 1h0m0 2h0m0 2h0m0 3h0m0 4h0m0 8h0m0 6h0m0 3h0m0 9h0m1-37h0m0 21h0m0 1h0m0 3h0m0 1h0m0 2h0m0 3h0m0 1h0m0 7h0m0 2h0m0 13h0m1-37h0m0 17h0m0 3h0m0 4h0m0 1h0m0 1h0m0 9h0m1-69h0m0 8h0m0 10h0m0 3h0m0 4h0m0 12h0m0 1h0m0 3h0m0 3h0m0 4h0m0 8h0m0 12h0m1-77h0m0 7h0m0 6h0m0 6h0m0 9h0m0 6h0m0 4h0m0 7h0m0 7h0m0 3h0m0 12h0m0 10h0m1-108h0m0 21h0m0 23h0m0 1h0m0 7h0m0 16h0m0 15h0m0 2h0m0 2h0m0 10h0m0 3h0m1-90h0m0 1h0m0 11h0m0 3h0m0 2h0m0 5h0m0 21h0m0 5h0m0 8h0m0 1h0m0 1h0m0 8h0m0 2h0m1-75h0m0 9h0m0 1h0m0 8h0m0 14h0m0 1h0m0 3h0m0 8h0m0 7h0m0 10h0m0 13h0m0 2h0m1-60h0m0 10h0m0 6h0m0 3h0m0 3h0m0 4h0m0 7h0m0 2h0m0 3h0m0 6h0m1-40h0m0 27h0m0 10h0m0 1h0m0 7h0m0 1h0m0 2h0m0 3h0m0 1h0m0 3h0m0 2h0m0 6h0m1-66h0m0 3h0m0 9h0m0 7h0m0 9h0m0 2h0m0 4h0m0 2h0m0 2h0m0 16h0m0 4h0m1-81h0m0 11h0m0 8h0m0 6h0m0 2h0m0 6h0m0 5h0m0 6h0m0 13h0m0 12h0m0 6h0m0 8h0m1-51h0m0 3h0m0 4h0m0 7h0m0 23h0m0 17h0m0 4h0m0 4h0m0 9h0m0 5h0m1-62h0m0 6h0m0 10h0m0 2h0m0 8h0m0 6h0m0 9h0m0 1h0m0 5h0m0 3h0m0 7h0m1-49h0m0 10h0m0 1h0m0 3h0m0 2h0m0 7h0m0 4h0m0 9h0m0 1h0m0 2h0m1-54h0m0 7h0m0 3h0m0 9h0m0 2h0m0 3h0m0 2h0m0 14h0m0 4h0m0 5h0m0 2h0m0 5h0m0 1h0m1-27h0m0 1h0m0 1h0m0 9h0m0 2h0m0 4h0m0 1h0m0 1h0m0 3h0m0 11h0m0 7h0m1-90h0m0 36h0m0 1h0m0 4h0m0 5h0m0 4h0m0 8h0m0 1h0m0 14h0m0 4h0m0 2h0m0 14h0m1-89h0m0 13h0m0 4h0m0 1h0m0 2h0m0 2h0m0 1h0m0 5h0m0 2h0m0 11h0m0 2h0m0 8h0m0 5h0m1-50h0m0 5h0m0 1h0m0 9h0m0 7h0m0 2h0m0 8h0m0 2h0m0 2h0m0 3h0m0 6h0m0 6h0m0 4h0m1-75h0m0 27h0m0 4h0m0 2h0m0 8h0m0 1h0m0 15h0m0 1h0m0 3h0m0 4h0m1-63h0m0 3h0m0 6h0m0 14h0m0 2h0m0 3h0m0 1h0m0 7h0m0 2h0m0 9h0m0 3h0m1-37h0m0 11h0m0 6h0m0 7h0m0 2h0m0 1h0m0 3h0m0 2h0m0 3h0m0 1h0m0 4h0m0 27h0m1-74h0m0 14h0m0 14h0m0 2h0m0 3h0m0 3h0m0 4h0m0 5h0m0 1h0m0 5h0m0 5h0m0 1h0m0 1h0m1-64h0m0 13h0m0 6h0m0 2h0m0 16h0m0 6h0m0 5h0m0 8h0m0 1h0m0 1h0m0 6h0m0 10h0m1-39h0m0 19h0m0 3h0m0 12h0m0 2h0m0 8h0m0 5h0m0 1h0m0 1h0m0 9h0m1-44h0m0 1h0m0 11h0m0 5h0m0 3h0m0 3h0m0 9h0m0 3h0m0 1h0m0 3h0m0 4h0m0 4h0m1-74h0m0 38h0m0 8h0m0 1h0m0 27h0m1-28h0m0 8h0m0 2h0m1-24h0m0 15h0m0 5h0m0 5h0m0 6h0m0 10h0m0 1h0m0 7h0m1-83h0m0 10h0m0 12h0m0 2h0m0 8h0m0 1h0m0 2h0m0 11h0m0 2h0m0 5h0m0 4h0m0 1h0m0 5h0m1-41h0m0 1h0m0 11h0m0 2h0m0 2h0m0 4h0m0 6h0m0 1h0m0 3h0m0 2h0m0 7h0m1-67h0m0 19h0m0 1h0m0 3h0m0 8h0m0 2h0m0 6h0m0 1h0m0 1h0m0 4h0m0 10h0m1-55h0m0 12h0m0 8h0m0 1h0m0 6h0m0 8h0m0 2h0m0 1h0m0 3h0m0 2h0m0 15h0m1-84h0m0 28h0m0 3h0m0 4h0m0 4h0m0 1h0m0 6h0m0 2h0m0 2h0m0 1h0m0 1h0m0 30h0m1-47h0m0 3h0m0 3h0m0 1h0m0 2h0m0 5h0m0 1h0m0 4h0m0 4h0m0 2h0m1-47h0m0 25h0m0 1h0m0 6h0m0 8h0m0 11h0m0 1h0m0 3h0m0 2h0m0 6h0m0 11h0m1-74h0m0 1h0m0 12h0m0 14h0m0 4h0m0 2h0m0 3h0m0 6h0m0 5h0m0 3h0m0 7h0m0 10h0m1-49h0m0 11h0m0 1h0m0 6h0m0 5h0m0 1h0m0 3h0m0 9h0m0 1h0m0 2h0m0 2h0m0 3h0m1-54h0m0 7h0m0 2h0m0 1h0m0 23h0m0 4h0m0 1h0m0 6h0m0 7h0m0 2h0m0 1h0m0 9h0m1-63h0m0 14h0m0 3h0m0 2h0m0 1h0m0 1h0m0 3h0m0 13h0m0 3h0m0 10h0m0 9h0m0 3h0m0 2h0m1-57h0m0 6h0m0 1h0m0 2h0m0 8h0m0 2h0m0 1h0m0 3h0m0 1h0m0 3h0m0 4h0m0 3h0m1-44h0m0 16h0m0 4h0m0 7h0m0 2h0m0 1h0m0 3h0m0 7h0m0 21h0m0 4h0m0 4h0m0 1h0m1-42h0m0 17h0m0 11h0m0 8h0m0 2h0m0 3h0m0 7h0m0 1h0m0 2h0m0 5h0m0 6h0m1-106h0m0 10h0m0 5h0m0 2h0m0 11h0m0 7h0m0 1h0m0 6h0m0 30h0m0 1h0m0 12h0m0 6h0m1-94h0m0 1h0m0 9h0m0 7h0m0 1h0m0 5h0m0 16h0m0 5h0m0 2h0m0 7h0m0 29h0m0 5h0m1-51h0m0 2h0m0 1h0m0 3h0m0 13h0m0 1h0m0 4h0m0 7h0m0 1h0m0 1h0m0 4h0m0 1h0m1-56h0m0 2h0m0 9h0m0 8h0m0 2h0m0 4h0m0 2h0m0 1h0m0 6h0m0 7h0m0 1h0m0 19h0m1-65h0m0 5h0m0 10h0m0 4h0m0 9h0m0 1h0m0 3h0m0 1h0m0 6h0m0 1h0m0 19h0m0 4h0m1-91h0m0 7h0m0 8h0m0 26h0m1-27h0m0 2h0m0 5h0m0 5h0m0 2h0m0 13h0m0 3h0m0 3h0m0 7h0m1-43h0m0 2h0m0 2h0m0 5h0m0 4h0m0 11h0m0 4h0m0 8h0m0 3h0m0 16h0m0 3h0m0 7h0m0 1h0m1-62h0m0 1h0m0 2h0m0 4h0m0 7h0m0 22h0m0 6h0m1-39h0m0 2h0m0 7h0m0 2h0m0 4h0m0 3h0m0 2h0m0 3h0m0 1h0m0 1h0m0 2h0m0 1h0m1-20h0m0 12h0m0 14h0m0 8h0m0 2h0m0 2h0m0 4h0m0 16h0m0 5h0m0 6h0m0 13h0m1-18h0m0 3h0m0 3h0m0 8h0m0 1h0m0 9h0m0 6h0m0 1h0m0 10h0m1-55h0m0 11h0m0 10h0m0 3h0m0 2h0m0 1h0m0 2h0m0 3h0m0 3h0m0 6h0m0 2h0m0 7h0m1-68h0m0 3h0m0 2h0m0 2h0m0 16h0m0 8h0m0 5h0m0 2h0m0 10h0m0 3h0m1-62h0m0 14h0m0 7h0m0 29h0m0 5h0m0 5h0m0 1h0m0 6h0m0 7h0m1-10h0m0 2h0m0 7h0m0 7h0m1-28h0m0 13h0m0 1h0m0 10h0m0 1h0m0 3h0m1-48h0m0 3h0m0 9h0m0 2h0m0 2h0m0 2h0m0 4h0m0 7h0m0 8h0m0 12h0m1-49h0m0 2h0m0 1h0m0 1h0m0 7h0m0 3h0m0 1h0m0 1h0m0 2h0m0 1h0m0 1h0m0 1h0m0 5h0m1-37h0m0 3h0m0 4h0m0 1h0m0 5h0m0 1h0m0 4h0m0 3h0m0 3h0m0 5h0m0 3h0m0 13h0m1-40h0m0 7h0m0 6h0m0 3h0m0 1h0m0 3h0m0 2h0m0 3h0m0 2h0m0 2h0m0 9h0m1-54h0m0 3h0m0 5h0m0 1h0m0 5h0m0 4h0m0 1h0m0 21h0m0 1h0m1-48h0m0 13h0m0 3h0m0 3h0m0 8h0m0 15h0m0 3h0m0 4h0m0 5h0m0 4h0m0 2h0m0 10h0m1-44h0m0 17h0m0 4h0m0 1h0m0 1h0m0 1h0m0 3h0m0 2h0m1-76h0m0 3h0m0 8h0m0 19h0m0 16h0m0 3h0m0 6h0m0 6h0m0 4h0m0 17h0m0 1h0m0 11h0m1-90h0m0 3h0m0 5h0m0 6h0m0 1h0m0 10h0m0 1h0m0 2h0m0 12h0m0 4h0m0 2h0m0 2h0m1-61h0m0 5h0m0 6h0m0 4h0m0 4h0m0 6h0m0 16h0m0 5h0m0 3h0m0 1h0m0 3h0m0 3h0m0 22h0m1-72h0m0 25h0m0 6h0m0 1h0m0 1h0m0 8h0m0 4h0m0 4h0m0 5h0m0 3h0m0 5h0m0 20h0m1-35h0m0 6h0m0 9h0m0 2h0m0 2h0m0 2h0m0 4h0m0 1h0m0 6h0m0 5h0m0 5h0m0 6h0m0 2h0m1-65h0m0 25h0m0 4h0m0 1h0m0 1h0m0 3h0m0 5h0m0 11h0m0 4h0m0 4h0m1-86h0m0 3h0m0 1h0m0 13h0m0 24h0m0 11h0m0 5h0m0 6h0m0 4h0m0 1h0m0 3h0m1-89h0m0 31h0m0 2h0m0 13h0m0 8h0m0 7h0m0 1h0m0 6h0m0 1h0m0 6h0m0 18h0m0 10h0m0 9h0m1-88h0m0 2h0m0 9h0m0 4h0m0 22h0m0 2h0m0 16h0m0 4h0m0 9h0m0 6h0m1-53h0m0 2h0m0 11h0m0 1h0m0 2h0m0 10h0m0 6h0m0 1h0m0 10h0m0 1h0m1-30h0m0 4h0m0 5h0m0 4h0m0 3h0m0 2h0m0 2h0m0 3h0m0 1h0m0 3h0m0 5h0m0 4h0m1-22h0m0 3h0m0 3h0m0 4h0m0 1h0m0 8h0m0 1h0m0 16h0m0 1h0m1-85h0m0 2h0m0 14h0m0 2h0m0 2h0m0 6h0m0 21h0m0 2h0m0 4h0m0 7h0m0 1h0m0 2h0m1-52h0m0 4h0m0 2h0m0 4h0m0 1h0m0 16h0m0 11h0m0 4h0m0 17h0m0 11h0m0 1h0m1-102h0m0 3h0m0 11h0m0 9h0m0 4h0m0 1h0m0 3h0m0 1h0m0 1h0m0 7h0m0 5h0m0 3h0m1-51h0m0 19h0m0 3h0m0 4h0m0 1h0m0 2h0m0 2h0m0 9h0m0 1h0m0 5h0m0 1h0m0 7h0m0 4h0m1-68h0m0 4h0m0 6h0m0 1h0m0 3h0m0 5h0m0 7h0m0 3h0m0 1h0m0 5h0m1-18h0m0 5h0m0 4h0m0 3h0m0 1h0m0 4h0m0 1h0m0 4h0m0 1h0m0 3h0m0 2h0m0 1h0m0 9h0m1-32h0m0 18h0m0 17h0m0 4h0m0 1h0m0 4h0m0 1h0m0 1h0m0 1h0m0 1h0m1-54h0m0 22h0m0 10h0m0 2h0m0 2h0m0 3h0m0 2h0m0 2h0m0 5h0m1-46h0m0 21h0m0 6h0m0 2h0m0 4h0m0 2h0m0 1h0m0 2h0m0 1h0m0 1h0m0 3h0m0 14h0m0 6h0m1-76h0m0 2h0m0 5h0m0 15h0m0 1h0m0 3h0m0 3h0m0 2h0m0 21h0m0 6h0m0 1h0m1-44h0m0 5h0m0 4h0m0 2h0m0 5h0m0 2h0m0 5h0m0 1h0m0 6h0m0 8h0m0 3h0m1-43h0m0 8h0m0 10h0m0 3h0m0 14h0m0 9h0m0 3h0m0 4h0m0 2h0m0 6h0m0 3h0m0 26h0m1-49h0m0 12h0m0 5h0m0 6h0m0 2h0m0 1h0m0 5h0m0 3h0m0 6h0m0 14h0m0 6h0m1-74h0m0 12h0m0 4h0m0 9h0m0 2h0m0 7h0m0 9h0m0 2h0m0 6h0m0 1h0m0 7h0m0 7h0m1-84h0m0 8h0m0 1h0m0 1h0m0 1h0m0 2h0m0 4h0m0 2h0m0 6h0m0 3h0m1-43h0m0 5h0m0 2h0m0 10h0m0 7h0m0 1h0m0 3h0m0 10h0m0 5h0m0 5h0m0 19h0m0 2h0m1-72h0m0 2h0m0 7h0m0 3h0m0 2h0m0 3h0m0 1h0m0 2h0m0 9h0m1-29h0m0 5h0m0 3h0m0 6h0m0 8h0m0 6h0m0 6h0m0 6h0m0 1h0m0 10h0m1-46h0m0 5h0m0 3h0m0 1h0m0 2h0m0 2h0m0 7h0m0 3h0m0 8h0m0 16h0m1-51h0m0 7h0m0 4h0m0 6h0m0 6h0m0 16h0m0 7h0m0 8h0m0 4h0m0 4h0m1-63h0m0 4h0m0 3h0m0 17h0m0 9h0m0 20h0m0 4h0m0 22h0m0 1h0m0 11h0m0 7h0m1-98h0m0 41h0m0 13h0m0 2h0m0 8h0m0 15h0m0 7h0m0 6h0m0 6h0m0 6h0m0 7h0m1-79h0m0 19h0m0 1h0m0 2h0m0 7h0m0 9h0m0 1h0m0 22h0m0 4h0m0 3h0m0 2h0m1-102h0m0 12h0m0 4h0m0 3h0m0 5h0m0 2h0m0 2h0m0 5h0m0 4h0m0 10h0m1-30h0m0 11h0m0 2h0m0 2h0m0 3h0m0 14h0m0 1h0m0 6h0m0 1h0m0 2h0m0 10h0m1-42h0m0 6h0m0 4h0m0 1h0m0 5h0m0 2h0m0 1h0m0 4h0m0 2h0m0 2h0m0 2h0m0 7h0m0 31h0m1-39h0m0 13h0m0 13h0m0 6h0m0 1h0m0 11h0m0 6h0m0 1h0m1-66h0m0 8h0m0 5h0m0 1h0m0 1h0m0 4h0m0 2h0m0 5h0m0 6h0m0 3h0m0 12h0m0 4h0m1-57h0m0 13h0m0 3h0m0 6h0m0 2h0m0 2h0m0 4h0m0 3h0m0 4h0m0 1h0m0 1h0m0 4h0m0 13h0m1-55h0m0 25h0m0 4h0m0 7h0m0 12h0m0 5h0m0 4h0m0 4h0m0 8h0m0 4h0m0 1h0m1-78h0m0 13h0m0 7h0m0 4h0m0 11h0m0 3h0m0 1h0m0 3h0m0 14h0m0 2h0m0 28h0m1-70h0m0 9h0m0 15h0m0 1h0m0 3h0m0 1h0m0 6h0m0 3h0m0 4h0m0 2h0m0 6h0m1-64h0m0 14h0m0 4h0m0 7h0m0 13h0m0 8h0m0 3h0m0 3h0m0 2h0m0 3h0m0 2h0m0 1h0m0 3h0m1-82h0m0 9h0m0 12h0m0 1h0m0 3h0m0 3h0m0 9h0m0 4h0m0 2h0m0 1h0m0 8h0m0 40h0m1-81h0m0 7h0m0 3h0m0 4h0m0 2h0m0 7h0m0 1h0m0 3h0m0 1h0m0 5h0m0 8h0m0 8h0m1-59h0m0 34h0m0 6h0m0 1h0m0 1h0m0 14h0m0 4h0m0 1h0m0 4h0m0 3h0m0 1h0m0 1h0m0 19h0m1-93h0m0 59h0m0 8h0m0 1h0m0 2h0m0 2h0m0 2h0m0 1h0m0 2h0m0 9h0m0 14h0m1-77h0m0 3h0m0 1h0m0 26h0m0 3h0m0 3h0m0 6h0m0 1h0m0 9h0m0 1h0m0 12h0m0 10h0m1-31h0m0 8h0m0 12h0m0 4h0m0 8h0m1-44h0m0 23h0m0 12h0m0 1h0m0 4h0m0 4h0m0 2h0m0 3h0m1-22h0m0 3h0m0 11h0m0 4h0m1-42h0m0 2h0m0 16h0m0 3h0m0 9h0m0 10h0m1-72h0m0 2h0m0 3h0m0 16h0m0 19h0m0 4h0m0 7h0m0 2h0m0 10h0m0 4h0m0 7h0m1-70h0m0 9h0m0 1h0m0 4h0m0 6h0m0 2h0m0 1h0m0 1h0m0 1h0m0 5h0m0 2h0m0 1h0m0 8h0m1-20h0m0 5h0m0 3h0m0 17h0m0 3h0m0 4h0m2-16h0m0 34h0m1-43h0m0 13h0m0 5h0m0 1h0m0 5h0m0 3h0m0 2h0m0 9h0m0 1h0m0 4h0m0 2h0m1-57h0m0 7h0m0 12h0m0 5h0m0 12h0m0 1h0m0 1h0m0 1h0m0 2h0m0 1h0m0 9h0m1-60h0m0 6h0m0 6h0m0 1h0m0 3h0m0 9h0m0 6h0m0 1h0m0 5h0m0 1h0m0 2h0m0 4h0m0 17h0m1-50h0m0 2h0m0 2h0m0 6h0m0 5h0m0 3h0m0 4h0m0 3h0m0 4h0m0 2h0m0 9h0m1-63h0m0 25h0m0 1h0m0 2h0m0 5h0m0 10h0m0 1h0m0 3h0m0 4h0m0 1h0m0 9h0m1-56h0m0 24h0m0 8h0m0 15h0m0 16h0m0 3h0m0 2h0m0 5h0m0 4h0m1-124h0m0 8h0m0 53h0m0 12h0m0 3h0m0 5h0m0 3h0m0 1h0m0 1h0m0 4h0m0 2h0m0 12h0m0 14h0m1-115h0m0 23h0m0 29h0m0 7h0m0 2h0m0 2h0m0 4h0m0 6h0m0 1h0m0 13h0m0 3h0m0 5h0m0 5h0m1-87h0m0 21h0m0 22h0m0 5h0m0 3h0m0 3h0m0 13h0m0 1h0m0 5h0m0 2h0m0 11h0m0 17h0m1-67h0m0 5h0m0 4h0m0 6h0m0 2h0m0 1h0m0 3h0m0 5h0m0 11h0m0 19h0m0 1h0m1-67h0m0 2h0m0 4h0m0 7h0m0 11h0m0 8h0m0 3h0m0 4h0m0 9h0m0 12h0m0 9h0m1-60h0m0 7h0m0 15h0m0 15h0m0 2h0m0 2h0m0 5h0m0 1h0m0 9h0m0 5h0m0 1h0m0 5h0m1-105h0m0 12h0m0 30h0m0 3h0m0 3h0m0 3h0m0 11h0m0 11h0m0 1h0m0 3h0m0 3h0m0 12h0m0 3h0m1-65h0m0 1h0m0 10h0m0 5h0m0 1h0m0 3h0m0 1h0m0 4h0m0 5h0m0 1h0m0 12h0m1-41h0m0 10h0m0 8h0m0 2h0m0 1h0m0 1h0m0 6h0m0 2h0m0 10h0m0 15h0m1-61h0m0 8h0m0 1h0m0 10h0m0 2h0m0 2h0m0 4h0m0 3h0m0 6h0m0 3h0m0 8h0m1-63h0m0 9h0m0 7h0m0 1h0m0 26h0m0 11h0m0 2h0m0 4h0m0 3h0m0 1h0m0 2h0m0 2h0m1-69h0m0 14h0m0 8h0m0 12h0m0 7h0m0 9h0m0 6h0m0 16h0m0 17h0m0 13h0m1-111h0m0 29h0m0 21h0m0 4h0m0 9h0m0 1h0m0 3h0m0 4h0m0 8h0m0 12h0m0 2h0m1-81h0m0 27h0m0 1h0m0 2h0m0 3h0m0 8h0m0 12h0m1-73h0m0 6h0m0 4h0m0 3h0m0 12h0m0 11h0m1-36h0m0 17h0m0 2h0m0 3h0m0 1h0m0 4h0m0 1h0m0 4h0m0 21h0m1-45h0m0 6h0m0 4h0m0 5h0m0 3h0m0 6h0m0 2h0m0 5h0m0 9h0m1-44h0m0 2h0m0 2h0m0 8h0m0 3h0m0 1h0m0 9h0m1-32h0m0 1h0m0 7h0m0 2h0m0 2h0m0 5h0m0 2h0m0 3h0m0 1h0m0 1h0m0 1h0m0 11h0m1-31h0m0 2h0m0 3h0m0 5h0m0 7h0m0 1h0m0 3h0m0 1h0m0 3h0m0 9h0m0 12h0m0 5h0m1-52h0m0 20h0m0 11h0m0 2h0m0 5h0m0 1h0m0 2h0m0 6h0m0 19h0m1-41h0m0 13h0m0 7h0m0 5h0m0 1h0m0 4h0m0 1h0m0 19h0m0 5h0m0 4h0m0 2h0m0 2h0m0 3h0m1-96h0m0 7h0m0 1h0m0 6h0m0 1h0m0 3h0m0 1h0m0 3h0m0 28h0m1-48h0m0 4h0m0 10h0m0 2h0m0 1h0m0 1h0m0 12h0m0 1h0m0 1h0m0 5h0m0 10h0m0 12h0m1-28h0m0 4h0m0 2h0m0 2h0m0 3h0m0 1h0m0 9h0m0 2h0m0 14h0m0 7h0m0 5h0m1-70h0m0 37h0m0 12h0m0 6h0m0 3h0m0 6h0m0 4h0m0 5h0m0 1h0m0 5h0m0 16h0m1-100h0m0 14h0m0 17h0m0 4h0m0 1h0m0 6h0m0 2h0m0 8h0m1-49h0m0 7h0m0 5h0m0 9h0m0 12h0m0 2h0m0 1h0m0 1h0m0 12h0m0 11h0m0 4h0m0 7h0m1-27h0m0 6h0m0 1h0m0 23h0m0 5h0m0 3h0m0 3h0m0 10h0m0 7h0m0 5h0m1-30h0m0 5h0m0 6h0m0 2h0m0 6h0m0 5h0m0 15h0m1-108h0m0 25h0m0 20h0m0 9h0m0 3h0m0 4h0m0 3h0m0 4h0m0 7h0m0 4h0m0 8h0m1-26h0m0 7h0m0 4h0m0 7h0m0 2h0m0 6h0m0 1h0m0 7h0m0 3h0m0 1h0m0 3h0m1-98h0m0 1h0m0 12h0m0 7h0m0 21h0m0 22h0m0 1h0m0 4h0m0 6h0m0 3h0m0 4h0m1-47h0m0 9h0m0 3h0m0 3h0m0 5h0m0 3h0m0 5h0m0 4h0m0 1h0m0 1h0m0 7h0m0 2h0m0 19h0m1-64h0m0 3h0m0 3h0m0 13h0m0 12h0m0 2h0m0 5h0m0 8h0m0 5h0m0 9h0m0 6h0m1-115h0m0 44h0m0 13h0m0 2h0m0 9h0m0 3h0m0 2h0m0 12h0m0 9h0m0 1h0m0 2h0m0 11h0m1-108h0m0 8h0m0 2h0m0 4h0m0 1h0m0 4h0m0 1h0m0 1h0m0 3h0m0 13h0m1-35h0m0 9h0m0 4h0m0 3h0m0 3h0m0 3h0m0 7h0m0 3h0m0 3h0m0 10h0m0 9h0m1-55h0m0 3h0m0 3h0m0 2h0m0 2h0m0 1h0m0 64h0m0 12h0m1-51h0m0 32h0m0 14h0m0 11h0m0 10h0m0 5h0m0 3h0m0 1h0m0 1h0m0 3h0m1-67h0m0 7h0m0 3h0m0 1h0m0 3h0m0 6h0m0 3h0m0 5h0m0 3h0m0 1h0m0 4h0m1-41h0m0 2h0m0 2h0m0 6h0m0 9h0m0 1h0m0 7h0m0 3h0m0 17h0m1-80h0m0 10h0m0 5h0m0 5h0m0 3h0m0 1h0m0 2h0m0 1h0m0 1h0m0 3h0m0 11h0m0 9h0m1-44h0m0 13h0m0 3h0m0 2h0m0 1h0m0 4h0m0 2h0m0 5h0m0 9h0m0 3h0m0 1h0m0 4h0m1-59h0m0 16h0m0 2h0m0 7h0m0 1h0m0 3h0m0 9h0m0 4h0m0 2h0m0 9h0m0 5h0m0 4h0m1-60h0m0 18h0m0 1h0m0 2h0m0 5h0m0 3h0m0 5h0m0 10h0m0 4h0m1-59h0m0 6h0m0 28h0m1-17h0m0 2h0m0 2h0m0 2h0m0 4h0m0 8h0m0 5h0m0 2h0m0 5h0m0 10h0m0 11h0m0 1h0m0 8h0m1-30h0m0 6h0m0 4h0m0 4h0m0 3h0m0 5h0m0 2h0m0 3h0m0 1h0m0 2h0m0 2h0m1-44h0m0 14h0m0 3h0m0 4h0m0 1h0m0 2h0m0 2h0m0 3h0m0 1h0m0 1h0m0 1h0m0 10h0m0 6h0m1-83h0m0 11h0m0 14h0m0 5h0m0 14h0m0 1h0m0 8h0m0 4h0m0 5h0m0 6h0m0 5h0m1-77h0m0 9h0m0 7h0m0 6h0m0 7h0m0 2h0m0 3h0m0 5h0m0 5h0m0 4h0m0 47h0m1-75h0m0 4h0m0 18h0m0 2h0m0 6h0m0 6h0m0 1h0m0 8h0m0 1h0m0 8h0m1-54h0m0 20h0m0 4h0m0 10h0m0 6h0m0 2h0m0 2h0m0 2h0m0 7h0m0 8h0m0 6h0m0 10h0m1-90h0m0 10h0m0 9h0m0 3h0m0 4h0m0 1h0m0 2h0m0 2h0m0 18h0m0 14h0m0 1h0m1-61h0m0 20h0m0 45h0m0 3h0m0 8h0m0 4h0m0 1h0m0 3h0m0 11h0m0 12h0m1-36h0m0 6h0m0 8h0m0 5h0m0 11h0m0 2h0m0 1h0m1-72h0m0 17h0m0 1h0m0 2h0m0 4h0m0 3h0m0 4h0m0 3h0m0 1h0m0 6h0m0 2h0m0 2h0m0 7h0m1-52h0m0 35h0m0 1h0m0 4h0m0 1h0m0 1h0m0 4h0m0 2h0m0 3h0m0 12h0m1-41h0m0 8h0m0 3h0m0 6h0m0 2h0m0 3h0m0 1h0m0 2h0m0 2h0m0 7h0m1-43h0m0 1h0m0 3h0m0 4h0m0 2h0m0 1h0m0 1h0m0 11h0m0 4h0m0 8h0m0 3h0m0 5h0m0 7h0m1-73h0m0 5h0m0 10h0m0 4h0m0 4h0m0 5h0m0 2h0m0 2h0m0 2h0m0 3h0m0 6h0m0 11h0m0 4h0m1-46h0m0 6h0m0 4h0m0 1h0m0 6h0m0 1h0m0 15h0m0 9h0m0 4h0m0 2h0m0 9h0m0 9h0m1-75h0m0 3h0m0 5h0m0 3h0m0 1h0m0 4h0m0 1h0m0 3h0m0 6h0m0 6h0m0 2h0m0 3h0m1-26h0m0 2h0m0 6h0m0 1h0m0 1h0m0 2h0m0 4h0m0 2h0m0 4h0m0 3h0m0 3h0m0 1h0m1-56h0m0 30h0m0 3h0m0 1h0m0 1h0m0 9h0m0 5h0m0 2h0m0 7h0m0 1h0m0 5h0m0 10h0m1-77h0m0 15h0m0 5h0m0 2h0m0 2h0m0 1h0m0 9h0m0 7h0m0 4h0m0 13h0m0 3h0m1-23h0m0 3h0m0 10h0m0 1h0m0 13h0m0 5h0m0 2h0m0 7h0m0 1h0m0 5h0m0 2h0m0 1h0m0 10h0m1-104h0m0 3h0m0 5h0m0 8h0m0 3h0m0 14h0m0 13h0m0 1h0m0 26h0m0 11h0m0 2h0m1-82h0m0 9h0m0 3h0m0 2h0m0 12h0m0 1h0m0 9h0m0 2h0m0 26h0m0 7h0m1-56h0m0 3h0m0 30h0m0 7h0m0 4h0m0 1h0m0 7h0m0 3h0m0 6h0m0 13h0m0 15h0m1-48h0m0 8h0m0 8h0m0 10h0m0 8h0m0 2h0m0 2h0m0 3h0m0 1h0m0 4h0m0 4h0m1-47h0m0 6h0m0 1h0m0 2h0m0 5h0m0 2h0m0 2h0m0 5h0m0 2h0m0 2h0m0 3h0m0 3h0m1-32h0m0 13h0m0 16h0m0 4h0m0 2h0m0 4h0m1-85h0m0 9h0m0 15h0m0 1h0m0 1h0m0 1h0m0 2h0m0 5h0m0 4h0m0 1h0m0 2h0m0 26h0m0 2h0m1-68h0m0 1h0m0 10h0m0 11h0m0 2h0m0 3h0m0 1h0m0 3h0m0 1h0m0 4h0m0 2h0m0 1h0m0 19h0m1-40h0m0 4h0m0 2h0m0 2h0m0 7h0m0 1h0m0 2h0m0 6h0m0 1h0m0 9h0m0 16h0m1-81h0m0 6h0m0 18h0m0 2h0m0 2h0m0 3h0m0 3h0m0 5h0m0 7h0m0 5h0m0 7h0m0 19h0m1-89h0m0 11h0m0 2h0m0 1h0m0 5h0m0 5h0m0 4h0m0 19h0m0 4h0m0 3h0m0 13h0m0 35h0m1-78h0m0 25h0m0 12h0m0 3h0m0 3h0m0 21h0m0 4h0m0 6h0m0 1h0m0 10h0m1-109h0m0 4h0m0 23h0m0 1h0m0 3h0m0 6h0m0 1h0m0 7h0m0 1h0m1-42h0m0 6h0m0 3h0m0 6h0m0 4h0m0 3h0m0 16h0m0 1h0m0 8h0m0 8h0m0 6h0m1-41h0m0 3h0m0 7h0m0 2h0m0 6h0m0 2h0m0 14h0m0 4h0m0 3h0m0 3h0m0 1h0m0 7h0m0 2h0m1-53h0m0 2h0m0 3h0m0 2h0m0 3h0m0 3h0m0 15h0m0 2h0m0 3h0m0 2h0m0 1h0m0 8h0m0 5h0m1-43h0m0 6h0m0 13h0m0 2h0m0 6h0m0 1h0m0 1h0m0 10h0m0 1h0m0 5h0m0 2h0m0 6h0m1-45h0m0 4h0m0 7h0m0 16h0m0 7h0m0 1h0m0 5h0m0 9h0m0 4h0m0 5h0m0 6h0m0 12h0m1-65h0m0 4h0m0 4h0m0 2h0m0 5h0m0 8h0m0 2h0m0 6h0m0 5h0m0 8h0m0 3h0m1-33h0m0 5h0m0 2h0m0 6h0m0 3h0m0 11h0m0 1h0m0 10h0m0 3h0m0 1h0m0 5h0m0 2h0m1-51h0m0 4h0m0 9h0m0 10h0m0 1h0m0 2h0m0 3h0m0 1h0m0 4h0m0 5h0m1-20h0m0 10h0m0 1h0m0 4h0m0 1h0m0 8h0m0 3h0m0 2h0m0 5h0m0 2h0m1-75h0m0 4h0m0 8h0m0 3h0m0 5h0m0 7h0m0 4h0m0 2h0m0 12h0m0 1h0m0 1h0m0 21h0m1-104h0m0 10h0m0 2h0m0 5h0m0 6h0m0 7h0m0 2h0m0 1h0m0 1h0m0 2h0m0 21h0m0 8h0m1-46h0m0 9h0m0 2h0m0 1h0m0 12h0m0 2h0m0 1h0m0 1h0m0 6h0m0 2h0m0 3h0m0 1h0m1-60h0m0 1h0m0 12h0m0 20h0m0 3h0m0 5h0m0 14h0m0 3h0m0 15h0m0 3h0m0 4h0m1-79h0m0 29h0m1-22h0m0 1h0m0 6h0m0 7h0m0 3h0m0 4h0m0 4h0m0 4h0m0 17h0m0 9h0m0 3h0m0 2h0m0 9h0m1-69h0m0 14h0m0 1h0m0 10h0m0 1h0m0 1h0m0 1h0m0 12h0m0 10h0m0 5h0m0 5h0m0 11h0m1-61h0m0 18h0m0 6h0m0 1h0m0 3h0m0 2h0m0 3h0m0 2h0m0 4h0m0 3h0m0 26h0m1-48h0m0 3h0m0 8h0m0 9h0m0 1h0m0 10h0m0 4h0m0 11h0m0 4h0m0 7h0m0 16h0m0 6h0m1-85h0m0 3h0m0 1h0m0 3h0m0 11h0m0 19h0m0 3h0m0 12h0m0 7h0m0 6h0m0 1h0m0 6h0m0 7h0m1-92h0m0 27h0m0 2h0m0 3h0m0 1h0m0 1h0m0 1h0m0 10h0m0 10h0m0 3h0m0 2h0m0 11h0m1-12h0m0 4h0m0 1h0m0 1h0m0 9h0m0 17h0m1-18h0m0 5h0m0 6h0m0 4h0m0 2h0m1-70h0m0 5h0m0 9h0m0 5h0m0 2h0m0 7h0m0 5h0m0 13h0m0 4h0m0 16h0m0 4h0m1-101h0m0 4h0m0 9h0m0 5h0m0 5h0m0 1h0m0 3h0m0 17h0m0 14h0m0 5h0m0 11h0m1-85h0m0 11h0m0 1h0m0 3h0m0 3h0m0 3h0m0 2h0m0 2h0m0 3h0m0 4h0m0 2h0m0 14h0m1-46h0m0 11h0m0 13h0m0 4h0m0 27h0m0 2h0m0 1h0m0 4h0m0 9h0m0 9h0m0 3h0m0 15h0m0 4h0m1-58h0m0 37h0m0 6h0m0 8h0m0 15h0m1-63h0m0 6h0m0 2h0m0 5h0m0 2h0m0 18h0m0 9h0m0 8h0m0 11h0m0 4h0m1-83h0m0 6h0m0 6h0m0 12h0m0 2h0m0 3h0m0 1h0m0 2h0m0 4h0m0 1h0m0 11h0m0 7h0m0 2h0m1-64h0m0 3h0m0 3h0m0 10h0m0 5h0m0 4h0m0 1h0m0 1h0m0 8h0m0 2h0m0 2h0m0 1h0m0 7h0m1-38h0m0 4h0m0 2h0m0 8h0m0 10h0m0 3h0m0 1h0m0 6h0m0 4h0m0 10h0m0 1h0m0 3h0m1-68h0m0 20h0m0 6h0m0 2h0m0 3h0m0 14h0m0 4h0m0 1h0m0 1h0m0 1h0m0 1h0m0 6h0m1-78h0m0 6h0m0 6h0m0 2h0m0 1h0m0 1h0m0 7h0m0 1h0m0 3h0m0 2h0m0 2h0m0 1h0m0 20h0m1-24h0m0 3h0m0 1h0m0 3h0m0 6h0m0 1h0m0 1h0m0 3h0m0 8h0m0 1h0m0 4h0m0 2h0m1-24h0m0 4h0m0 1h0m0 5h0m0 1h0m0 4h0m0 5h0m0 4h0m0 3h0m0 2h0m0 8h0m0 17h0m1-59h0m0 3h0m0 13h0m0 2h0m0 2h0m0 2h0m0 1h0m0 3h0m0 3h0m0 13h0m0 2h0m1-50h0m0 6h0m0 2h0m0 17h0m0 9h0m0 1h0m0 1h0m0 7h0m0 3h0m0 1h0m0 8h0m1-75h0m0 12h0m0 3h0m0 9h0m0 4h0m0 9h0m0 2h0m0 5h0m0 2h0m0 2h0m0 40h0m1-57h0m0 13h0m0 5h0m0 24h0m0 1h0m0 1h0m0 5h0m0 10h0m0 4h0m0 5h0m0 2h0m1-72h0m0 5h0m0 2h0m0 3h0m0 9h0m0 1h0m0 6h0m0 8h0m0 5h0m0 2h0m1-38h0m0 2h0m0 2h0m0 7h0m0 3h0m0 4h0m0 2h0m0 1h0m0 2h0m0 3h0m0 1h0m1-41h0m0 7h0m0 12h0m0 4h0m0 2h0m0 4h0m0 10h0m0 7h0m0 1h0m0 1h0m0 3h0m0 1h0m1-38h0m0 18h0m0 1h0m0 1h0m0 1h0m0 14h0m0 7h0m0 1h0m0 2h0m0 1h0m1 10h0m0 1h0m0 1h0m0 5h0m0 1h0m0 5h0m0 3h0m0 3h0m0 8h0m1-93h0m0 4h0m0 3h0m0 8h0m0 4h0m0 11h0m0 8h0m0 3h0m0 5h0m0 9h0m0 2h0m0 3h0m1-52h0m0 17h0m0 6h0m0 3h0m0 18h0m0 2h0m0 7h0m0 1h0m0 6h0m0 2h0m0 14h0m1-72h0m0 3h0m0 9h0m0 1h0m0 3h0m0 1h0m0 4h0m0 6h0m0 4h0m0 4h0m0 25h0m1-48h0m0 10h0m0 1h0m0 3h0m0 6h0m0 1h0m0 1h0m0 7h0m0 6h0m0 4h0m0 2h0m0 1h0m0 3h0m1-60h0m0 16h0m0 3h0m0 1h0m0 1h0m0 14h0m0 1h0m0 2h0m0 8h0m0 9h0m0 4h0m0 3h0m0 1h0m1-95h0m0 17h0m0 28h0m0 5h0m0 6h0m0 3h0m0 14h0m0 7h0m0 5h0m0 6h0m0 13h0m1-89h0m0 12h0m0 6h0m0 6h0m0 2h0m0 1h0m0 9h0m0 5h0m0 3h0m0 1h0m1-25h0m0 1h0m0 2h0m0 4h0m0 4h0m0 2h0m0 1h0m0 2h0m0 1h0m0 6h0m0 1h0m0 7h0m0 4h0m1-54h0m0 3h0m0 9h0m0 5h0m0 4h0m0 2h0m0 8h0m0 5h0m0 2h0m0 3h0m0 3h0m0 4h0m0 19h0m1-87h0m0 16h0m0 8h0m0 9h0m0 3h0m0 8h0m0 6h0m0 14h0m0 20h0m0 4h0m0 3h0m1-42h0m0 4h0m0 2h0m0 5h0m0 3h0m0 1h0m0 1h0m0 2h0m0 7h0m0 1h0m0 2h0m0 2h0m0 1h0m1-73h0m0 3h0m0 1h0m0 6h0m0 2h0m0 3h0m0 6h0m0 3h0m0 3h0m0 1h0m0 6h0m0 20h0m0 1h0m1-63h0m0 19h0m0 13h0m0 12h0m0 2h0m0 1h0m0 4h0m0 1h0m0 10h0m0 1h0m0 8h0m0 3h0m0 4h0m1-72h0m0 13h0m0 5h0m0 5h0m0 4h0m0 5h0m0 2h0m0 4h0m0 4h0m0 32h0m1-67h0m0 4h0m0 13h0m0 21h0m0 2h0m0 1h0m0 6h0m0 5h0m0 3h0m0 1h0m0 1h0m1-45h0m0 9h0m0 16h0m0 2h0m0 1h0m0 7h0m0 4h0m0 5h0m0 3h0m0 2h0m0 11h0m0 12h0m1-28h0m0 12h0m0 2h0m0 1h0m0 6h0m0 4h0m1-91h0m0 5h0m0 10h0m0 1h0m0 10h0m0 12h0m0 4h0m0 14h0m0 9h0m0 10h0m0 11h0m0 2h0m0 5h0m1-86h0m0 3h0m0 1h0m0 13h0m0 3h0m0 10h0m0 4h0m0 6h0m0 4h0m0 5h0m0 6h0m0 2h0m0 1h0m1-67h0m0 3h0m0 6h0m0 5h0m0 1h0m0 1h0m0 9h0m0 4h0m0 4h0m0 22h0m0 19h0m0 13h0m1-57h0m0 7h0m0 4h0m0 3h0m0 8h0m0 51h0m1-67h0m0 1h0m0 22h0m0 3h0m0 8h0m0 3h0m0 3h0m0 3h0m0 4h0m0 10h0m0 1h0m0 12h0m0 5h0m1-81h0m0 1h0m0 20h0m0 2h0m0 4h0m0 1h0m0 3h0m0 6h0m0 3h0m0 7h0m0 7h0m0 3h0m0 15h0m1-78h0m0 37h0m0 4h0m0 1h0m0 1h0m0 3h0m0 4h0m0 2h0m0 8h0m0 17h0m1-63h0m0 12h0m0 11h0m0 12h0m0 3h0m0 6h0m0 21h0m0 6h0m0 6h0m0 3h0m1-92h0m0 24h0m0 2h0m0 6h0m0 2h0m0 23h0m0 3h0m0 2h0m0 12h0m0 11h0m0 2h0m1-55h0m0 8h0m0 4h0m0 2h0m0 2h0m0 5h0m0 7h0m0 4h0m0 4h0m0 1h0m0 1h0m0 15h0m1-85h0m0 21h0m0 4h0m0 4h0m0 7h0m0 1h0m0 1h0m0 2h0m0 4h0m0 10h0m0 1h0m0 2h0m0 6h0m1-63h0m0 6h0m0 6h0m0 1h0m0 2h0m0 4h0m0 11h0m0 2h0m0 1h0m0 3h0m0 2h0m0 9h0m0 7h0m1-79h0m0 4h0m0 2h0m0 5h0m0 1h0m0 5h0m0 4h0m0 2h0m0 7h0m0 18h0m0 6h0m1-44h0m0 8h0m0 9h0m0 5h0m0 14h0m0 1h0m0 2h0m0 1h0m0 2h0m0 1h0m0 1h0m0 7h0m1-44h0m0 7h0m0 8h0m0 19h0m0 9h0m0 23h0m0 6h0m0 14h0m1-102h0m0 25h0m0 1h0m0 1h0m0 1h0m0 9h0m0 9h0m0 10h0m0 1h0m0 6h0m0 5h0m0 10h0m0 15h0m1-95h0m0 8h0m0 13h0m0 12h0m0 13h0m0 1h0m0 7h0m0 4h0m0 4h0m0 5h0m0 6h0m0 2h0m1-72h0m0 2h0m0 5h0m0 1h0m0 1h0m0 5h0m0 5h0m0 1h0m0 2h0m0 13h0m0 1h0m0 1h0m0 4h0m1-15h0m0 19h0m0 4h0m0 2h0m0 1h0m0 4h0m0 10h0m0 1h0m0 4h0m0 2h0m0 5h0m0 27h0m1-74h0m0 1h0m0 17h0m0 3h0m0 4h0m0 3h0m0 3h0m0 5h0m0 2h0m0 5h0m0 4h0m1-61h0m0 9h0m0 20h0m0 1h0m0 1h0m0 1h0m0 3h0m0 11h0m0 14h0m0 1h0m0 3h0m0 20h0m1-61h0m0 2h0m0 26h0m0 3h0m0 18h0m0 6h0m0 7h0m0 1h0m0 2h0m0 3h0m1-29h0m0 1h0m0 3h0m0 2h0m0 3h0m0 1h0m0 2h0m0 7h0m0 1h0m0 5h0m0 3h0m1-29h0m0 1h0m0 1h0m0 16h0m0 1h0m0 2h0m0 1h0m0 1h0m0 1h0m0 2h0m0 5h0m1-46h0m0 2h0m0 3h0m0 1h0m0 6h0m0 11h0m0 3h0m0 3h0m0 3h0m0 9h0m0 8h0m1-51h0m0 13h0m0 3h0m0 3h0m0 5h0m0 8h0m0 1h0m0 5h0m0 1h0m0 3h0m1-72h0m0 13h0m0 13h0m0 7h0m0 14h0m0 4h0m0 7h0m0 9h0m0 4h0m0 3h0m0 3h0m1-93h0m0 2h0m0 13h0m0 21h0m0 2h0m0 5h0m0 8h0m0 17h0m0 3h0m0 7h0m0 7h0m0 2h0m0 12h0m1-71h0m0 17h0m0 6h0m0 13h0m0 5h0m0 2h0m0 4h0m0 7h0m0 1h0m0 13h0m0 9h0m1-99h0m0 22h0m0 20h0m0 5h0m0 2h0m0 1h0m0 6h0m0 4h0m0 6h0m0 13h0m1-81h0m0 11h0m0 25h0m0 10h0m0 19h0m0 10h0m0 5h0m0 2h0m1-42h0m0 19h0m0 2h0m0 1h0m0 4h0m0 6h0m0 11h0m0 1h0m1-54h0m0 4h0m0 12h0m0 16h0m0 2h0m0 7h0m0 3h0m0 1h0m0 3h0m0 1h0m0 1h0m1-59h0m0 21h0m0 11h0m0 1h0m0 3h0m0 10h0m0 1h0m0 6h0m0 15h0m1-87h0m0 7h0m0 7h0m0 6h0m0 4h0m0 5h0m0 18h0m0 2h0m0 8h0m0 12h0m0 4h0m0 2h0m0 1h0m1-91h0m0 2h0m0 7h0m0 2h0m0 2h0m0 8h0m0 3h0m0 10h0m0 4h0m0 3h0m0 11h0m0 10h0m1-62h0m0 7h0m0 9h0m0 1h0m0 6h0m0 2h0m0 1h0m0 1h0m0 2h0m0 1h0m0 4h0m0 1h0m0 22h0m1-59h0m0 3h0m0 5h0m0 2h0m0 4h0m0 1h0m0 18h0m0 3h0m0 2h0m0 15h0m0 8h0m0 22h0m1-43h0m0 3h0m0 2h0m0 18h0m0 5h0m0 5h0m0 12h0m0 2h0m0 12h0m0 5h0m1-51h0m0 12h0m0 14h0m0 1h0m0 3h0m0 5h0m0 8h0m0 7h0m0 3h0m1-23h0m0 12h0m0 1h0m0 6h0m0 5h0m1-43h0m0 7h0m0 3h0m0 6h0m0 1h0m0 4h0m0 12h0m0 7h0m0 2h0m0 2h0m1-46h0m0 4h0m0 9h0m0 3h0m0 1h0m0 1h0m0 1h0m0 6h0m0 7h0m0 7h0m1-48h0m0 3h0m0 8h0m0 2h0m0 3h0m0 2h0m0 2h0m0 2h0m0 2h0m0 2h0m0 6h0m0 2h0m1-70h0m0 16h0m0 2h0m0 5h0m0 1h0m0 3h0m0 3h0m0 5h0m0 2h0m0 8h0m0 19h0m1-50h0m0 1h0m0 5h0m0 3h0m0 4h0m0 10h0m0 2h0m0 2h0m0 3h0m0 15h0m0 3h0m1-72h0m0 4h0m0 3h0m0 10h0m0 2h0m0 2h0m0 7h0m0 1h0m0 4h0m0 3h0m0 5h0m0 10h0m1-41h0m0 4h0m0 5h0m0 4h0m0 6h0m0 15h0m0 2h0m0 2h0m0 5h0m0 6h0m0 10h0m0 2h0m1-40h0m0 1h0m0 1h0m0 1h0m0 6h0m0 2h0m0 1h0m0 4h0m0 2h0m0 5h0m0 9h0m1-38h0m0 4h0m0 2h0m0 7h0m0 6h0m0 2h0m0 1h0m0 8h0m0 6h0m0 1h0m0 2h0m0 6h0m0 4h0m1-54h0m0 1h0m0 5h0m0 8h0m0 1h0m0 1h0m0 1h0m0 2h0m0 1h0m0 10h0m0 2h0m0 5h0m1-42h0m0 13h0m0 1h0m0 4h0m0 2h0m0 2h0m0 2h0m0 5h0m0 2h0m0 2h0m0 5h0m0 2h0m1-22h0m0 3h0m0 10h0m0 1h0m0 9h0m0 6h0m0 2h0m0 2h0m0 2h0m0 9h0m0 1h0m0 3h0m0 11h0m1-96h0m0 25h0m0 9h0m0 2h0m0 2h0m0 2h0m0 9h0m0 1h0m0 1h0m0 6h0m0 6h0m0 2h0m1-55h0m0 4h0m0 9h0m0 10h0m0 2h0m0 7h0m0 1h0m0 12h0m0 17h0m0 6h0m1-73h0m0 21h0m0 2h0m0 3h0m0 1h0m0 5h0m0 6h0m0 10h0m0 6h0m0 17h0m1-42h0m0 7h0m0 2h0m0 3h0m0 1h0m0 6h0m0 1h0m0 2h0m0 2h0m0 5h0m0 8h0m0 5h0m0 6h0m1-49h0m0 6h0m0 4h0m0 7h0m0 7h0m0 2h0m0 2h0m0 2h0m0 7h0m0 4h0m0 2h0m0 1h0m1-80h0m0 7h0m0 1h0m0 1h0m0 6h0m0 7h0m0 8h0m0 2h0m0 3h0m0 3h0m0 3h0m0 5h0m1-12h0m0 3h0m0 3h0m0 3h0m0 2h0m0 4h0m0 3h0m0 5h0m0 1h0m0 4h0m0 3h0m0 2h0m1-47h0m0 10h0m0 2h0m0 9h0m0 5h0m0 1h0m0 1h0m0 4h0m0 6h0m0 7h0m0 2h0m0 5h0m1-77h0m0 19h0m0 5h0m0 5h0m0 2h0m0 2h0m0 4h0m0 2h0m0 7h0m0 4h0m0 4h0m0 4h0m0 13h0m1-74h0m0 2h0m0 1h0m0 8h0m0 4h0m0 7h0m0 4h0m0 3h0m0 11h0m0 3h0m0 5h0m0 5h0m0 34h0m1-54h0m0 9h0m0 1h0m0 5h0m0 1h0m0 3h0m0 6h0m0 3h0m0 1h0m0 8h0m0 1h0m0 6h0m1-40h0m0 3h0m0 2h0m0 9h0m0 5h0m0 1h0m0 1h0m0 6h0m0 2h0m0 9h0m1-48h0m0 3h0m0 28h0m0 1h0m0 14h0m0 12h0m0 4h0m0 1h0m0 3h0m0 4h0m0 8h0m0 3h0m0 3h0m1-97h0m0 10h0m0 5h0m0 1h0m0 11h0m0 8h0m0 12h0m0 1h0m0 3h0m0 1h0m0 23h0m0 8h0m1-89h0m0 11h0m0 15h0m0 12h0m0 9h0m0 15h0m0 3h0m0 19h0m0 11h0m0 8h0m0 1h0m1-61h0m0 11h0m0 5h0m0 15h0m0 3h0m0 3h0m0 3h0m0 2h0m0 11h0m0 2h0m0 2h0m1-95h0m0 2h0m0 9h0m0 2h0m0 1h0m0 2h0m0 2h0m0 2h0m0 3h0m0 4h0m0 11h0m0 18h0m1-73h0m0 24h0m0 6h0m0 6h0m0 1h0m0 1h0m0 1h0m0 5h0m0 4h0m0 3h0m1-38h0m0 25h0m0 1h0m0 8h0m0 2h0m0 1h0m0 1h0m0 1h0m0 11h0m0 17h0m0 9h0m1-78h0m0 7h0m0 6h0m0 9h0m0 10h0m0 7h0m0 4h0m0 11h0m0 3h0m0 2h0m0 6h0m0 2h0m0 10h0m1-62h0m0 17h0m0 10h0m0 2h0m0 1h0m0 3h0m0 1h0m0 3h0m0 3h0m0 1h0m0 7h0m0 4h0m1-41h0m0 2h0m0 1h0m0 6h0m0 3h0m0 1h0m0 2h0m0 1h0m0 2h0m0 8h0m0 4h0m1-21h0m0 13h0m0 4h0m0 8h0m0 4h0m0 3h0m0 1h0m0 4h0m0 9h0m0 1h0m0 4h0m0 10h0m1-87h0m0 9h0m0 13h0m0 9h0m0 5h0m0 2h0m0 1h0m0 4h0m0 4h0m0 10h0m0 20h0m0 17h0m1-54h0m0 12h0m0 14h0m0 6h0m0 8h0m0 6h0m0 4h0m0 2h0m0 2h0m0 4h0m1-31h0m0 7h0m0 3h0m0 9h0m0 5h0m0 1h0m0 1h0m0 5h0m1-79h0m0 6h0m0 1h0m0 4h0m0 8h0m0 2h0m0 6h0m0 3h0m0 5h0m0 5h0m0 1h0m0 11h0m1-64h0m0 10h0m0 5h0m0 7h0m0 2h0m0 4h0m0 6h0m0 3h0m0 3h0m0 2h0m0 3h0m0 2h0m1-31h0m0 5h0m0 1h0m0 6h0m0 14h0m0 3h0m0 4h0m0 3h0m0 2h0m0 20h0m0 12h0m0 1h0m1-28h0m0 7h0m0 1h0m0 4h0m0 14h0m0 1h0m1-51h0m0 2h0m0 11h0m0 12h0m0 5h0m0 3h0m0 2h0m0 4h0m0 7h0m0 6h0m1-85h0m0 20h0m0 31h0m0 1h0m0 3h0m0 6h0m0 4h0m0 1h0m0 10h0m0 4h0m1-30h0m0 11h0m0 3h0m0 12h0m0 3h0m0 1h0m0 1h0m0 4h0m0 2h0m0 1h0m1-49h0m0 15h0m0 5h0m0 1h0m0 2h0m0 2h0m0 2h0m0 1h0m0 5h0m0 7h0m1-11h0m0 6h0m0 7h0m0 5h0m0 8h0m0 1h0m1-87h0m0 15h0m0 5h0m0 1h0m0 13h0m0 7h0m0 1h0m0 2h0m0 6h0m0 5h0m0 1h0m0 1h0m1-88h0m0 17h0m0 15h0m0 1h0m0 1h0m0 10h0m0 3h0m0 9h0m0 6h0m0 3h0m0 4h0m0 10h0m1-58h0m0 1h0m0 2h0m0 30h0m0 14h0m0 7h0m0 8h0m0 1h0m0 15h0m0 2h0m0 12h0m1-46h0m0 1h0m0 6h0m0 3h0m0 1h0m0 2h0m0 8h0m0 1h0m0 5h0m0 4h0m0 4h0m1-71h0m0 19h0m0 5h0m0 5h0m0 13h0m0 5h0m0 1h0m0 1h0m0 3h0m0 2h0m0 7h0m0 15h0m1-28h0m0 13h0m0 11h0m0 8h0m0 4h0m0 6h0m1-118h0m0 35h0m0 20h0m0 3h0m0 7h0m0 4h0m0 2h0m0 5h0m0 2h0m0 11h0m0 7h0m1-87h0m0 16h0m0 17h0m0 4h0m0 10h0m0 3h0m0 2h0m0 1h0m0 4h0m0 8h0m0 22h0m1-47h0m0 7h0m0 6h0m0 3h0m0 1h0m0 7h0m0 7h0m0 4h0m0 1h0m0 4h0m0 12h0m1-47h0m0 2h0m0 22h0m0 3h0m0 3h0m0 2h0m0 1h0m0 1h0m0 4h0m0 12h0m0 1h0m0 1h0m1-56h0m0 20h0m0 3h0m0 12h0m0 3h0m0 4h0m0 2h0m0 3h0m0 3h0m0 8h0m1-73h0m0 16h0m0 2h0m0 2h0m0 10h0m0 1h0m0 3h0m0 1h0m0 2h0m0 4h0m0 2h0m0 7h0m1-74h0m0 3h0m0 1h0m0 25h0m0 6h0m0 3h0m0 1h0m0 3h0m0 10h0m0 6h0m0 1h0m0 3h0m1-59h0m0 12h0m0 24h0m0 3h0m0 2h0m0 2h0m0 2h0m0 7h0m0 8h0m0 1h0m0 1h0m0 14h0m0 4h0m1-77h0m0 6h0m0 28h0m0 2h0m0 7h0m0 1h0m0 1h0m0 2h0m0 1h0m0 2h0m0 7h0m0 9h0m0 3h0m1-44h0m0 3h0m0 16h0m0 3h0m0 3h0m0 4h0m0 1h0m0 7h0m0 9h0m0 3h0m0 1h0m0 8h0m0 11h0m1-80h0m0 11h0m0 1h0m0 8h0m0 6h0m0 1h0m0 8h0m0 5h0m0 2h0m0 1h0m0 11h0m0 2h0m1-90h0m0 4h0m0 7h0m0 21h0m0 11h0m0 2h0m0 5h0m0 8h0m0 1h0m0 23h0m0 17h0m1-81h0m0 1h0m0 8h0m0 7h0m0 2h0m0 4h0m0 19h0m0 2h0m0 1h0m0 6h0m0 18h0m0 1h0m0 4h0m1-74h0m0 19h0m0 1h0m0 4h0m0 8h0m0 2h0m0 4h0m0 7h0m0 5h0m0 13h0m0 4h0m1-62h0m0 14h0m0 5h0m0 6h0m0 2h0m0 7h0m0 1h0m0 1h0m0 6h0m0 4h0m0 12h0m0 1h0m1-80h0m0 1h0m0 18h0m0 2h0m0 13h0m0 2h0m0 1h0m0 13h0m1-59h0m0 15h0m0 3h0m0 1h0m0 2h0m0 5h0m1-19h0m0 22h0m0 3h0m0 20h0m0 3h0m0 12h0m0 4h0m0 3h0m0 4h0m0 5h0m0 17h0m0 14h0m1-89h0m0 13h0m0 25h0m0 4h0m0 6h0m0 2h0m0 5h0m0 4h0m0 5h0m0 2h0m0 7h0m0 1h0m0 16h0m1-59h0m0 6h0m0 1h0m0 2h0m0 10h0m0 4h0m0 4h0m0 1h0m0 13h0m0 9h0m0 2h0m0 4h0m1-76h0m0 14h0m0 16h0m0 16h0m0 6h0m0 11h0m0 5h0m0 1h0m0 5h0m0 4h0m0 3h0m0 5h0m1-102h0m0 3h0m0 3h0m0 5h0m0 1h0m0 3h0m0 6h0m0 11h0m0 1h0m0 4h0m0 2h0m0 10h0m0 39h0m1-45h0m0 17h0m0 6h0m0 2h0m0 1h0m0 8h0m0 2h0m0 7h0m0 5h0m0 5h0m0 3h0m1-92h0m0 11h0m0 4h0m0 5h0m0 1h0m0 3h0m0 33h0m0 3h0m0 1h0m0 12h0m0 13h0m1-88h0m0 6h0m0 10h0m0 7h0m0 2h0m0 7h0m0 9h0m0 1h0m0 2h0m0 13h0m0 4h0m0 1h0m0 1h0m1-31h0m0 15h0m0 6h0m0 5h0m0 1h0m0 2h0m0 4h0m0 2h0m0 8h0m0 6h0m0 4h0m0 4h0m1-56h0m0 14h0m0 3h0m0 1h0m0 1h0m0 1h0m0 4h0m0 4h0m0 2h0m0 4h0m0 20h0m1-102h0m0 25h0m0 17h0m0 4h0m0 4h0m0 3h0m0 17h0m0 6h0m0 3h0m0 16h0m0 1h0m1-102h0m0 5h0m0 6h0m0 3h0m0 4h0m0 20h0m0 36h0m1-74h0m0 9h0m0 1h0m0 3h0m0 1h0m0 8h0m0 2h0m0 13h0m1-30h0m0 9h0m0 5h0m0 6h0m0 1h0m0 8h0m0 2h0m0 1h0m0 1h0m0 8h0m0 1h0m1-44h0m0 6h0m0 6h0m0 8h0m0 1h0m0 3h0m0 20h0m0 2h0m0 3h0m0 7h0m1-29h0m0 5h0m0 5h0m0 14h0m0 9h0m0 15h0m0 3h0m0 4h0m0 1h0m0 15h0m0 3h0m1-71h0m0 9h0m0 3h0m0 2h0m0 3h0m0 2h0m0 13h0m0 3h0m0 18h0m0 1h0m0 4h0m1-60h0m0 12h0m0 18h0m0 7h0m0 6h0m0 2h0m0 15h0m0 2h0m0 6h0m0 13h0m0 5h0m1-10h0m0 9h0m1-36h0m0 1h0m0 1h0m0 9h0m0 5h0m0 7h0m0 1h0m0 1h0m0 2h0m0 3h0m1-64h0m0 2h0m0 17h0m0 3h0m0 4h0m0 3h0m0 2h0m0 2h0m0 1h0m0 2h0m0 3h0m0 1h0m0 3h0m1-62h0m0 5h0m0 15h0m0 3h0m0 13h0m0 10h0m0 16h0m0 7h0m0 3h0m0 1h0m0 7h0m0 5h0m0 4h0m1-92h0m0 20h0m0 3h0m0 1h0m0 1h0m0 2h0m0 5h0m0 2h0m0 1h0m0 1h0m0 3h0m0 1h0m0 5h0m1-19h0m0 2h0m0 1h0m0 4h0m0 1h0m0 2h0m0 9h0m0 1h0m0 3h0m0 7h0m0 6h0m0 6h0m0 5h0m1-72h0m0 6h0m0 12h0m0 6h0m0 13h0m0 1h0m0 10h0m0 3h0m0 1h0m0 2h0m0 13h0m0 2h0m0 6h0m1-51h0m0 1h0m0 9h0m0 22h0m0 16h0m0 14h0m0 3h0m2-10h0m1-29h0m0 13h0m0 1h0m0 9h0m0 3h0m0 5h0m0 2h0m0 4h0m0 4h0m0 3h0m1-95h0m0 10h0m0 1h0m0 6h0m0 21h0m0 6h0m0 5h0m0 1h0m0 5h0m0 7h0m0 4h0m1-65h0m0 27h0m0 3h0m0 3h0m0 11h0m0 1h0m0 3h0m0 3h0m0 2h0m0 5h0m0 2h0m0 3h0m0 10h0m1-101h0m0 12h0m0 11h0m0 8h0m0 11h0m0 3h0m0 8h0m0 8h0m0 2h0m0 7h0m0 1h0m0 4h0m0 6h0m1-35h0m0 1h0m0 19h0m0 3h0m0 3h0m0 5h0m0 1h0m0 7h0m0 11h0m0 6h0m1-34h0m0 4h0m0 5h0m0 4h0m0 4h0m0 18h0m0 2h0m0 4h0m0 3h0m0 14h0m1-52h0m0 2h0m0 9h0m0 3h0m0 3h0m0 8h0m0 5h0m0 3h0m0 2h0m0 1h0m0 2h0m0 8h0m1-78h0m0 2h0m0 1h0m0 15h0m0 23h0m0 2h0m0 2h0m0 4h0m0 10h0m0 1h0m0 3h0m0 2h0m1-52h0m0 5h0m0 10h0m0 5h0m0 9h0m0 5h0m0 2h0m0 5h0m0 3h0m1-67h0m0 22h0m0 2h0m0 4h0m0 6h0m0 1h0m0 3h0m0 3h0m0 10h0m0 2h0m1-83h0m0 18h0m0 9h0m0 1h0m0 3h0m0 6h0m0 5h0m0 12h0m0 7h0m0 2h0m0 5h0m1-68h0m0 4h0m0 11h0m0 9h0m0 5h0m0 7h0m0 9h0m0 6h0m0 12h0m0 1h0m1-33h0m0 4h0m0 3h0m0 2h0m0 10h0m0 5h0m0 2h0m0 6h0m0 16h0m0 3h0m0 13h0m1-29h0m0 32h0m0 1h0m0 9h0m0 7h0m0 3h0m1-45h0m0 7h0m0 2h0m0 1h0m0 7h0m0 1h0m0 9h0m0 5h0m0 1h0m0 12h0m1-89h0m0 1h0m0 18h0m0 3h0m0 29h0m0 8h0m0 6h0m0 10h0m0 5h0m0 1h0m1-59h0m0 6h0m0 6h0m0 2h0m0 5h0m0 1h0m0 1h0m0 11h0m0 6h0m0 6h0m1-78h0m0 12h0m0 21h0m0 3h0m0 7h0m0 7h0m0 3h0m0 4h0m0 4h0m0 1h0m0 17h0m0 4h0m0 1h0m1-86h0m0 20h0m0 2h0m0 1h0m0 4h0m0 3h0m0 4h0m0 7h0m1-35h0m0 3h0m0 19h0m0 11h0m0 6h0m0 3h0m0 5h0m0 8h0m0 5h0m0 3h0m0 12h0m1-48h0m0 13h0m0 1h0m0 2h0m0 2h0m0 3h0m0 4h0m0 7h0m0 7h0m0 6h0m0 8h0m0 6h0m1-81h0m0 16h0m0 5h0m0 6h0m0 2h0m0 1h0m0 4h0m0 9h0m0 17h0m0 3h0m0 4h0m0 4h0m1-82h0m0 1h0m0 6h0m0 4h0m0 6h0m0 8h0m0 1h0m0 7h0m0 5h0m0 8h0m0 1h0m0 1h0m1-56h0m0 10h0m0 10h0m0 15h0m0 1h0m0 2h0m0 6h0m0 1h0m0 1h0m0 2h0m0 1h0m0 4h0m0 6h0m1-43h0m0 2h0m0 9h0m0 5h0m0 4h0m0 5h0m0 1h0m0 5h0m0 6h0m0 6h0m0 3h0m0 6h0m0 2h0m1-48h0m0 7h0m0 2h0m0 5h0m0 3h0m0 6h0m0 1h0m0 1h0m0 2h0m0 8h0m0 5h0m0 13h0m0 1h0m1-29h0m0 3h0m0 5h0m0 4h0m0 10h0m0 5h0m0 1h0m0 7h0m0 1h0m0 5h0m0 5h0m0 11h0m1-23h0m0 2h0m0 18h0m0 6h0m0 4h0m0 1h0m0 3h0m1-96h0m0 4h0m0 17h0m0 4h0m0 2h0m0 1h0m0 1h0m0 1h0m0 17h0m0 2h0m0 9h0m0 6h0m1-87h0m0 24h0m0 1h0m0 3h0m0 4h0m0 1h0m0 8h0m0 3h0m0 3h0m0 7h0m0 1h0m0 2h0m1-42h0m0 8h0m0 6h0m0 1h0m0 2h0m0 5h0m0 2h0m0 3h0m0 6h0m0 1h0m0 10h0m1-31h0m0 10h0m0 1h0m0 1h0m0 2h0m0 1h0m0 9h0m0 5h0m0 9h0m0 5h0m0 9h0m1-49h0m0 2h0m0 1h0m0 3h0m0 5h0m0 2h0m0 9h0m0 1h0m0 4h0m0 5h0m0 4h0m0 5h0m1-76h0m0 6h0m0 3h0m0 11h0m0 2h0m0 5h0m0 8h0m0 10h0m0 16h0m0 2h0m1-44h0m0 5h0m0 4h0m0 1h0m0 4h0m0 7h0m0 6h0m0 3h0m0 2h0m0 13h0m1-63h0m0 1h0m0 17h0m0 1h0m0 5h0m0 3h0m0 7h0m0 1h0m0 6h0m0 4h0m0 2h0m0 21h0m1-69h0m0 11h0m0 2h0m0 1h0m0 2h0m0 2h0m0 7h0m0 4h0m0 7h0m0 1h0m0 4h0m0 7h0m0 25h0m1-74h0m0 4h0m0 10h0m0 9h0m0 15h0m0 1h0m0 3h0m0 3h0m0 7h0m0 2h0m0 6h0m1-56h0m0 3h0m0 1h0m0 15h0m0 13h0m0 1h0m0 22h0m0 3h0m0 5h0m0 24h0m0 9h0m0 7h0m1-96h0m0 13h0m0 14h0m0 7h0m0 6h0m0 5h0m0 1h0m0 2h0m0 1h0m0 1h0m1-43h0m0 12h0m0 13h0m0 2h0m0 10h0m0 1h0m0 5h0m0 3h0m0 4h0m0 10h0m0 10h0m0 10h0m0 2h0m1-81h0m0 11h0m0 6h0m0 11h0m0 1h0m0 3h0m0 5h0m0 2h0m0 5h0m0 6h0m0 11h0m0 2h0m0 20h0m1-101h0m0 8h0m0 19h0m0 2h0m0 16h0m0 19h0m0 2h0m0 10h0m0 1h0m0 5h0m0 2h0m0 6h0m1-75h0m0 18h0m0 5h0m0 16h0m0 3h0m0 7h0m0 1h0m0 3h0m0 3h0m0 1h0m0 9h0m1-38h0m0 12h0m0 5h0m0 9h0m0 2h0m0 21h0m0 4h0m0 1h0m0 1h0m0 10h0m0 4h0m0 9h0m1-97h0m0 34h0m0 28h0m0 2h0m0 10h0m0 2h0m0 10h0m0 9h0m0 2h0m1-83h0m0 15h0m0 1h0m0 2h0m0 2h0m0 3h0m0 4h0m0 15h0m0 3h0m0 1h0m0 4h0m0 1h0m1-84h0m0 6h0m0 4h0m0 1h0m0 2h0m0 13h0m0 1h0m0 13h0m0 2h0m0 8h0m0 7h0m1-61h0m0 10h0m0 2h0m0 21h0m0 5h0m0 11h0m0 1h0m0 11h0m0 3h0m0 23h0m0 11h0m1 6h0m0 1h0m0 11h0m1-68h0m0 3h0m0 8h0m0 2h0m0 1h0m0 10h0m0 13h0m0 12h0m0 8h0m0 2h0m0 1h0m0 3h0m1-85h0m0 6h0m0 5h0m0 3h0m0 2h0m0 3h0m0 3h0m0 3h0m0 3h0m0 1h0m0 1h0m0 4h0m0 2h0m1-16h0m0 1h0m0 26h0m0 10h0m0 4h0m0 2h0m0 1h0m0 2h0m0 4h0m0 1h0m0 1h0m0 11h0m0 8h0m1-32h0m0 1h0m0 1h0m0 2h0m0 4h0m0 1h0m0 3h0m0 3h0m0 2h0m0 2h0m0 1h0m0 6h0m1-48h0m0 11h0m0 4h0m0 2h0m0 3h0m0 1h0m0 1h0m0 2h0m0 1h0m0 6h0m1-59h0m0 8h0m0 3h0m0 4h0m0 4h0m0 1h0m0 3h0m0 4h0m0 19h0m0 1h0m0 16h0m0 7h0m1-95h0m0 16h0m0 2h0m0 8h0m0 7h0m0 5h0m0 7h0m0 12h0m0 14h0m0 3h0m0 8h0m0 3h0m0 3h0m1-70h0m0 7h0m0 12h0m0 1h0m0 5h0m0 1h0m0 13h0m0 1h0m0 19h0m0 1h0m0 9h0m0 26h0m1-82h0m0 7h0m0 1h0m0 4h0m0 4h0m0 2h0m0 2h0m0 13h0m0 7h0m0 5h0m0 4h0m0 5h0m0 14h0m1-61h0m0 7h0m0 2h0m0 3h0m0 7h0m0 6h0m0 2h0m0 1h0m0 9h0m0 21h0m1-83h0m0 1h0m0 14h0m0 10h0m0 4h0m0 1h0m0 1h0m0 2h0m0 6h0m0 2h0m0 1h0m0 5h0m1-13h0m0 15h0m0 1h0m0 2h0m0 1h0m0 1h0m0 1h0m0 9h0m0 9h0m0 12h0m1-77h0m0 20h0m0 5h0m0 5h0m0 3h0m0 11h0m0 3h0m0 1h0m0 3h0m0 25h0m0 4h0m0 3h0m1-74h0m0 2h0m0 24h0m0 5h0m0 1h0m0 18h0m0 13h0m0 2h0m0 1h0m0 2h0m1-35h0m0 3h0m0 3h0m0 4h0m0 4h0m0 1h0m0 3h0m0 2h0m0 1h0m0 3h0m0 12h0m0 3h0m0 4h0m1-54h0m0 17h0m0 5h0m0 12h0m0 6h0m0 2h0m0 5h0m0 2h0m0 2h0m1-62h0m0 3h0m0 9h0m0 4h0m0 2h0m0 16h0m0 10h0m0 1h0m0 1h0m1-51h0m0 10h0m0 1h0m0 8h0m0 5h0m0 4h0m0 15h0m0 3h0m0 13h0m0 1h0m1-55h0m0 2h0m0 2h0m0 11h0m0 3h0m0 2h0m0 3h0m0 11h0m0 3h0m0 1h0m1-60h0m0 16h0m0 5h0m0 2h0m0 2h0m0 5h0m0 1h0m0 1h0m0 2h0m0 7h0m0 21h0m0 1h0m1-50h0m0 7h0m0 10h0m0 1h0m0 1h0m0 7h0m0 2h0m0 2h0m0 4h0m0 3h0m0 1h0m0 28h0m1-105h0m0 15h0m0 6h0m0 1h0m0 4h0m0 21h0m0 3h0m0 5h0m0 3h0m0 2h0m0 5h0m1-11h0m0 5h0m0 2h0m0 3h0m0 5h0m0 1h0m0 9h0m0 5h0m0 1h0m0 4h0m0 14h0m1-104h0m0 23h0m0 3h0m0 7h0m0 1h0m0 13h0m0 28h0m0 4h0m0 29h0m1-111h0m0 1h0m0 4h0m0 2h0m0 12h0m0 2h0m0 11h0m0 10h0m1-34h0m0 10h0m0 4h0m0 9h0m0 1h0m0 1h0m0 2h0m0 6h0m0 1h0m0 4h0m0 8h0m1-34h0m0 6h0m0 2h0m0 2h0m0 1h0m0 10h0m0 3h0m0 1h0m0 13h0m0 3h0m0 15h0m1-65h0m0 6h0m0 17h0m0 1h0m0 5h0m0 1h0m0 1h0m0 14h0m0 6h0m0 1h0m0 1h0m0 2h0m0 4h0m1-34h0m0 7h0m0 9h0m0 2h0m0 2h0m0 1h0m0 3h0m0 1h0m0 3h0m0 5h0m0 2h0m0 1h0m1-9h0m0 7h0m0 2h0m0 1h0m0 2h0m0 1h0m0 4h0m0 3h0m0 1h0m0 23h0m1-109h0m0 17h0m0 2h0m0 6h0m0 25h0m0 8h0m0 4h0m0 9h0m0 17h0m0 2h0m0 5h0m0 8h0m1-95h0m0 1h0m0 12h0m0 2h0m0 2h0m0 1h0m0 2h0m0 5h0m0 8h0m0 3h0m0 2h0m1-48h0m0 7h0m0 7h0m0 8h0m0 6h0m0 1h0m0 10h0m0 2h0m0 13h0m0 4h0m1-30h0m0 3h0m0 5h0m0 3h0m0 4h0m0 18h0m1-53h0m0 8h0m0 4h0m0 3h0m0 9h0m0 2h0m0 8h0m0 4h0m0 6h0m0 1h0m0 7h0m0 14h0m1-57h0m0 1h0m0 5h0m0 5h0m0 8h0m0 1h0m0 1h0m0 12h0m0 2h0m0 9h0m0 4h0m1-55h0m0 2h0m0 3h0m0 1h0m0 37h0m0 3h0m0 2h0m0 12h0m0 4h0m0 17h0m0 18h0m1-62h0m0 5h0m0 24h0m0 5h0m0 8h0m0 2h0m0 6h0m0 7h0m0 11h0m0 3h0m0 5h0m1-36h0m0 5h0m0 2h0m0 1h0m0 1h0m0 1h0m0 4h0m0 6h0m0 2h0m0 3h0m0 4h0m1-60h0m0 1h0m0 3h0m0 23h0m0 6h0m0 1h0m0 8h0m0 5h0m0 1h0m0 6h0m0 3h0m0 7h0m1-67h0m0 9h0m0 3h0m0 5h0m0 1h0m0 4h0m0 2h0m0 5h0m0 3h0m0 5h0m0 5h0m0 9h0m1-86h0m0 14h0m0 17h0m0 5h0m0 2h0m0 3h0m0 2h0m0 2h0m0 5h0m0 1h0m1-36h0m0 9h0m0 5h0m0 2h0m0 2h0m0 9h0m0 3h0m0 1h0m0 1h0m0 1h0m0 5h0m1-57h0m0 14h0m0 2h0m0 1h0m0 4h0m0 1h0m0 1h0m0 6h0m0 1h0m0 1h0m0 7h0m0 3h0m0 9h0m1-53h0m0 12h0m0 8h0m0 7h0m0 15h0m0 8h0m0 2h0m0 16h0m0 1h0m0 4h0m0 5h0m1-77h0m0 7h0m0 6h0m0 12h0m1-32h0m0 13h0m0 3h0m0 1h0m0 9h0m1-27h0m0 7h0m0 5h0m0 12h0m0 6h0m0 5h0m0 2h0m0 2h0m0 1h0m0 5h0m0 2h0m0 18h0m1-13h0m0 1h0m0 2h0m0 10h0m0 2h0m0 3h0m0 4h0m0 3h0m0 3h0m0 4h0m0 2h0m0 7h0m0 15h0m1-53h0m0 28h0m0 10h0m0 1h0m0 9h0m0 4h0m0 3h0m0 5h0m1-92h0m0 3h0m0 1h0m0 4h0m0 12h0m0 9h0m0 29h0m0 2h0m0 2h0m0 9h0m0 3h0m0 8h0m1-87h0m0 1h0m0 4h0m0 5h0m0 10h0m0 5h0m0 4h0m0 2h0m0 17h0m0 1h0m0 4h0m0 6h0m1-78h0m0 3h0m0 7h0m0 1h0m0 14h0m0 4h0m0 1h0m1-19h0m0 13h0m0 7h0m0 13h0m0 6h0m0 1h0m0 5h0m0 2h0m0 9h0m0 1h0m1-61h0m0 21h0m0 1h0m0 8h0m0 2h0m0 4h0m0 2h0m0 2h0m0 15h0m0 4h0m0 3h0m0 3h0m0 6h0m1-19h0m0 30h0m0 11h0m0 3h0m0 2h0m0 2h0m0 19h0m1-70h0m0 2h0m0 12h0m0 5h0m0 5h0m0 7h0m0 1h0m0 5h0m0 5h0m0 9h0m0 3h0m0 2h0m1-55h0m0 28h0m0 2h0m0 8h0m0 4h0m0 8h0m0 1h0m0 1h0m0 4h0m1-68h0m0 10h0m0 16h0m0 14h0m0 17h0m0 13h0m0 5h0m0 3h0m0 4h0m1-47h0m0 9h0m0 7h0m0 6h0m0 3h0m0 3h0m0 7h0m0 2h0m0 1h0m1-61h0m0 15h0m0 2h0m0 2h0m0 1h0m0 1h0m0 2h0m0 12h0m0 1h0m0 2h0m0 3h0m1-62h0m0 2h0m0 7h0m0 10h0m0 2h0m0 3h0m0 2h0m0 1h0m0 11h0m0 2h0m0 15h0m0 4h0m1-87h0m0 9h0m0 4h0m0 12h0m0 6h0m0 3h0m0 1h0m0 1h0m0 1h0m0 4h0m0 14h0m0 13h0m1 3h0m0 14h0m0 3h0m0 10h0m0 2h0m0 1h0m0 1h0m0 1h0m0 1h0m1-39h0m0 4h0m0 10h0m0 1h0m0 2h0m0 1h0m0 11h0m0 9h0m1-42h0m0 26h0m0 2h0m0 1h0m0 2h0m0 2h0m0 4h0m0 3h0m0 7h0m1-54h0m0 2h0m0 21h0m0 6h0m0 11h0m0 12h0m0 4h0m1-74h0m0 16h0m0 2h0m0 10h0m0 7h0m0 5h0m0 2h0m0 1h0m0 3h0m0 17h0m0 9h0m1-98h0m0 10h0m0 5h0m0 1h0m0 1h0m0 1h0m0 4h0m0 3h0m0 2h0m0 9h0m0 1h0m0 4h0m0 14h0m1-52h0m0 7h0m0 5h0m0 9h0m0 1h0m0 3h0m0 4h0m0 10h0m0 5h0m0 5h0m0 6h0m1-65h0m0 11h0m0 15h0m0 3h0m0 1h0m0 19h0m0 11h0m0 3h0m0 20h0m0 11h0m0 2h0m0 8h0m1-39h0m0 14h0m0 6h0m0 1h0m0 2h0m0 18h0m1-60h0m0 2h0m0 2h0m0 16h0m0 1h0m0 9h0m0 5h0m0 3h0m0 1h0m0 2h0m0 4h0m0 6h0m0 4h0m1-71h0m0 3h0m0 12h0m0 4h0m0 3h0m0 2h0m0 4h0m0 2h0m0 3h0m0 9h0m0 11h0m0 20h0m1-99h0m0 10h0m0 14h0m0 1h0m0 2h0m0 3h0m0 20h0m0 18h0m0 17h0m0 14h0m1-112h0m0 12h0m0 6h0m0 6h0m0 3h0m0 14h0m0 6h0m0 1h0m0 8h0m0 5h0m1-52h0m0 1h0m0 8h0m0 24h0m0 4h0m0 3h0m0 1h0m0 23h0m0 3h0m0 3h0m0 6h0m1-62h0m0 35h0m0 25h0m0 1h0m0 2h0m0 1h0m0 4h0m0 3h0m0 2h0m0 1h0m0 7h0m0 4h0m1-54h0m0 14h0m0 7h0m0 3h0m0 3h0m0 3h0m0 13h0m0 3h0m0 9h0m0 15h0m1-15h0m0 6h0m0 1h0m1-22h0m0 22h0m0 2h0m1-40h0m0 9h0m0 6h0m0 1h0m0 3h0m0 9h0m0 7h0m0 4h0m0 1h0m1-94h0m0 1h0m0 27h0m0 3h0m0 4h0m0 1h0m0 16h0m0 2h0m0 9h0m0 3h0m0 19h0m0 11h0m1-115h0m0 2h0m0 15h0m0 6h0m0 11h0m0 1h0m0 2h0m0 17h0m0 27h0m1-62h0m0 1h0m0 12h0m0 1h0m0 7h0m0 2h0m0 4h0m0 2h0m0 6h0m0 2h0m0 4h0m0 15h0m1-52h0m0 6h0m0 2h0m0 8h0m0 4h0m0 2h0m0 3h0m0 3h0m0 9h0m0 3h0m0 1h0m1-42h0m0 7h0m0 4h0m0 3h0m0 2h0m0 1h0m0 1h0m0 2h0m0 4h0m0 1h0m0 5h0m0 4h0m0 14h0m1-63h0m0 9h0m0 7h0m0 1h0m0 2h0m0 4h0m0 3h0m0 2h0m0 6h0m0 7h0m0 10h0m0 9h0m1-64h0m0 11h0m0 3h0m0 1h0m0 2h0m0 1h0m0 1h0m0 13h0m0 1h0m0 11h0m0 21h0m0 1h0m0 1h0m1-71h0m0 13h0m0 1h0m0 11h0m0 3h0m0 1h0m0 2h0m0 7h0m0 1h0m0 1h0m0 13h0m1-51h0m0 19h0m0 2h0m0 1h0m0 5h0m0 10h0m0 19h0m0 12h0m0 1h0m0 2h0m0 9h0m1-22h0m0 2h0m0 3h0m0 16h0m0 2h0m0 1h0m0 12h0m0 1h0m0 1h0m0 4h0m0 8h0m1-75h0m0 7h0m0 5h0m0 3h0m0 13h0m0 2h0m0 4h0m0 4h0m0 6h0m0 11h0m0 4h0m0 2h0m1-65h0m0 3h0m0 5h0m0 5h0m0 2h0m0 6h0m0 2h0m0 1h0m0 1h0m0 1h0m0 1h0m0 3h0m0 5h0m1-30h0m0 7h0m0 1h0m0 2h0m0 7h0m0 3h0m0 1h0m0 1h0m0 5h0m0 2h0m0 6h0m1-71h0m0 19h0m0 4h0m0 1h0m0 3h0m0 2h0m0 4h0m0 1h0m0 7h0m0 2h0m0 6h0m1-34h0m0 8h0m0 5h0m0 1h0m0 3h0m0 10h0m0 2h0m0 1h0m0 2h0m0 1h0m0 8h0m0 1h0m1-57h0m0 10h0m0 2h0m0 3h0m0 11h0m0 1h0m0 4h0m0 1h0m0 7h0m0 14h0m0 20h0m0 21h0m0 5h0m1-107h0m0 7h0m0 11h0m0 2h0m0 8h0m0 1h0m0 26h0m0 6h0m0 10h0m0 16h0m1-47h0m0 7h0m0 4h0m0 1h0m0 1h0m0 5h0m0 3h0m0 2h0m0 1h0m0 1h0m0 4h0m0 14h0m1-71h0m0 36h0m0 2h0m0 3h0m0 2h0m0 1h0m0 9h0m0 9h0m0 1h0m0 1h0m0 8h0m1-85h0m0 11h0m0 4h0m0 2h0m0 10h0m0 3h0m0 4h0m0 5h0m0 8h0m0 8h0m0 3h0m0 12h0m1-56h0m0 16h0m0 2h0m0 18h0m0 13h0m0 3h0m0 10h0m0 9h0m0 5h0m0 5h0m1-75h0m0 30h0m0 4h0m0 7h0m0 3h0m0 14h0m0 5h0m0 1h0m0 8h0m0 5h0m0 2h0m0 6h0m1-82h0m0 9h0m0 17h0m0 6h0m0 5h0m0 8h0m0 5h0m0 5h0m0 7h0m0 10h0m0 20h0m1-82h0m0 8h0m0 2h0m0 1h0m0 4h0m0 1h0m0 5h0m0 4h0m0 9h0m0 3h0m0 1h0m0 9h0m1-66h0m0 1h0m0 8h0m0 2h0m0 11h0m0 8h0m0 3h0m0 1h0m0 4h0m0 7h0m1-63h0m0 26h0m0 21h0m0 9h0m0 1h0m0 18h0m0 21h0m0 4h0m1-82h0m0 46h0m0 7h0m0 4h0m0 1h0m0 12h0m0 1h0m0 7h0m0 2h0m0 5h0m0 2h0m0 4h0m0 6h0m1-96h0m0 9h0m0 14h0m0 4h0m0 7h0m0 12h0m0 1h0m0 4h0m0 4h0m0 11h0m0 6h0m1-52h0m0 10h0m0 1h0m0 6h0m0 6h0m0 2h0m0 1h0m0 4h0m0 2h0m0 5h0m0 4h0m1-47h0m0 24h0m0 1h0m0 8h0m0 4h0m0 1h0m0 1h0m0 3h0m0 6h0m0 1h0m0 4h0m0 25h0m0 3h0m1-85h0m0 23h0m0 8h0m0 4h0m0 10h0m0 3h0m0 2h0m0 9h0m0 6h0m0 4h0m0 2h0m0 11h0m1-40h0m0 5h0m0 3h0m0 2h0m0 7h0m0 1h0m0 4h0m0 1h0m0 4h0m0 4h0m0 8h0m0 2h0m1-75h0m0 3h0m0 16h0m0 1h0m0 3h0m0 12h0m0 3h0m0 6h0m0 12h0m0 9h0m0 1h0m1-28h0m0 11h0m0 3h0m0 7h0m0 1h0m0 2h0m0 1h0m0 1h0m0 11h0m0 5h0m0 1h0m1-40h0m0 2h0m0 5h0m0 2h0m0 2h0m0 2h0m0 1h0m0 3h0m0 4h0m0 1h0m0 8h0m0 6h0m1-102h0m0 8h0m0 13h0m0 2h0m0 1h0m0 1h0m0 4h0m0 4h0m0 1h0m0 2h0m0 25h0m1-66h0m0 2h0m0 3h0m0 6h0m0 4h0m0 7h0m0 8h0m0 2h0m0 6h0m1-40h0m0 30h0m0 11h0m0 5h0m0 17h0m0 1h0m0 3h0m0 2h0m0 2h0m0 6h0m0 6h0m0 8h0m0 5h0m1-73h0m0 4h0m0 11h0m0 14h0m0 1h0m0 5h0m0 2h0m0 8h0m0 11h0m0 1h0m0 3h0m0 6h0m0 4h0m1-74h0m0 12h0m0 6h0m0 4h0m0 9h0m0 3h0m0 3h0m0 17h0m0 5h0m1-53h0m0 14h0m0 10h0m0 3h0m0 10h0m0 1h0m0 4h0m0 1h0m0 4h0m0 1h0m0 5h0m0 24h0m1-53h0m0 2h0m0 34h0m0 6h0m0 1h0m0 5h0m0 5h0m0 8h0m0 5h0m1-71h0m0 7h0m0 14h0m0 5h0m0 2h0m0 1h0m0 6h0m0 1h0m0 3h0m0 3h0m0 4h0m0 1h0m0 10h0m1-43h0m0 2h0m0 4h0m0 2h0m0 5h0m0 3h0m0 2h0m0 2h0m0 4h0m0 2h0m0 4h0m0 1h0m0 2h0m1-70h0m0 23h0m0 10h0m0 3h0m0 3h0m0 13h0m0 1h0m0 2h0m0 1h0m0 4h0m0 4h0m0 18h0m1-88h0m0 1h0m0 6h0m0 19h0m0 2h0m0 1h0m0 5h0m0 3h0m0 4h0m0 4h0m0 2h0m0 20h0m1-75h0m0 14h0m0 6h0m0 1h0m0 1h0m0 8h0m0 1h0m0 2h0m0 1h0m0 1h0m0 7h0m0 3h0m1-45h0m0 10h0m0 2h0m0 6h0m0 3h0m0 10h0m0 1h0m0 2h0m0 2h0m0 2h0m0 15h0m0 3h0m0 2h0m1-14h0m0 17h0m0 6h0m0 2h0m0 5h0m0 4h0m0 4h0m0 3h0m0 1h0m0 6h0m1-46h0m0 14h0m0 22h0m0 2h0m0 11h0m0 15h0m0 1h0m0 10h0m1-44h0m0 1h0m0 10h0m0 1h0m0 5h0m0 2h0m0 10h0m0 3h0m0 1h0m0 5h0m1-67h0m0 16h0m0 2h0m0 1h0m0 3h0m0 2h0m0 12h0m0 6h0m0 5h0m0 3h0m0 3h0m0 4h0m0 5h0m1-38h0m0 11h0m0 5h0m0 3h0m0 1h0m0 2h0m0 7h0m0 7h0m1-67h0m0 8h0m0 1h0m0 5h0m0 8h0m0 12h0m0 12h0m0 6h0m0 2h0m0 3h0m0 7h0m0 3h0m1-101h0m0 25h0m0 4h0m0 5h0m0 1h0m0 6h0m0 1h0m0 16h0m0 11h0m0 12h0m0 26h0m1-68h0m0 10h0m0 3h0m0 3h0m0 3h0m0 8h0m0 23h0m0 7h0m0 8h0m1-59h0m0 17h0m0 1h0m0 2h0m0 3h0m0 5h0m0 4h0m0 4h0m0 2h0m0 9h0m0 5h0m1-64h0m0 10h0m0 6h0m0 4h0m0 6h0m0 19h0m0 6h0m0 2h0m0 6h0m0 7h0m0 3h0m1-83h0m0 16h0m0 5h0m0 2h0m0 3h0m0 2h0m0 2h0m0 5h0m0 2h0m0 13h0m1-48h0m0 2h0m0 6h0m0 5h0m0 1h0m0 4h0m0 2h0m0 3h0m0 4h0m1-50h0m0 15h0m0 7h0m0 13h0m0 6h0m0 4h0m0 12h0m0 10h0m0 6h0m1-81h0m0 1h0m0 36h0m0 20h0m0 19h0m0 9h0m0 3h0m1-43h0m0 8h0m0 16h0m0 4h0m0 1h0m0 1h0m0 6h0m0 3h0m0 11h0m0 17h0m0 2h0m1-83h0m0 9h0m0 15h0m0 7h0m0 12h0m0 1h0m0 5h0m0 1h0m0 6h0m0 3h0m0 7h0m1-67h0m0 9h0m0 12h0m0 6h0m0 3h0m0 1h0m0 1h0m0 1h0m0 3h0m0 11h0m0 10h0m0 4h0m0 3h0m1-63h0m0 7h0m0 12h0m0 1h0m0 7h0m0 4h0m0 3h0m0 4h0m0 2h0m0 5h0m0 5h0m0 4h0m1-46h0m0 8h0m0 3h0m0 2h0m0 6h0m0 1h0m0 4h0m0 1h0m0 2h0m0 1h0m0 7h0m0 4h0m1-46h0m0 1h0m0 9h0m0 4h0m0 8h0m0 2h0m0 6h0m0 4h0m0 7h0m0 1h0m0 6h0m0 1h0m0 12h0m1-47h0m0 2h0m0 7h0m0 9h0m0 8h0m0 2h0m0 1h0m0 6h0m0 2h0m0 2h0m0 9h0m0 3h0m1-63h0m0 2h0m0 6h0m0 6h0m0 4h0m0 3h0m0 11h0m0 1h0m0 1h0m0 8h0m1-43h0m0 3h0m0 5h0m0 3h0m0 6h0m0 2h0m0 9h0m0 3h0m0 8h0m0 12h0m0 6h0m1-61h0m0 10h0m0 4h0m0 12h0m0 6h0m0 2h0m0 1h0m0 4h0m0 4h0m0 2h0m0 3h0m0 1h0m0 17h0m1-65h0m0 8h0m0 4h0m0 6h0m0 1h0m0 5h0m0 7h0m0 3h0m0 4h0m0 1h0m0 23h0m1-92h0m0 11h0m0 8h0m0 12h0m0 22h0m0 12h0m0 10h0m0 2h0m0 2h0m0 17h0m0 20h0m1-117h0m0 8h0m0 7h0m0 2h0m0 1h0m0 3h0m0 18h0m0 45h0m0 6h0m1-85h0m0 11h0m0 1h0m0 4h0m0 2h0m0 8h0m0 7h0m0 9h0m0 6h0m0 1h0m0 4h0m1-27h0m0 6h0m0 3h0m0 2h0m0 1h0m0 4h0m0 1h0m0 2h0m0 6h0m0 1h0m0 1h0m0 7h0m1-44h0m0 12h0m0 4h0m0 7h0m0 2h0m0 2h0m0 1h0m0 5h0m0 16h0m0 27h0m0 6h0m1-85h0m0 5h0m0 9h0m0 13h0m0 2h0m0 4h0m0 11h0m0 4h0m0 5h0m0 11h0m0 1h0m0 5h0m0 8h0m1-94h0m0 7h0m0 4h0m0 4h0m0 3h0m0 1h0m0 3h0m0 11h0m0 6h0m0 21h0m0 15h0m0 13h0m1-86h0m0 1h0m0 7h0m0 5h0m0 4h0m0 1h0m0 3h0m0 4h0m0 2h0m0 1h0m0 3h0m0 18h0m1-51h0m0 22h0m0 1h0m0 16h0m0 4h0m0 5h0m0 7h0m0 3h0m0 3h0m0 4h0m0 4h0m0 19h0m1-82h0m0 18h0m0 1h0m0 9h0m0 4h0m0 8h0m0 7h0m0 5h0m0 14h0m0 5h0m0 13h0m0 16h0m1-108h0m0 8h0m0 18h0m0 2h0m0 8h0m0 6h0m0 1h0m0 3h0m0 10h0m0 10h0m0 4h0m0 7h0m0 12h0m1-37h0m0 3h0m0 2h0m0 9h0m0 1h0m0 10h0m0 5h0m0 1h0m0 6h0m0 14h0m0 7h0m1-81h0m0 23h0m0 3h0m0 2h0m0 5h0m0 12h0m0 1h0m0 3h0m0 6h0m0 5h0m0 4h0m0 10h0m1-97h0m0 8h0m0 7h0m0 4h0m0 14h0m0 5h0m0 4h0m0 2h0m1-53h0m0 8h0m0 1h0m0 2h0m0 3h0m0 2h0m0 4h0m1-15h0m0 5h0m0 8h0m0 5h0m0 3h0m0 1h0m0 16h0m0 1h0m1-30h0m0 3h0m0 6h0m0 1h0m0 1h0m0 3h0m0 1h0m0 10h0m0 2h0m0 7h0m0 7h0m1-18h0m0 3h0m0 2h0m0 16h0m0 3h0m0 2h0m0 6h0m0 4h0m0 4h0m0 9h0m0 19h0m0 5h0m1-58h0m0 1h0m0 2h0m0 2h0m0 13h0m0 8h0m0 1h0m0 1h0m0 1h0m0 2h0m0 4h0m0 4h0m1-54h0m0 4h0m0 11h0m0 1h0m0 4h0m0 2h0m0 7h0m0 2h0m0 3h0m0 1h0m0 8h0m0 20h0m1-70h0m0 2h0m0 9h0m0 1h0m0 1h0m0 4h0m0 5h0m0 1h0m0 7h0m0 5h0m0 7h0m0 15h0m1-70h0m0 6h0m0 1h0m0 18h0m0 5h0m0 3h0m0 2h0m0 11h0m0 2h0m0 14h0m0 7h0m0 13h0m1-93h0m0 11h0m0 25h0m0 1h0m0 8h0m0 2h0m0 3h0m0 16h0m0 2h0m0 11h0m0 16h0m0 4h0m1-55h0m0 3h0m0 9h0m0 9h0m0 8h0m0 1h0m0 2h0m0 13h0m0 1h0m0 1h0m0 2h0m0 1h0m1-82h0m0 2h0m0 6h0m0 14h0m0 3h0m0 3h0m0 7h0m0 2h0m0 4h0m0 4h0m0 6h0m0 2h0m1-49h0m0 2h0m0 3h0m0 5h0m0 7h0m0 3h0m0 3h0m0 2h0m0 3h0m0 3h0m0 8h0m0 4h0m1-48h0m0 1h0m0 4h0m0 1h0m0 7h0m0 2h0m0 3h0m0 14h0m0 6h0m0 6h0m0 11h0m0 9h0m1-79h0m0 5h0m0 1h0m0 1h0m0 3h0m0 2h0m0 10h0m0 10h0m1-32h0m0 6h0m0 7h0m0 1h0m0 1h0m0 1h0m0 3h0m0 2h0m1-12h0m0 7h0m0 3h0m0 1h0m0 2h0m0 8h0m0 6h0m0 1h0m0 2h0m0 8h0m1-43h0m0 17h0m0 5h0m0 4h0m0 1h0m0 1h0m0 5h0m0 4h0m0 1h0m0 3h0m0 1h0m0 6h0m0 2h0m1-8h0m0 6h0m0 4h0m0 2h0m0 1h0m0 2h0m0 14h0m0 2h0m0 9h0m0 1h0m0 3h0m1-30h0m0 6h0m0 9h0m0 6h0m0 8h0m0 2h0m0 1h0m0 3h0m0 7h0m0 2h0m0 1h0m1-19h0m0 5h0m0 8h0m0 3h0m0 2h0"/></g>
<g clip-path="url(#c1)"><path transform="translate(0.5 0.5)" fill="none" stroke="#ffa500" stroke-width="3.6" stroke-linecap="round" d="M177 455h0m4-4h0m3 2h0m38 2h0m12-9h0m13 159h0m8-149h0m26 187h0m1-45h0m0 20h0m62-187h0m0 25h0m1-23h0m25 4h0m1 7h0m0 12h0m76-8h0m15-2h0m7 148h0m55-143h0m0 4h0m20 136h0m14-146h0m16 12h0m36 183h0m1-191h0m8 141h0m17-138h0m19 142h0m16-4h0m58-148h0m0 14h0m23 1h0m29-8h0m1-2h0m8-5h0m6 1h0m0 8h0m1-12h0m27 8h0m0 3h0m29 196h0m69-55h0m0 7h0m17-153h0m26 165h0m8-16h0m37-145h0m1-18h0m0 8h0m0 16h0m52-10h0m1 10h0m19-6h0m26 149h0m74 8h0m5-14h0m0 6h0m9-160h0m0 7h0m0 7h0m1 205h0m2-200h0m16-18h0m0 6h0m1 5h0m27 4h0m7-8h0m0 7h0m0 3h0m19-5h0m11 140h0m13-134h0m7-3h0m0 104h0"/></g>
<path fill="#ffa500" stroke="#ffa500" stroke-width="1" stroke-linejoin="round" d="M280.3 660.6h6l-3 5zM281.5 660.6h6l-3 5zM365.1 660.6h6l-3 5zM448.2 660.6h6l-3 5zM531.1 660.6h6l-3 5zM613 660.6h6l-3 5zM615.1 660.6h6l-3 5zM616.2 660.6h6l-3 5zM625 660.6h6l-3 5zM630.3 660.6h6l-3 5zM644.5 660.6h6l-3 5zM746.2 660.6h6l-3 5zM900.3 660.6h6l-3 5zM910.2 660.6h6l-3 5zM936.3 660.6h6l-3 5zM1013.1 660.6h6l-3 5zM1032.2 660.6h6l-3 5zM1048.5 660.6h6l-3 5zM1134.3 660.6h6l-3 5zM1177.3 660.6h6l-3 5zM1263.4 660.6h6l-3 5z"/>
<rect x="105.5" y="499.2" width="1255.4" height="48.4" fill="#ff0000" fill-opacity="0.12"/>
<rect x="162.1" y="499.2" width="1136.3000000000002" height="48.4" fill="#ffa500" fill-opacity="0.12"/>
<rect x="1298.4" y="499.2" width="5.099999999999909" height="48.4" fill="#ffa500" fill-opacity="0.12"/>
<line x1="162.1" y1="523.6" x2="1298.4" y2="523.6" stroke="#ffa500" stroke-width="2.8"/>
<line x1="1298.4" y1="518.4" x2="1303.5" y2="518.4" stroke="#ffa500" stroke-width="2.8"/>
<line x1="105.5" y1="523.0" x2="1360.9" y2="523.0" stroke="#ff0000" stroke-width="2.08"/>
<line x1="105.5" y1="758.5" x2="1485.5" y2="758.5" stroke="#b0b0b0" stroke-width="1.11" stroke-dasharray="1.11 1.83"/>
<line x1="105.5" y1="791.5" x2="1485.5" y2="791.5" stroke="#b0b0b0" stroke-width="1.11" stroke-dasharray="1.11 1.83"/>
<line x1="105.5" y1="823.5" x2="1485.5" y2="823.5" stroke="#b0b0b0" stroke-width="1.11" stroke-dasharray="1.11 1.83"/>
<line x1="105.5" y1="856.5" x2="1485.5" y2="856.5" stroke="#b0b0b0" stroke-width="1.11" stroke-dasharray="1.11 1.83"/>
<line x1="105.5" y1="889.5" x2="1485.5" y2="889.5" stroke="#b0b0b0" stroke-width="1.11" stroke-dasharray="1.11 1.83"/>
<line x1="105.5" y1="921.5" x2="1485.5" y2="921.5" stroke="#b0b0b0" stroke-width="1.11" stroke-dasharray="1.11 1.83"/>
<line x1="105.5" y1="957.5" x2="1485.5" y2="957.5" stroke="#b0b0b0" stroke-width="1.11" stroke-dasharray="1.11 1.83"/>
<line x1="105.5" y1="983.5" x2="1485.5" y2="983.5" stroke="#b0b0b0" stroke-width="1.11" stroke-dasharray="1.11 1.83"/>
<line x1="105.5" y1="1009.5" x2="1485.5" y2="1009.5" stroke="#b0b0b0" stroke-width="1.11" stroke-dasharray="1.11 1.83"/>
<g clip-path="url(#c2)"><path transform="translate(0.5 0.5)" fill="none" stroke="#000" stroke-width="3" stroke-linecap="round" d="M162 1006h0m0 1h0m1-1h0m0 1h0m1-1h0m0 1h0m1 0h0m1-1h0m0 1h0m1 0h0m1-1h0m0 1h0m1-1h0m0 1h0m1-1h0m0 1h0m1-1h0m0 1h0m1-1h0m0 1h0m1-1h0m0 1h0m1-1h0m0 1h0m1-1h0m0 1h0m1-1h0m0 1h0m1-1h0m0 1h0m1-1h0m0 1h0m1-1h0m0 1h0m1 0h0m1-1h0m0 1h0m1-1h0m0 1h0m1-2h0m0 1h0m0 1h0m1-2h0m0 1h0m0 1h0m1-1h0m0 1h0m1 0h0m1-1h0m0 1h0m1-1h0m0 1h0m1-2h0m0 1h0m0 1h0m1-1h0m0 1h0m1-1h0m0 1h0m1-1h0m0 1h0m1-1h0m0 1h0m1-1h0m0 1h0m1-1h0m0 1h0m1-1h0m0 1h0m1-1h0m0 1h0m1-1h0m0 1h0m1-1h0m0 1h0m1-1h0m0 1h0m1-1h0m0 1h0m1-1h0m0 1h0m1-1h0m0 1h0m1-1h0m0 1h0m1-2h0m0 1h0m0 1h0m1-2h0m0 1h0m0 1h0m1-1h0m0 1h0m1-1h0m0 1h0m1-1h0m0 1h0m1-1h0m0 1h0m1-1h0m0 1h0m1-1h0m0 1h0m1-1h0m0 1h0m1-1h0m0 1h0m1-1h0m0 1h0m1-1h0m0 1h0m1-1h0m0 1h0m1-1h0m0 1h0m1-1h0m0 1h0m1-1h0m0 1h0m1-2h0m0 1h0m0 1h0m1-1h0m0 1h0m1-1h0m0 1h0m1-1h0m0 1h0m1-1h0m0 1h0m1-1h0m0 1h0m1-1h0m0 1h0m1-1h0m0 1h0m1-1h0m0 1h0m1-2h0m0 1h0m0 1h0m1-1h0m0 1h0m1-2h0m0 1h0m0 1h0m1 0h0m1-1h0m0 1h0m1-1h0m0 1h0m1-1h0m0 1h0m1-1h0m0 1h0m1-1h0m0 1h0m1-1h0m0 1h0m1-1h0m0 1h0m1-1h0m0 1h0m1-1h0m0 1h0m1-2h0m0 1h0m0 1h0m1-2h0m0 1h0m0 1h0m1-1h0m0 1h0m1-1h0m0 1h0m1 0h0m1-2h0m0 1h0m0 1h0m1 0h0m1-2h0m0 1h0m0 1h0m1-1h0m0 1h0m1-1h0m0 1h0m1-1h0m0 1h0m1-1h0m0 1h0m1-1h0m0 1h0m1-1h0m0 1h0m1-1h0m0 1h0m1-1h0m0 1h0m1-1h0m0 1h0m1-1h0m0 1h0m1-1h0m0 1h0m1-1h0m0 1h0m1-1h0m0 1h0m1-1h0m0 1h0m1-1h0m0 1h0m1-1h0m0 1h0m1-1h0m0 1h0m1-2h0m0 1h0m0 1h0m1-1h0m0 1h0m1-1h0m0 1h0m1 0h0m1-1h0m0 1h0m1-1h0m0 1h0m1-2h0m0 1h0m0 1h0m1-1h0m0 1h0m1-1h0m0 1h0m1-1h0m0 1h0m1-1h0m0 1h0m1-1h0m0 1h0m1-1h0m0 1h0m1 0h0m1-1h0m0 1h0m1-1h0m0 1h0m1-2h0m0 1h0m0 1h0m1-1h0m0 1h0m1-1h0m0 1h0m1 0h0m1-1h0m0 1h0m1-1h0m0 1h0m1-1h0m0 1h0m1-1h0m0 1h0m1-1h0m0 1h0m1-1h0m0 1h0m1-1h0m0 1h0m1-1h0m0 1h0m1-1h0m0 1h0m1-1h0m0 1h0m1-1h0m0 1h0m1 0h0m1-1h0m0 1h0m1-1h0m0 1h0m1-1h0m0 1h0m1-1h0m0 1h0m1-1h0m0 1h0m1-1h0m0 1h0m1 0h0m1-1h0m0 1h0m1-1h0m0 1h0m1-2h0m0 1h0m0 1h0m1-1h0m0 1h0m1-1h0m0 1h0m1-1h0m0 1h0m1-1h0m0 1h0m1 0h0m1-1h0m0 1h0m1-1h0m0 1h0m1-1h0m0 1h0m1-1h0m0 1h0m1-1h0m0 1h0m1-1h0m0 1h0m1-1h0m0 1h0m1-1h0m0 1h0m1-1h0m0 1h0m1-1h0m0 1h0m1-1h0m0 1h0m1-1h0m0 1h0m1-1h0m0 1h0m1-1h0m0 1h0m1-1h0m0 1h0m1-1h0m0 1h0m1-2h0m0 1h0m0 1h0m1-1h0m0 1h0m1-1h0m0 1h0m1-1h0m0 1h0m1-1h0m0 1h0m1-1h0m0 1h0m1-1h0m0 1h0m1-1h0m0 1h0m1-1h0m0 1h0m1-1h0m0 1h0m1-1h0m0 1h0m1-2h0m0 1h0m0 1h0m1-1h0m0 1h0m1-1h0m0 1h0m1-1h0m0 1h0m1-1h0m0 1h0m1-1h0m0 1h0m1-1h0m0 1h0m1-1h0m0 1h0m1-1h0m0 1h0m1-2h0m0 1h0m0 1h0m1-2h0m0 1h0m0 1h0m1-1h0m0 1h0m1-1h0m0 1h0m1-1h0m0 1h0m1-1h0m0 1h0m1-1h0m0 1h0m1-2h0m0 1h0m0 1h0m1-1h0m0 1h0m1-1h0m0 1h0m1-1h0m0 1h0m1-1h0m0 1h0m1-1h0m0 1h0m1-1h0m0 1h0m1-1h0m0 1h0m1-1h0m0 1h0m1-1h0m0 1h0m1-1h0m0 1h0m1-1h0m0 1h0m1-1h0m0 1h0m1-1h0m0 1h0m1-2h0m0 1h0m0 1h0m1-1h0m0 1h0m1-2h0m0 1h0m0 1h0m1-1h0m0 1h0m1-2h0m0 1h0m0 1h0m1-2h0m0 1h0m0 1h0m1-1h0m0 1h0m1-2h0m0 1h0m0 1h0m1-1h0m0 1h0m1-1h0m0 1h0m1-1h0m0 1h0m1-1h0m0 1h0m1-1h0m0 1h0m1-1h0m0 1h0m1-2h0m0 1h0m0 1h0m1-1h0m0 1h0m1-1h0m0 1h0m1-1h0m0 1h0m1-1h0m0 1h0m1-1h0m0 1h0m1-1h0m0 1h0m1-1h0m0 1h0m1-1h0m0 1h0m1-1h0m0 1h0m1-1h0m0 1h0m1-1h0m0 1h0m1-1h0m0 1h0m1-1h0m0 1h0m1-1h0m0 1h0m1-1h0m0 1h0m1-1h0m0 1h0m1-1h0m0 1h0m1-1h0m0 1h0m1-1h0m0 1h0m1-1h0m0 1h0m1-1h0m0 1h0m1-1h0m0 1h0m1-1h0m0 1h0m1-1h0m0 1h0m1-1h0m0 1h0m1-1h0m0 1h0m1-1h0m0 1h0m1-1h0m0 1h0m1-1h0m0 1h0m1-1h0m0 1h0m1-1h0m0 1h0m1-1h0m0 1h0m1-1h0m0 1h0m1-1h0m0 1h0m1-2h0m0 1h0m0 1h0m1-1h0m0 1h0m1-1h0m0 1h0m1-1h0m0 1h0m1-1h0m0 1h0m1-1h0m0 1h0m1 0h0m1-1h0m0 1h0m1-1h0m0 1h0m1-1h0m0 1h0m1-1h0m0 1h0m1 0h0m1-1h0m0 1h0m1-2h0m0 1h0m0 1h0m1-2h0m0 1h0m0 1h0m1-1h0m0 1h0m1-1h0m0 1h0m1-1h0m0 1h0m1-1h0m0 1h0m1-1h0m0 1h0m1-1h0m0 1h0m1-1h0m0 1h0m1-2h0m0 1h0m0 1h0m1-1h0m0 1h0m1-1h0m0 1h0m1-1h0m0 1h0m1-1h0m0 1h0m1 0h0m1-1h0m0 1h0m1-1h0m0 1h0m1-1h0m0 1h0m1-1h0m0 1h0m1-1h0m0 1h0m1-1h0m0 1h0m1-1h0m0 1h0m1-2h0m0 1h0m0 1h0m1-2h0m0 2h0m1-1h0m0 1h0m1-1h0m0 1h0m1-1h0m0 1h0m1-1h0m0 1h0m1-1h0m0 1h0m1-1h0m0 1h0m1-2h0m0 1h0m0 1h0m1-1h0m0 1h0m1-1h0m0 1h0m1-1h0m0 1h0m1-1h0m0 1h0m1-1h0m0 1h0m1-1h0m0 1h0m1-1h0m0 1h0m1-1h0m0 1h0m1-1h0m0 1h0m1-1h0m0 1h0m1-1h0m0 1h0m1-1h0m0 1h0m1-1h0m0 1h0m1-1h0m0 1h0m1-1h0m0 1h0m1 0h0m1-1h0m0 1h0m1-1h0m0 1h0m1-1h0m0 1h0m1-1h0m0 1h0m1-1h0m0 1h0m1-1h0m0 1h0m1-1h0m0 1h0m1-1h0m0 1h0m1-1h0m0 1h0m1-1h0m0 1h0m1-2h0m0 1h0m0 1h0m1-1h0m0 1h0m1-1h0m0 1h0m1-2h0m0 1h0m0 1h0m1-2h0m0 1h0m0 1h0m1-1h0m0 1h0m1-1h0m0 1h0m1-1h0m0 1h0m1-1h0m0 1h0m1-1h0m0 1h0m1-1h0m0 1h0m1-1h0m0 1h0m1-2h0m0 1h0m0 1h0m1-1h0m0 1h0m1-1h0m0 1h0m1-1h0m0 1h0m1-1h0m0 1h0m1-1h0m0 1h0m1-1h0m0 1h0m1-1h0m0 1h0m1-2h0m0 1h0m0 1h0m1-1h0m0 1h0m1-1h0m0 1h0m1-1h0m0 1h0m1-1h0m0 1h0m1-1h0m0 1h0m1-1h0m0 1h0m1-1h0m0 1h0m1-1h0m0 1h0m1-1h0m0 1h0m1-1h0m0 1h0m1-1h0m0 1h0m1-1h0m0 1h0m1-1h0m0 1h0m1-1h0m0 1h0m1-1h0m0 1h0m1-1h0m0 1h0m1-2h0m0 1h0m0 1h0m1-1h0m0 1h0m1-1h0m0 1h0m1-2h0m0 1h0m0 1h0m1-1h0m0 1h0m1-1h0m0 1h0m1-1h0m0 1h0m1-1h0m0 1h0m1-2h0m0 1h0m0 1h0m1-1h0m0 1h0m1-1h0m0 1h0m1-1h0m0 1h0m1-1h0m0 1h0m1-1h0m0 1h0m1-2h0m0 1h0m0 1h0m1-1h0m0 1h0m1-1h0m0 1h0m1-2h0m0 1h0m0 1h0m1 0h0m1-1h0m0 1h0m1-1h0m0 1h0m1-1h0m0 1h0m1-1h0m0 1h0m1-1h0m0 1h0m1-1h0m0 1h0m1-1h0m0 1h0m1-1h0m0 1h0m1-1h0m0 1h0m1-1h0m0 1h0m1-1h0m0 1h0m1-1h0m0 1h0m1-1h0m0 1h0m1-1h0m0 1h0m1-1h0m0 1h0m1-1h0m0 1h0m1-1h0m0 1h0m1-2h0m0 1h0m0 1h0m1-1h0m0 1h0m1-1h0m0 1h0m1-1h0m0 1h0m1-1h0m0 1h0m1-1h0m0 1h0m1 0h0m1-1h0m0 1h0m1-2h0m0 1h0m0 1h0m1-1h0m0 1h0m1-1h0m0 1h0m1-1h0m0 1h0m1-1h0m0 1h0m1-1h0m0 1h0m1-2h0m0 1h0m0 1h0m1-1h0m0 1h0m1-1h0m0 1h0m1-1h0m0 1h0m1-1h0m0 1h0m1-1h0m0 1h0m1-1h0m0 1h0m1-1h0m0 1h0m1-1h0m0 1h0m1-1h0m0 1h0m1-1h0m0 1h0m1-1h0m0 1h0m1-1h0m0 1h0m1-1h0m0 1h0m1-1h0m0 1h0m1-2h0m0 1h0m0 1h0m1-1h0m0 1h0m1-1h0m0 1h0m1-1h0m0 1h0m1-1h0m0 1h0m1-1h0m0 1h0m1-1h0m0 1h0m1-1h0m0 1h0m1-2h0m0 2h0m1-1h0m0 1h0m1-1h0m0 1h0m1-1h0m0 1h0m1-1h0m0 1h0m1-1h0m0 1h0m1-1h0m0 1h0m1-1h0m0 1h0m1-1h0m0 1h0m1-1h0m0 1h0m1-1h0m0 1h0m1-1h0m0 1h0m1-1h0m0 1h0m1-1h0m0 1h0m1-1h0m0 1h0m1-1h0m0 1h0m1-1h0m0 1h0m1-1h0m0 1h0m1-1h0m0 1h0m1-1h0m0 1h0m1-2h0m0 1h0m0 1h0m1-1h0m0 1h0m1-1h0m0 1h0m1-1h0m0 1h0m1-1h0m0 1h0m1-1h0m0 1h0m1-1h0m0 1h0m1-1h0m0 1h0m1-1h0m0 1h0m1-1h0m0 1h0m1-1h0m0 1h0m1-2h0m0 1h0m0 1h0m1-1h0m0 1h0m1-1h0m0 1h0m1-1h0m0 1h0m1-1h0m0 1h0m1-1h0m0 1h0m1-1h0m0 1h0m1-1h0m0 1h0m1-1h0m0 1h0m1-1h0m0 1h0m1 0h0m1-1h0m0 1h0m1-1h0m0 1h0m1-1h0m0 1h0m1-1h0m0 1h0m1-1h0m0 1h0m1-1h0m0 1h0m1-1h0m0 1h0m1-1h0m0 1h0m1-1h0m0 1h0m1-1h0m0 1h0m1-2h0m0 1h0m0 1h0m1-1h0m0 1h0m1-1h0m0 1h0m1-1h0m0 1h0m1-1h0m0 1h0m1-1h0m0 1h0m1-1h0m0 1h0m1-1h0m0 1h0m1-1h0m0 1h0m1-1h0m0 1h0m1-1h0m0 1h0m1 0h0m1-1h0m0 1h0m1-1h0m0 1h0m1-1h0m0 1h0m1-1h0m0 1h0m1-1h0m0 1h0m1-1h0m0 1h0m1-1h0m0 1h0m1-1h0m0 1h0m1-2h0m0 1h0m0 1h0m1-2h0m0 1h0m0 1h0m1-2h0m0 1h0m0 1h0m1-1h0m0 1h0m1-1h0m0 1h0m1-1h0m0 1h0m1-2h0m0 1h0m0 1h0m1-1h0m0 1h0m1-1h0m0 1h0m1-1h0m0 1h0m1-1h0m0 1h0m1-1h0m0 1h0m1 0h0m1-1h0m0 1h0m1-2h0m0 1h0m0 1h0m1-1h0m0 1h0m1-1h0m0 1h0m1-1h0m0 1h0m1-1h0m0 1h0m1-1h0m0 1h0m1-1h0m0 1h0m1-1h0m0 1h0m1-1h0m0 1h0m1-1h0m0 1h0m1-1h0m0 1h0m1-2h0m0 1h0m0 1h0m1-1h0m0 1h0m1-1h0m0 1h0m1-1h0m0 1h0m1-1h0m0 1h0m1-1h0m0 1h0m1-1h0m0 1h0m1-1h0m0 1h0m1-1h0m0 1h0m1-1h0m0 1h0m1-1h0m0 1h0m1-1h0m0 1h0m1-1h0m0 1h0m1-1h0m0 1h0m1-1h0m0 1h0m1-1h0m0 1h0m1-1h0m0 1h0m1-1h0m0 1h0m1-1h0m0 1h0m1-1h0m0 1h0m1-1h0m0 1h0m1-1h0m0 1h0m1-1h0m0 1h0m1-1h0m0 1h0m1-1h0m0 1h0m1-1h0m0 1h0m1-1h0m0 1h0m1-1h0m0 1h0m1-1h0m0 1h0m1-1h0m0 1h0m1-1h0m0 1h0m1 0h0m1-1h0m0 1h0m1-1h0m0 1h0m1-1h0m0 1h0m1-1h0m0 1h0m1-1h0m0 1h0m1-1h0m0 1h0m1-1h0m0 1h0m1-1h0m0 1h0m1-2h0m0 1h0m0 1h0m1-1h0m0 1h0m1-1h0m0 1h0m1-1h0m0 1h0m1-1h0m0 1h0m1-1h0m0 1h0m1-1h0m0 1h0m1-1h0m0 1h0m1-2h0m0 1h0m0 1h0m1-1h0m0 1h0m1-1h0m0 1h0m1-1h0m0 1h0m1-1h0m0 1h0m1-1h0m0 1h0m1-1h0m0 1h0m1-1h0m0 1h0m1-1h0m0 1h0m1-1h0m0 1h0m1-1h0m0 1h0m1-1h0m0 1h0m1-1h0m0 1h0m1 0h0m1-1h0m0 1h0m1-1h0m0 1h0m1-1h0m0 1h0m1-1h0m0 1h0m1-1h0m0 1h0m1-1h0m0 1h0m1-1h0m0 1h0m1-2h0m0 1h0m0 1h0m1-1h0m0 1h0m1-1h0m0 1h0m1-2h0m0 1h0m0 1h0m1-1h0m0 1h0m1-1h0m0 1h0m1-1h0m0 1h0m1-1h0m0 1h0m1-1h0m0 1h0m1-1h0m0 1h0m1-1h0m0 1h0m1-1h0m0 1h0m1-1h0m0 1h0m1-1h0m0 1h0m1 0h0m1-2h0m0 1h0m0 1h0m1-1h0m0 1h0m1 0h0m1-1h0m0 1h0m1-2h0m0 1h0m0 1h0m1-1h0m0 1h0m1-1h0m0 1h0m1-1h0m0 1h0m1-2h0m0 1h0m0 1h0m1-1h0m0 1h0m1-1h0m0 1h0m1-1h0m0 1h0m1-1h0m0 1h0m1-1h0m0 1h0m1-1h0m0 1h0m1-1h0m0 1h0m1-1h0m0 1h0m1-1h0m0 1h0m1-1h0m0 1h0m1-1h0m0 1h0m1-1h0m0 1h0m1-1h0m0 1h0m1-1h0m0 1h0m1-1h0m0 1h0m1-1h0m0 1h0m1-1h0m0 1h0m1-1h0m0 1h0m1-2h0m0 1h0m0 1h0m1-1h0m0 1h0m1-1h0m0 1h0m1-1h0m0 1h0m1-1h0m0 1h0m1-1h0m0 1h0m1-1h0m0 1h0m1-2h0m0 1h0m0 1h0m1-1h0m0 1h0m1-1h0m0 1h0m1-1h0m0 1h0m1-2h0m0 1h0m0 1h0m1-1h0m0 1h0m1-1h0m0 1h0m1-1h0m0 1h0m1-1h0m0 1h0m1 0h0m1-1h0m0 1h0m1-1h0m0 1h0m1-1h0m0 1h0m1-2h0m0 1h0m0 1h0m1-1h0m0 1h0m1-1h0m0 1h0m1-1h0m0 1h0m1-1h0m0 1h0m1-1h0m0 1h0m1-1h0m0 1h0m1-1h0m0 1h0m1-1h0m0 1h0m1-1h0m0 1h0m1-1h0m0 1h0m1-1h0m0 1h0m1-1h0m0 1h0m1-1h0m0 1h0m1-1h0m0 1h0m1-1h0m0 1h0m1-1h0m0 1h0m1-1h0m0 1h0m1-1h0m0 1h0m1-1h0m0 1h0m1-1h0m0 1h0m1-1h0m0 1h0m1-1h0m0 1h0m1-1h0m0 1h0m1-1h0m0 1h0m1-2h0m0 1h0m0 1h0m1-1h0m0 1h0m1-1h0m0 1h0m1-1h0m0 1h0m1-1h0m0 1h0m1-1h0m0 1h0m1-1h0m0 1h0m1-1h0m0 1h0m1-1h0m0 1h0m1-1h0m0 1h0m1-2h0m0 1h0m0 1h0m1-1h0m0 1h0m1-1h0m0 1h0m1-1h0m0 1h0m1-1h0m0 1h0m1-1h0m0 1h0m1-1h0m0 1h0m1 0h0m1-1h0m0 1h0m1-1h0m0 1h0m1-1h0m0 1h0m1-1h0m0 1h0m1-1h0m0 1h0m1-1h0m0 1h0m1-1h0m0 1h0m1-1h0m0 1h0m1-1h0m0 1h0m1-1h0m0 1h0m1-1h0m0 1h0m1-1h0m0 1h0m1-1h0m0 1h0m1-1h0m0 1h0m1-1h0m0 1h0m1-1h0m0 1h0m1-1h0m0 1h0m1-1h0m0 1h0m1-1h0m0 1h0m1-1h0m0 1h0m1-1h0m0 1h0m1-1h0m0 1h0m1-1h0m0 1h0m1-1h0m0 1h0m1-1h0m0 1h0m1-1h0m0 1h0m1-1h0m0 1h0m1-2h0m0 1h0m0 1h0m1-1h0m0 1h0m1-2h0m0 1h0m0 1h0m1-1h0m0 1h0m1-1h0m0 1h0m1-1h0m0 1h0m1-1h0m0 1h0m1-1h0m0 1h0m1-1h0m0 1h0m1-1h0m0 1h0m1-1h0m0 1h0m1-1h0m0 1h0m1-1h0m0 1h0m1-1h0m0 1h0m1-1h0m0 1h0m1-1h0m0 1h0m1-1h0m0 1h0m1-1h0m0 1h0m1-1h0m0 1h0m1-1h0m0 1h0m1-1h0m0 1h0m1-1h0m0 1h0m1-1h0m0 1h0m1-1h0m0 1h0m1 0h0m1-1h0m0 1h0m1-1h0m0 1h0m1-1h0m0 1h0m1-1h0m0 1h0m1-1h0m0 1h0m1 0h0m1-1h0m0 1h0m1-1h0m0 1h0m1-1h0m0 1h0m1-1h0m0 1h0m1-1h0m0 1h0m1-1h0m0 1h0m1-1h0m0 1h0m1-1h0m0 1h0m1-1h0m0 1h0m1-1h0m0 1h0m1-1h0m0 1h0m1-1h0m0 1h0m1-1h0m0 1h0m1-1h0m0 1h0m1-1h0m0 1h0m1-1h0m0 1h0m1-1h0m0 1h0m1-1h0m0 1h0m1-1h0m0 1h0m1-1h0m0 1h0m1-1h0m0 1h0m1-1h0m0 1h0m1-1h0m0 1h0m1-1h0m0 1h0m1-1h0m0 1h0m1-1h0m0 1h0m1-1h0m0 1h0m1-1h0m0 1h0m1-1h0m0 1h0m1-1h0m0 1h0m1-1h0m0 1h0m1-2h0m0 1h0m0 1h0m1-1h0m0 1h0m1-1h0m0 1h0m1-1h0m0 1h0m1-1h0m0 1h0m1-1h0m0 1h0m1-1h0m0 1h0m1-1h0m0 1h0m1-1h0m0 1h0m1 0h0m1-1h0m0 1h0m1-1h0m0 1h0m1-1h0m0 1h0m1-1h0m0 1h0m1-1h0m0 1h0m1-1h0m0 1h0m1-1h0m0 1h0m1-1h0m0 1h0m1-1h0m0 1h0m1-2h0m0 1h0m0 1h0m1-1h0m0 1h0m1-1h0m0 1h0m1-1h0m0 1h0m1-1h0m0 1h0m1-1h0m0 1h0m1-1h0m0 1h0m1-1h0m0 1h0m1-1h0m0 1h0m1-1h0m0 1h0m1-1h0m0 1h0m1-1h0m0 1h0m1-1h0m0 1h0m1-1h0m0 1h0m1-1h0m0 1h0m1-1h0m0 1h0m1-1h0m0 1h0m1-1h0m0 1h0m1-1h0m0 1h0m1-1h0m0 1h0m1-1h0m0 1h0m1-1h0m0 1h0m1-1h0m0 1h0m1-1h0m0 1h0m1-1h0m0 1h0m1-1h0m0 1h0m1-1h0m0 1h0m1-1h0m0 1h0m1-1h0m0 1h0m1-1h0m0 1h0m1-1h0m0 1h0m1-1h0m0 1h0m1-1h0m0 1h0m1-1h0m0 1h0m1-1h0m0 1h0m1-1h0m0 1h0m1-1h0m0 1h0m1-1h0m0 1h0m1-2h0m0 1h0m0 1h0m1-1h0m0 1h0m1-1h0m0 1h0m1-1h0m0 1h0m1 0h0m1-1h0m0 1h0m1-1h0m0 1h0m1-1h0m0 1h0m1-1h0m0 1h0m1-1h0m0 1h0m1-1h0m0 1h0m1 0h0m1-1h0m0 1h0m1-1h0m0 1h0m1-1h0m0 1h0m1-1h0m0 1h0m1-1h0m0 1h0m1-1h0m0 1h0m1-1h0m0 1h0m1-1h0m0 1h0m1-1h0m0 1h0m1-1h0m0 1h0m1-2h0m0 1h0m0 1h0m1-1h0m0 1h0m1-1h0m0 1h0m1-1h0m0 1h0m1-1h0m0 1h0m1 0h0m1-1h0m0 1h0m1-1h0m0 1h0m1-1h0m0 1h0m1-1h0m0 1h0m1-1h0m0 1h0m1-1h0m0 1h0m1-1h0m0 1h0m1-1h0m0 1h0m1-1h0m0 1h0m1-1h0m0 1h0m1-1h0m0 1h0m1-1h0m0 1h0m1 0h0m1-1h0m0 1h0m1-1h0m0 1h0m1-1h0m0 1h0m1-1h0m0 1h0m1-1h0m0 1h0m1-1h0m0 1h0m1-1h0m0 1h0m1-1h0m0 1h0m1-1h0m0 1h0m1-1h0m0 1h0m1-1h0m0 1h0m1-1h0m0 1h0m1-1h0m0 1h0m1-1h0m0 1h0m1-1h0m0 1h0m1-1h0m0 1h0m1-1h0m0 1h0m1-1h0m0 1h0m1-1h0m0 1h0m1-1h0m0 1h0m1-1h0m0 1h0m1-2h0m0 1h0m0 1h0m1-1h0m0 1h0m1-1h0m0 1h0m1-1h0m0 1h0m1 0h0m1-1h0m0 1h0m1-1h0m0 1h0m1-2h0m0 1h0m0 1h0m1-1h0m0 1h0m1-1h0m0 1h0m1-1h0m0 1h0m1-1h0m0 1h0m1-1h0m0 1h0m1 0h0m1-2h0m0 1h0m0 1h0m1-1h0m0 1h0m1 0h0m1-1h0m0 1h0m1-1h0m0 1h0m1-1h0m0 1h0m1-1h0m0 1h0m1-1h0m0 1h0m1-1h0m0 1h0m1-1h0m0 1h0m1-1h0m0 1h0m1-1h0m0 1h0m1-1h0m0 1h0m1-1h0m0 1h0m1-2h0m0 1h0m0 1h0m1-1h0m0 1h0m1-2h0m0 1h0m0 1h0m1 0h0m1-1h0m0 1h0m1-1h0m0 1h0m1 0h0m1-1h0m0 1h0m1-1h0m0 1h0m1-1h0m0 1h0m1-1h0m0 1h0m1-1h0m0 1h0m1-1h0m0 1h0m1-1h0m0 1h0m1-1h0m0 1h0m1-1h0m0 1h0m1-1h0m0 1h0m1-1h0m0 1h0m1-1h0m0 1h0m1-1h0m0 1h0m1-1h0m0 1h0m1-1h0m0 1h0m1-1h0m0 1h0m1-1h0m0 1h0m1-1h0m0 1h0m1-1h0m0 1h0m1-1h0m0 1h0m1-1h0m0 1h0m1-1h0m0 1h0m1-1h0m0 1h0m1-1h0m0 1h0m1 0h0m1-1h0m0 1h0m1-1h0m0 1h0m1-1h0m0 1h0m1-1h0m0 1h0m1-1h0m0 1h0m1-1h0m0 1h0m1 0h0m1-1h0m0 1h0m1-1h0m0 1h0m1-2h0m0 1h0m0 1h0m1-1h0m0 1h0m1-2h0m0 1h0m0 1h0m1-2h0m0 1h0m0 1h0m1-1h0m0 1h0m1-2h0m0 1h0m0 1h0m1 0h0m1-1h0m0 1h0m1-1h0m0 1h0m1-1h0m0 1h0m1-2h0m0 2h0m1-1h0m0 1h0m1-1h0m0 1h0m1 0h0m1-1h0m0 1h0m1-1h0m0 1h0m1-1h0m0 1h0m1-1h0m0 1h0m1-1h0m0 1h0m1-1h0m0 1h0m1-1h0m0 1h0m1-1h0m0 1h0m1-1h0m0 1h0m1 0h0m1-1h0m0 1h0m1-1h0m0 1h0m1-1h0m0 1h0m1-1h0m0 1h0m1-1h0m0 1h0m1-1h0m0 1h0m1-1h0m0 1h0m1-1h0m0 1h0m1-1h0m0 1h0m1-1h0m0 1h0m1-1h0m0 1h0m1-1h0m0 1h0m1-1h0m0 1h0m1 0h0m1-1h0m0 1h0m1-1h0m0 1h0m1-1h0m0 1h0m1-1h0m0 1h0m1-1h0m0 1h0m1-1h0m0 1h0m1-1h0m0 1h0m1-1h0m0 1h0m1-1h0m0 1h0m1-1h0m0 1h0m1-1h0m0 1h0m1-1h0m0 1h0m1-1h0m0 1h0m1-1h0m0 1h0m1-1h0m0 1h0m1-1h0m0 1h0m1-2h0m0 1h0m0 1h0m1-2h0m0 1h0m0 1h0m1-1h0m0 1h0m1-1h0m0 1h0m1-1h0m0 1h0m1-1h0m0 1h0m1-1h0m0 1h0m1-1h0m0 1h0m1-1h0m0 1h0m1-1h0m0 1h0m1-1h0m0 1h0m1-1h0m0 1h0m1-1h0m0 1h0m1-1h0m0 1h0m1-1h0m0 1h0m1-1h0m0 1h0m1-1h0m0 1h0m1-1h0m0 1h0m1-1h0m0 1h0m1-1h0m0 1h0m1-1h0m0 1h0m1-1h0m0 1h0m1-2h0m0 1h0m0 1h0m1-1h0m0 1h0m1-1h0m0 1h0m1-1h0m0 1h0m1-1h0m0 1h0m1-1h0m0 1h0m1-1h0m0 1h0m1-2h0m0 1h0m0 1h0m1-1h0m0 1h0m1-1h0m0 1h0m1-1h0m0 1h0m1-1h0m0 1h0m1-1h0m0 1h0m1-1h0m0 1h0m1-1h0m0 1h0m1-1h0m0 1h0m1-2h0m0 1h0m0 1h0m1-1h0m0 1h0m1-1h0m0 1h0m1-1h0m0 1h0m1-1h0m0 1h0m1-1h0m0 1h0m1-1h0m0 1h0m1-1h0m0 1h0m1-1h0m0 1h0m1-1h0m0 1h0m1-1h0m0 1h0m1 0h0m1-1h0m0 1h0m1-1h0m0 1h0m1-2h0m0 1h0m0 1h0m1-1h0m0 1h0m1-1h0m0 1h0m1-1h0m0 1h0m1-1h0m0 1h0m1-1h0m0 1h0m1-2h0m0 1h0m0 1h0m1-1h0m0 1h0m1-1h0m0 1h0m1-1h0m0 1h0m1-2h0m0 1h0m0 1h0m1-1h0m0 1h0m1-1h0m0 1h0m1-1h0m0 1h0m1-1h0m0 1h0m1-1h0m0 1h0m1-1h0m0 1h0m1-2h0m0 1h0m0 1h0m1-1h0m0 1h0m1-1h0m0 1h0m1-1h0m0 1h0m1-1h0m0 1h0m1-1h0m0 1h0m1-1h0m0 1h0m1-1h0m0 1h0m1-1h0m0 1h0m1-1h0m0 1h0m1-1h0m0 1h0m1-1h0m0 1h0m1-1h0m0 1h0m1-1h0m0 1h0m1-1h0m0 1h0m1-1h0m0 1h0m1-1h0m0 1h0m1-1h0m0 1h0m1-1h0m0 1h0m1-2h0m0 1h0m0 1h0m1-1h0m0 1h0m1-1h0m0 1h0m1-2h0m0 1h0m0 1h0m1-1h0m0 1h0m1-2h0m0 1h0m0 1h0m1-1h0m0 1h0m1-1h0m0 1h0m1-1h0m0 1h0m1-1h0m0 1h0m1-1h0m0 1h0m1-1h0m0 1h0"/></g>
<path fill="none" stroke="#000" stroke-width="3.4" stroke-linecap="round" d="M202.4 856.45h0M202.4 889.1h0M283.1 856.45h0M283.1 889.1h0M368.2 856.45h0M368.2 889.1h0M451.4 856.45h0M451.4 889.1h0M534.3 856.45h0M534.3 889.1h0M610.2 856.45h0M610.2 889.1h0M616.8 856.45h0M616.8 889.1h0M618.6 856.45h0M618.6 889.1h0M627.8 856.45h0M627.8 889.1h0M633.3 856.45h0M633.3 889.1h0M647.3 856.45h0M647.3 889.1h0M749.2 856.45h0M749.2 889.1h0M903 856.45h0M903 889.1h0M939.4 856.45h0M939.4 889.1h0M1016.2 856.45h0M1016.2 889.1h0M1035.3 856.45h0M1035.3 889.1h0M1052.2 856.45h0M1052.2 889.1h0M1180.4 856.45h0M1180.4 889.1h0M1198.6 856.45h0M1198.6 889.1h0M1266.3 856.45h0M1266.3 889.1h0M1303.2 758.5h0"/>
<path fill="none" stroke="#888" stroke-width="1.2" stroke-linecap="round" d="M202.4 856.45h0M202.4 889.1h0M283.1 856.45h0M283.1 889.1h0M368.2 856.45h0M368.2 889.1h0M451.4 856.45h0M451.4 889.1h0M534.3 856.45h0M534.3 889.1h0M610.2 856.45h0M610.2 889.1h0M616.8 856.45h0M616.8 889.1h0M618.6 856.45h0M618.6 889.1h0M627.8 856.45h0M627.8 889.1h0M633.3 856.45h0M633.3 889.1h0M647.3 856.45h0M647.3 889.1h0M749.2 856.45h0M749.2 889.1h0M903 856.45h0M903 889.1h0M939.4 856.45h0M939.4 889.1h0M1016.2 856.45h0M1016.2 889.1h0M1035.3 856.45h0M1035.3 889.1h0M1052.2 856.45h0M1052.2 889.1h0M1180.4 856.45h0M1180.4 889.1h0M1198.6 856.45h0M1198.6 889.1h0M1266.3 856.45h0M1266.3 889.1h0M1303.2 758.5h0"/>
<path fill="#ff0000" d="M200.1 959.5h4.6l-2.3-4zM280.8 959.5h4.6l-2.3-4zM365.9 959.5h4.6l-2.3-4zM449.1 959.5h4.6l-2.3-4zM532 959.5h4.6l-2.3-4zM607.9 959.5h4.6l-2.3-4zM614.5 959.5h4.6l-2.3-4zM616.3 959.5h4.6l-2.3-4zM625.5 959.5h4.6l-2.3-4zM631 959.5h4.6l-2.3-4zM645 959.5h4.6l-2.3-4zM746.9 959.5h4.6l-2.3-4zM900.7 959.5h4.6l-2.3-4zM937.1 959.5h4.6l-2.3-4zM1013.9 959.5h4.6l-2.3-4zM1033 959.5h4.6l-2.3-4zM1049.9 959.5h4.6l-2.3-4zM1178.1 959.5h4.6l-2.3-4zM1196.3 959.5h4.6l-2.3-4zM1264 959.5h4.6l-2.3-4zM1301.2 959.5h4.6l-2.3-4z"/>
<path fill="none" stroke="#ff0000" stroke-width="2.6" stroke-linecap="round" d="M202.4 977.5h0M618.6 992.2h0M1052.2 992.1h0"/>
<path fill="none" stroke="#000" stroke-width="2.6" stroke-linecap="round" d="M283.1 1001.7h0M368.2 1000.6h0M451.4 1003.2h0M534.3 1000.2h0M610.2 1003.9h0M618.6 1003.2h0M627.8 995.8h0M633.3 1003.2h0M647.3 998.4h0M749.2 999.2h0M903 997.1h0M1016.2 997.1h0M1035.3 999.2h0M1180.4 996.3h0M1198.6 1002h0M1266.3 1003.3h0M1137.4 1002h0M853 1004.1h0"/>
<line x1="162.0" y1="321.5" x2="162.0" y2="35.5" stroke="#800080" stroke-width="2.08" stroke-dasharray="2.08 3.44"/>
<line x1="1299.0" y1="321.5" x2="1299.0" y2="35.5" stroke="#800080" stroke-width="2.08" stroke-dasharray="2.08 3.44"/>
<line x1="1303.0" y1="321.5" x2="1303.0" y2="35.5" stroke="#800080" stroke-width="2.08" stroke-dasharray="2.08 3.44"/>
<line x1="162.0" y1="666.5" x2="162.0" y2="380.5" stroke="#800080" stroke-width="2.08" stroke-dasharray="2.08 3.44"/>
<line x1="1299.0" y1="666.5" x2="1299.0" y2="380.5" stroke="#800080" stroke-width="2.08" stroke-dasharray="2.08 3.44"/>
<line x1="1303.0" y1="666.5" x2="1303.0" y2="380.5" stroke="#800080" stroke-width="2.08" stroke-dasharray="2.08 3.44"/>
<line x1="162.0" y1="1011.5" x2="162.0" y2="725.5" stroke="#800080" stroke-width="2.08" stroke-dasharray="2.08 3.44"/>
<line x1="1299.0" y1="1011.5" x2="1299.0" y2="725.5" stroke="#800080" stroke-width="2.08" stroke-dasharray="2.08 3.44"/>
<line x1="1303.0" y1="1011.5" x2="1303.0" y2="725.5" stroke="#800080" stroke-width="2.08" stroke-dasharray="2.08 3.44"/>
<text x="710" y="311.9" font-size="14.72" textLength="44.19" lengthAdjust="spacingAndGlyphs">11722</text>
<text x="1279.8" y="291.9" font-size="14.72" textLength="44.19" lengthAdjust="spacingAndGlyphs">56098</text>
<text x="710" y="656.9" font-size="14.72" textLength="44.19" lengthAdjust="spacingAndGlyphs">11722</text>
<text x="1279.8" y="636.9" font-size="14.72" textLength="44.19" lengthAdjust="spacingAndGlyphs">56098</text>
<rect x="105.5" y="35.5" width="1380.0" height="286.0" fill="none" stroke="#000" stroke-width="1.11"/>
<path stroke="#000" stroke-width="1.11" d="M162.5 321.5v5.3M317.5 321.5v5.3M471.5 321.5v5.3M625.5 321.5v5.3M780.5 321.5v5.3M934.5 321.5v5.3M1089.5 321.5v5.3M1243.5 321.5v5.3M1398.5 321.5v5.3"/>
<text x="158.48" y="342.3" font-size="14.72" textLength="8.84" lengthAdjust="spacingAndGlyphs">0</text>
<text x="299.68" y="342.3" font-size="14.72" textLength="35.35" lengthAdjust="spacingAndGlyphs">2000</text>
<text x="454.13" y="342.3" font-size="14.72" textLength="35.35" lengthAdjust="spacingAndGlyphs">4000</text>
<text x="608.58" y="342.3" font-size="14.72" textLength="35.35" lengthAdjust="spacingAndGlyphs">6000</text>
<text x="763.03" y="342.3" font-size="14.72" textLength="35.35" lengthAdjust="spacingAndGlyphs">8000</text>
<text x="913.06" y="342.3" font-size="14.72" textLength="44.19" lengthAdjust="spacingAndGlyphs">10000</text>
<text x="1067.51" y="342.3" font-size="14.72" textLength="44.19" lengthAdjust="spacingAndGlyphs">12000</text>
<text x="1221.96" y="342.3" font-size="14.72" textLength="44.19" lengthAdjust="spacingAndGlyphs">14000</text>
<text x="1376.41" y="342.3" font-size="14.72" textLength="44.19" lengthAdjust="spacingAndGlyphs">16000</text>
<rect x="105.5" y="380.5" width="1380.0" height="286.0" fill="none" stroke="#000" stroke-width="1.11"/>
<path stroke="#000" stroke-width="1.11" d="M162.5 666.5v5.3M317.5 666.5v5.3M471.5 666.5v5.3M625.5 666.5v5.3M780.5 666.5v5.3M934.5 666.5v5.3M1089.5 666.5v5.3M1243.5 666.5v5.3M1398.5 666.5v5.3"/>
<text x="158.48" y="687.3" font-size="14.72" textLength="8.84" lengthAdjust="spacingAndGlyphs">0</text>
<text x="299.68" y="687.3" font-size="14.72" textLength="35.35" lengthAdjust="spacingAndGlyphs">2000</text>
<text x="454.13" y="687.3" font-size="14.72" textLength="35.35" lengthAdjust="spacingAndGlyphs">4000</text>
<text x="608.58" y="687.3" font-size="14.72" textLength="35.35" lengthAdjust="spacingAndGlyphs">6000</text>
<text x="763.03" y="687.3" font-size="14.72" textLength="35.35" lengthAdjust="spacingAndGlyphs">8000</text>
<text x="913.06" y="687.3" font-size="14.72" textLength="44.19" lengthAdjust="spacingAndGlyphs">10000</text>
<text x="1067.51" y="687.3" font-size="14.72" textLength="44.19" lengthAdjust="spacingAndGlyphs">12000</text>
<text x="1221.96" y="687.3" font-size="14.72" textLength="44.19" lengthAdjust="spacingAndGlyphs">14000</text>
<text x="1376.41" y="687.3" font-size="14.72" textLength="44.19" lengthAdjust="spacingAndGlyphs">16000</text>
<rect x="105.5" y="725.5" width="1380.0" height="286.0" fill="none" stroke="#000" stroke-width="1.11"/>
<path stroke="#000" stroke-width="1.11" d="M162.5 1011.5v5.3M317.5 1011.5v5.3M471.5 1011.5v5.3M625.5 1011.5v5.3M780.5 1011.5v5.3M934.5 1011.5v5.3M1089.5 1011.5v5.3M1243.5 1011.5v5.3M1398.5 1011.5v5.3"/>
<text x="158.48" y="1032.3" font-size="14.72" textLength="8.84" lengthAdjust="spacingAndGlyphs">0</text>
<text x="299.68" y="1032.3" font-size="14.72" textLength="35.35" lengthAdjust="spacingAndGlyphs">2000</text>
<text x="454.13" y="1032.3" font-size="14.72" textLength="35.35" lengthAdjust="spacingAndGlyphs">4000</text>
<text x="608.58" y="1032.3" font-size="14.72" textLength="35.35" lengthAdjust="spacingAndGlyphs">6000</text>
<text x="763.03" y="1032.3" font-size="14.72" textLength="35.35" lengthAdjust="spacingAndGlyphs">8000</text>
<text x="913.06" y="1032.3" font-size="14.72" textLength="44.19" lengthAdjust="spacingAndGlyphs">10000</text>
<text x="1067.51" y="1032.3" font-size="14.72" textLength="44.19" lengthAdjust="spacingAndGlyphs">12000</text>
<text x="1221.96" y="1032.3" font-size="14.72" textLength="44.19" lengthAdjust="spacingAndGlyphs">14000</text>
<text x="1376.41" y="1032.3" font-size="14.72" textLength="44.19" lengthAdjust="spacingAndGlyphs">16000</text>
<line x1="105.5" y1="954.5" x2="1485.5" y2="954.5" stroke="#000" stroke-width="1.11"/>
<path stroke="#000" stroke-width="1.11" d="M105.5 294.5h-5.3"/>
<text x="73.69" y="299.42" font-size="14.72" textLength="22.09" lengthAdjust="spacingAndGlyphs">8.8</text>
<path stroke="#000" stroke-width="1.11" d="M105.5 255.5h-5.3"/>
<text x="73.69" y="260.75" font-size="14.72" textLength="22.09" lengthAdjust="spacingAndGlyphs">8.9</text>
<path stroke="#000" stroke-width="1.11" d="M105.5 216.5h-5.3"/>
<text x="73.69" y="222.08" font-size="14.72" textLength="22.09" lengthAdjust="spacingAndGlyphs">9.0</text>
<path stroke="#000" stroke-width="1.11" d="M105.5 178.5h-5.3"/>
<text x="73.69" y="183.41" font-size="14.72" textLength="22.09" lengthAdjust="spacingAndGlyphs">9.1</text>
<path stroke="#000" stroke-width="1.11" d="M105.5 139.5h-5.3"/>
<text x="73.69" y="144.74" font-size="14.72" textLength="22.09" lengthAdjust="spacingAndGlyphs">9.2</text>
<path stroke="#000" stroke-width="1.11" d="M105.5 100.5h-5.3"/>
<text x="73.69" y="106.07" font-size="14.72" textLength="22.09" lengthAdjust="spacingAndGlyphs">9.3</text>
<path stroke="#000" stroke-width="1.11" d="M105.5 62.5h-5.3"/>
<text x="73.69" y="67.4" font-size="14.72" textLength="22.09" lengthAdjust="spacingAndGlyphs">9.4</text>
<path stroke="#000" stroke-width="1.11" d="M105.5 648.5h-5.3"/>
<text x="64.85" y="653.5" font-size="14.72" textLength="30.93" lengthAdjust="spacingAndGlyphs">9.30</text>
<path stroke="#000" stroke-width="1.11" d="M105.5 608.5h-5.3"/>
<text x="64.85" y="613.5" font-size="14.72" textLength="30.93" lengthAdjust="spacingAndGlyphs">9.32</text>
<path stroke="#000" stroke-width="1.11" d="M105.5 568.5h-5.3"/>
<text x="64.85" y="573.5" font-size="14.72" textLength="30.93" lengthAdjust="spacingAndGlyphs">9.34</text>
<path stroke="#000" stroke-width="1.11" d="M105.5 528.5h-5.3"/>
<text x="64.85" y="533.5" font-size="14.72" textLength="30.93" lengthAdjust="spacingAndGlyphs">9.36</text>
<path stroke="#000" stroke-width="1.11" d="M105.5 488.5h-5.3"/>
<text x="64.85" y="493.5" font-size="14.72" textLength="30.93" lengthAdjust="spacingAndGlyphs">9.38</text>
<path stroke="#000" stroke-width="1.11" d="M105.5 448.5h-5.3"/>
<text x="64.85" y="453.5" font-size="14.72" textLength="30.93" lengthAdjust="spacingAndGlyphs">9.40</text>
<path stroke="#000" stroke-width="1.11" d="M105.5 408.5h-5.3"/>
<text x="64.85" y="413.5" font-size="14.72" textLength="30.93" lengthAdjust="spacingAndGlyphs">9.42</text>
<path stroke="#000" stroke-width="1.11" d="M105.5 758.5h-5.3"/>
<text x="16.54" y="763.6" font-size="14.72" textLength="79.24" lengthAdjust="spacingAndGlyphs">not Kalman</text>
<path stroke="#000" stroke-width="1.11" d="M105.5 791.5h-5.3"/>
<text x="33.27" y="796.25" font-size="14.72" textLength="62.51" lengthAdjust="spacingAndGlyphs">not track</text>
<path stroke="#000" stroke-width="1.11" d="M105.5 823.5h-5.3"/>
<text x="26.89" y="828.9" font-size="14.72" textLength="68.89" lengthAdjust="spacingAndGlyphs">Sat. pixel.</text>
<path stroke="#000" stroke-width="1.11" d="M105.5 856.5h-5.3"/>
<text x="38.1" y="861.55" font-size="14.72" textLength="57.68" lengthAdjust="spacingAndGlyphs">Ion. rad.</text>
<path stroke="#000" stroke-width="1.11" d="M105.5 889.5h-5.3"/>
<text x="51.95" y="894.2" font-size="14.72" textLength="43.83" lengthAdjust="spacingAndGlyphs">dr &gt; 5</text>
<path stroke="#000" stroke-width="1.11" d="M105.5 921.5h-5.3"/>
<text x="15.13" y="926.85" font-size="14.72" textLength="80.65" lengthAdjust="spacingAndGlyphs">OBS not OK</text>
<path stroke="#000" stroke-width="1.11" d="M105.5 1009.5h-5.3"/>
<text x="86.94" y="1014.6" font-size="14.72" textLength="8.84" lengthAdjust="spacingAndGlyphs">0</text>
<path stroke="#000" stroke-width="1.11" d="M105.5 983.5h-5.3"/>
<text x="86.94" y="988.6" font-size="14.72" textLength="8.84" lengthAdjust="spacingAndGlyphs">5</text>
<path stroke="#000" stroke-width="1.11" d="M105.5 957.5h-5.3"/>
<text x="78.11" y="962.6" font-size="14.72" textLength="17.67" lengthAdjust="spacingAndGlyphs">10</text>
<path stroke="#000" stroke-width="0.83" d="M105.5 996.5h-2.78"/>
<path stroke="#000" stroke-width="0.83" d="M105.5 970.5h-2.78"/>
<text transform="translate(68.6 983.3) rotate(-90)" x="-7.26" y="0" font-size="14.72" textLength="14.53" lengthAdjust="spacingAndGlyphs">dr</text>
<text x="696.82" y="26.9" font-size="16.67" textLength="197.36" lengthAdjust="spacingAndGlyphs">AGASC ID 508561712.0</text>
<text x="707.53" y="371.8" font-size="16.67" textLength="175.93" lengthAdjust="spacingAndGlyphs">Magnitude Estimates</text>
<rect x="1361.5" y="42.3" width="117" height="27.2" rx="2.8" fill="#fff" fill-opacity="0.8" stroke="#cccccc" stroke-width="1.11"/>
<line x1="1365.7" y1="53.8" x2="1395.9" y2="53.8" stroke="#008000" stroke-width="2.08"/>
<text x="1407.4" y="59.1" font-size="14.72" textLength="30.86" lengthAdjust="spacingAndGlyphs">mag</text>
<text x="1438.26" y="60.8" font-size="10.3" textLength="33.79" lengthAdjust="spacingAndGlyphs" font-style="italic">AGASC</text>
<rect x="1348.5" y="247.5" width="130" height="67" rx="2.8" fill="#fff" fill-opacity="0.8" stroke="#cccccc" stroke-width="1.11"/>
<path fill="none" stroke-width="4" stroke-linecap="round" stroke="#ff0000" d="M1367.5 260.5h0"/>
<path fill="none" stroke-width="4" stroke-linecap="round" stroke="#ffa500" d="M1367.5 281.5h0"/>
<path fill="none" stroke-width="4" stroke-linecap="round" stroke="#000" d="M1367.5 302.5h0"/>
<text x="1392.2" y="264.2" font-size="14.72" textLength="47.2" lengthAdjust="spacingAndGlyphs">not OK</text>
<text x="1393" y="285.2" font-size="14.72" textLength="80.07" lengthAdjust="spacingAndGlyphs">Highlighted</text>
<text x="1393" y="306.2" font-size="14.72" textLength="20.04" lengthAdjust="spacingAndGlyphs">OK</text>
<rect x="1365.4" y="387.5" width="113.3" height="47.8" rx="2.8" fill="#fff" fill-opacity="0.8" stroke="#cccccc" stroke-width="1.11"/>
<line x1="1369.1" y1="399.4" x2="1400" y2="399.4" stroke="#ffa500" stroke-width="2.8"/>
<line x1="1369.1" y1="422" x2="1399" y2="422" stroke="#ff0000" stroke-width="2.08"/>
<text x="1410.5" y="403.8" font-size="14.72" textLength="30.86" lengthAdjust="spacingAndGlyphs">mag</text>
<text x="1441.36" y="405.7" font-size="10.3" textLength="30.84" lengthAdjust="spacingAndGlyphs" font-style="italic">OBSID</text>
<text x="1409.8" y="426.4" font-size="14.72" textLength="30.86" lengthAdjust="spacingAndGlyphs">mag</text>
<rect x="1348.5" y="613.5" width="130" height="46" rx="2.8" fill="#fff" fill-opacity="0.8" stroke="#cccccc" stroke-width="1.11"/>
<path fill="none" stroke-width="4" stroke-linecap="round" stroke="#ffa500" d="M1367.5 626.5h0"/>
<path fill="none" stroke-width="4" stroke-linecap="round" stroke="#000" d="M1367.5 647.5h0"/>
<text x="1393" y="629.9" font-size="14.72" textLength="80.07" lengthAdjust="spacingAndGlyphs">Highlighted</text>
<text x="1393" y="650.9" font-size="14.72" textLength="20.04" lengthAdjust="spacingAndGlyphs">OK</text>
</svg></body></html>
